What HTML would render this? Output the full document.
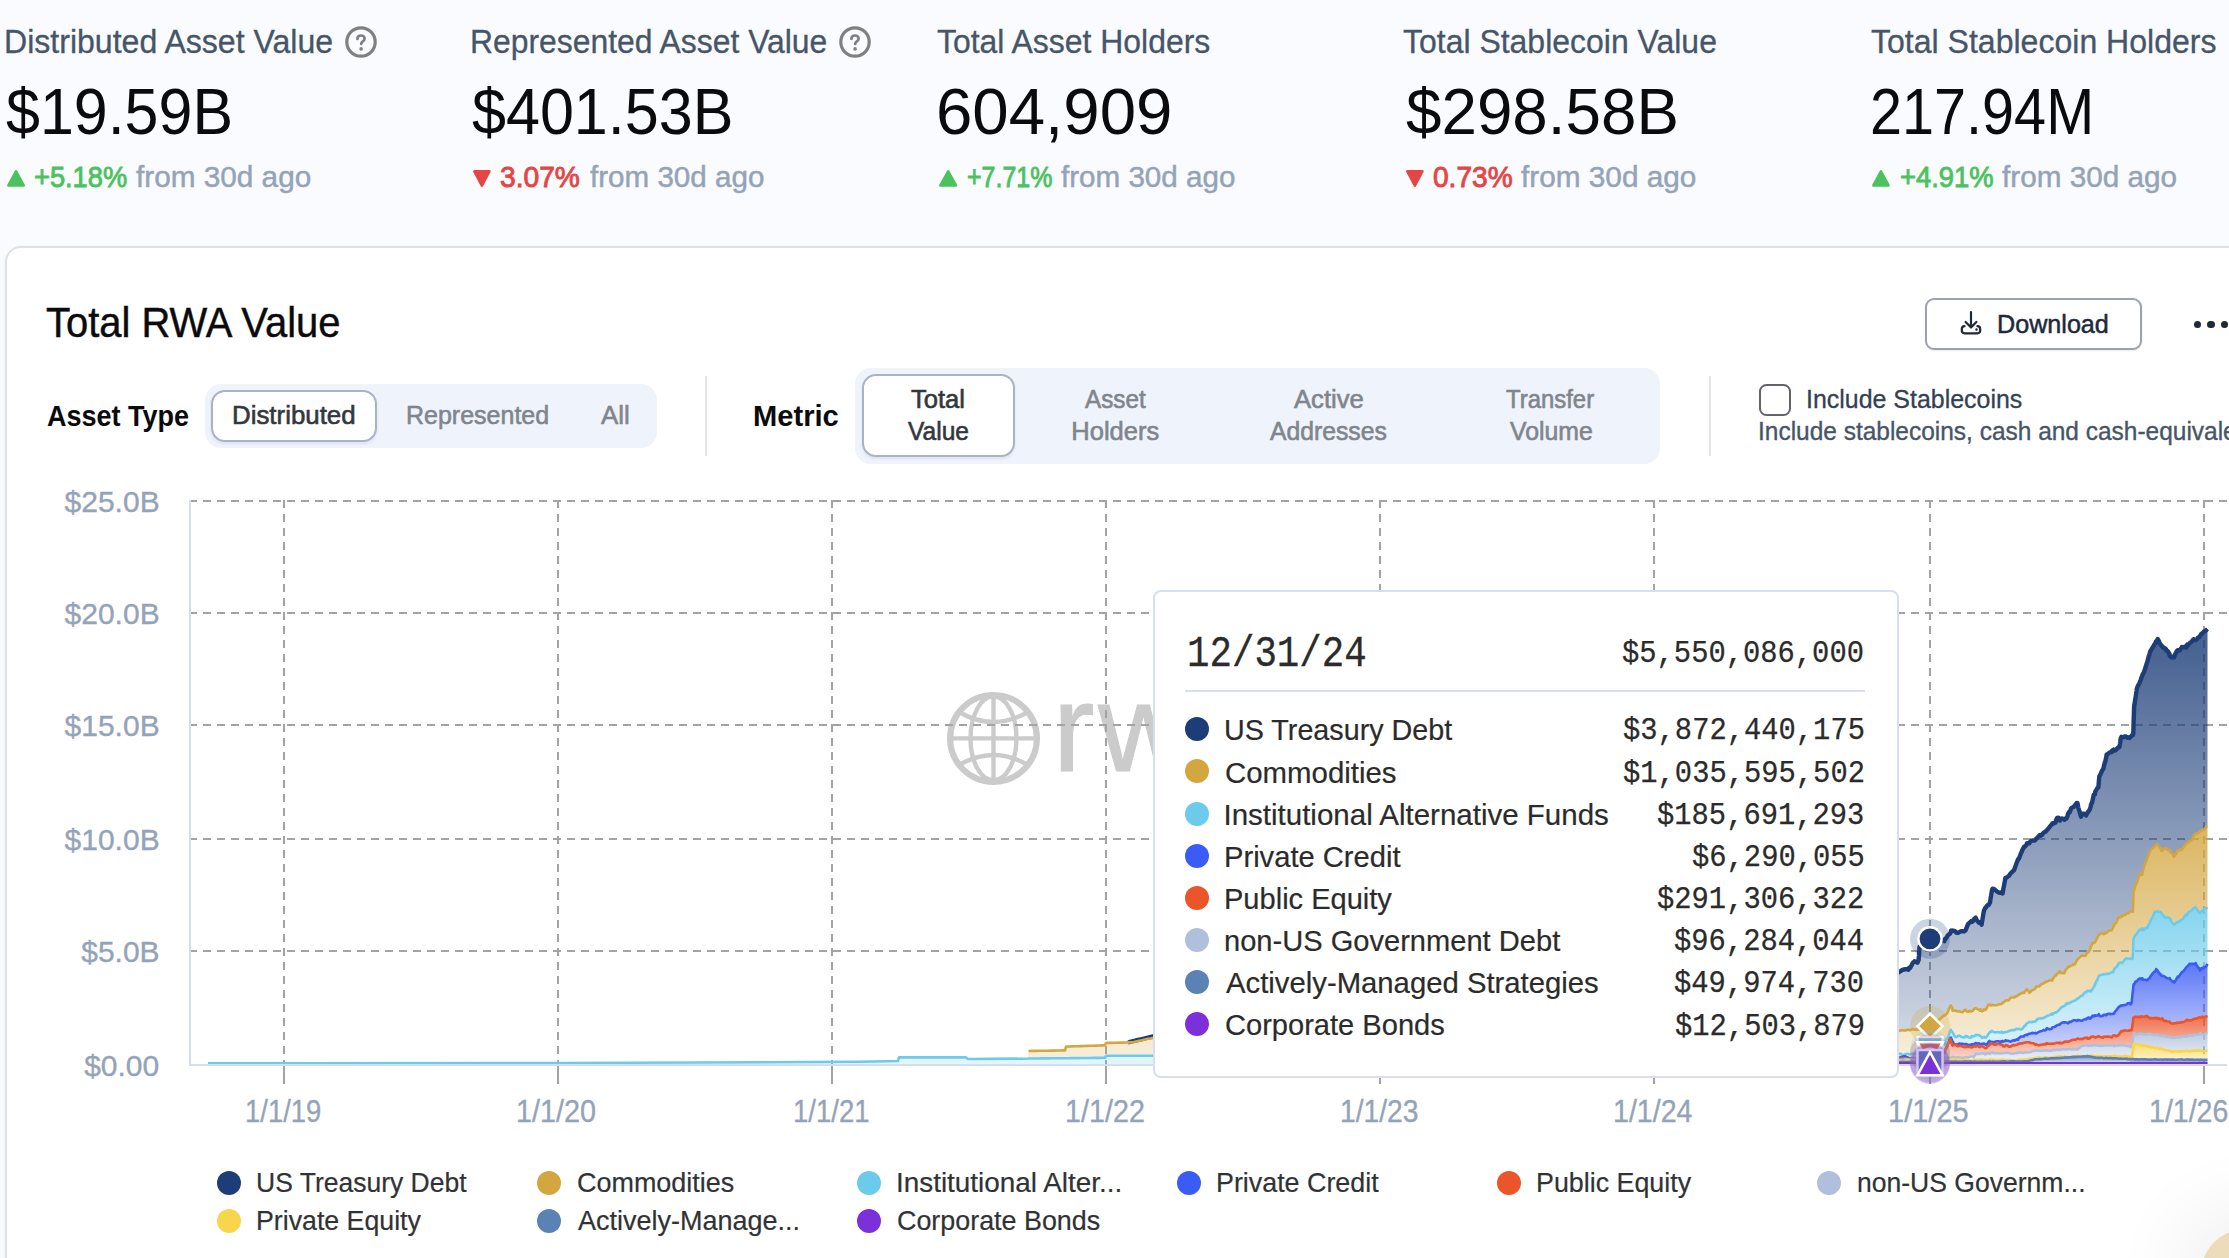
<!DOCTYPE html>
<html><head><meta charset="utf-8"><title>RWA</title><style>
html,body{margin:0;padding:0;width:2229px;height:1258px;overflow:hidden;background:#f9fbfe;}
.a{position:absolute;display:block;}
.t{position:absolute;white-space:nowrap;transform-origin:0 50%;display:block;}
.card{left:5px;top:246px;width:2400px;height:1200px;box-sizing:border-box;border:2px solid #e1e1e4;border-radius:16px;background:#fff;box-shadow:0 1px 4px rgba(0,0,0,0.05);}
.dl{left:1925px;top:298px;width:217px;height:51.5px;box-sizing:border-box;border:2px solid #9ca2ad;border-radius:9px;background:#fff;box-shadow:0 1px 2px rgba(0,0,0,0.08);}
.seg{background:#eef3fc;border-radius:16px;}
.pill{box-sizing:border-box;background:#fff;border:2px solid #a9b3c7;border-radius:14px;box-shadow:0 2px 3px rgba(30,40,80,0.08);}
.tip{left:1153px;top:590px;width:746px;height:488px;box-sizing:border-box;border:2px solid #d7deec;border-radius:8px;background:#fff;}
</style></head><body>
<span class="t" style="left:4.25px;top:23.27px;font-family:'Liberation Sans', sans-serif;font-weight:400;font-size:32.4px;line-height:39px;color:#475569;transform:scaleX(0.9898);-webkit-text-stroke:0.3px #475569;">Distributed Asset Value</span>
<svg class="a" style="left:344px;top:25px" width="34" height="34" viewBox="0 0 34 34"><circle cx="17" cy="17" r="14.2" fill="none" stroke="#808080" stroke-width="3.2"/><path d="M13.4 14 C13.4 11.8 15 10.5 17 10.5 C19 10.5 20.6 11.8 20.6 13.7 C20.6 15.4 19.3 16.1 18.3 16.8 C17.5 17.4 17.2 17.9 17.2 18.9" fill="none" stroke="#808080" stroke-width="2.7" stroke-linecap="round"/><circle cx="17.1" cy="23.9" r="1.8" fill="#808080"/></svg>
<span class="t" style="left:6.29px;top:72.56px;font-family:'Liberation Sans', sans-serif;font-weight:400;font-size:65px;line-height:78px;color:#0b0b0d;transform:scaleX(0.9376);">$19.59B</span>
<svg class="a" style="left:6.9px;top:168.5px" width="18.1" height="18" viewBox="0 0 18 18" preserveAspectRatio="none"><path d="M9 2.3 L16.6 16.4 L1.4 16.4 Z" fill="#4cc25f" stroke="#4cc25f" stroke-width="2.6" stroke-linejoin="round"/></svg>
<span class="t" style="left:34.21px;top:160.25px;font-family:'Liberation Sans', sans-serif;font-weight:400;font-size:29px;line-height:35px;color:#4cc25f;transform:scaleX(0.9392);-webkit-text-stroke:0.9px #4cc25f;">+5.18%</span>
<span class="t" style="left:136.05px;top:160.25px;font-family:'Liberation Sans', sans-serif;font-weight:400;font-size:29px;line-height:35px;color:#94a3b8;transform:scaleX(1.0255);-webkit-text-stroke:0.45px #94a3b8;">from 30d ago</span>
<span class="t" style="left:470.17px;top:23.27px;font-family:'Liberation Sans', sans-serif;font-weight:400;font-size:32.4px;line-height:39px;color:#475569;transform:scaleX(0.9840);-webkit-text-stroke:0.3px #475569;">Represented Asset Value</span>
<svg class="a" style="left:838px;top:25px" width="34" height="34" viewBox="0 0 34 34"><circle cx="17" cy="17" r="14.2" fill="none" stroke="#808080" stroke-width="3.2"/><path d="M13.4 14 C13.4 11.8 15 10.5 17 10.5 C19 10.5 20.6 11.8 20.6 13.7 C20.6 15.4 19.3 16.1 18.3 16.8 C17.5 17.4 17.2 17.9 17.2 18.9" fill="none" stroke="#808080" stroke-width="2.7" stroke-linecap="round"/><circle cx="17.1" cy="23.9" r="1.8" fill="#808080"/></svg>
<span class="t" style="left:472.19px;top:72.56px;font-family:'Liberation Sans', sans-serif;font-weight:400;font-size:65px;line-height:78px;color:#0b0b0d;transform:scaleX(0.9391);">$401.53B</span>
<svg class="a" style="left:472.8px;top:169.5px" width="17.8" height="18" viewBox="0 0 18 18" preserveAspectRatio="none"><path d="M1.4 1.4 L16.6 1.4 L9 15.6 Z" fill="#e54545" stroke="#e54545" stroke-width="2.6" stroke-linejoin="round"/></svg>
<span class="t" style="left:500.44px;top:160.25px;font-family:'Liberation Sans', sans-serif;font-weight:400;font-size:29px;line-height:35px;color:#e54545;transform:scaleX(0.9715);-webkit-text-stroke:0.9px #e54545;">3.07%</span>
<span class="t" style="left:589.86px;top:160.25px;font-family:'Liberation Sans', sans-serif;font-weight:400;font-size:29px;line-height:35px;color:#94a3b8;transform:scaleX(1.0202);-webkit-text-stroke:0.45px #94a3b8;">from 30d ago</span>
<span class="t" style="left:937.08px;top:23.27px;font-family:'Liberation Sans', sans-serif;font-weight:400;font-size:32.4px;line-height:39px;color:#475569;transform:scaleX(0.9855);-webkit-text-stroke:0.3px #475569;">Total Asset Holders</span>
<span class="t" style="left:935.53px;top:72.56px;font-family:'Liberation Sans', sans-serif;font-weight:400;font-size:65px;line-height:78px;color:#0b0b0d;transform:scaleX(1.0060);">604,909</span>
<svg class="a" style="left:939.2px;top:168.5px" width="18.4" height="18" viewBox="0 0 18 18" preserveAspectRatio="none"><path d="M9 2.3 L16.6 16.4 L1.4 16.4 Z" fill="#4cc25f" stroke="#4cc25f" stroke-width="2.6" stroke-linejoin="round"/></svg>
<span class="t" style="left:966.81px;top:160.25px;font-family:'Liberation Sans', sans-serif;font-weight:400;font-size:29px;line-height:35px;color:#4cc25f;transform:scaleX(0.8606);-webkit-text-stroke:0.9px #4cc25f;">+7.71%</span>
<span class="t" style="left:1060.76px;top:160.25px;font-family:'Liberation Sans', sans-serif;font-weight:400;font-size:29px;line-height:35px;color:#94a3b8;transform:scaleX(1.0202);-webkit-text-stroke:0.45px #94a3b8;">from 30d ago</span>
<span class="t" style="left:1403.48px;top:23.27px;font-family:'Liberation Sans', sans-serif;font-weight:400;font-size:32.4px;line-height:39px;color:#475569;transform:scaleX(0.9868);-webkit-text-stroke:0.3px #475569;">Total Stablecoin Value</span>
<span class="t" style="left:1405.56px;top:72.56px;font-family:'Liberation Sans', sans-serif;font-weight:400;font-size:65px;line-height:78px;color:#0b0b0d;transform:scaleX(0.9807);">$298.58B</span>
<svg class="a" style="left:1406.2px;top:169.5px" width="17.8" height="18" viewBox="0 0 18 18" preserveAspectRatio="none"><path d="M1.4 1.4 L16.6 1.4 L9 15.6 Z" fill="#e54545" stroke="#e54545" stroke-width="2.6" stroke-linejoin="round"/></svg>
<span class="t" style="left:1433.28px;top:160.25px;font-family:'Liberation Sans', sans-serif;font-weight:400;font-size:29px;line-height:35px;color:#e54545;transform:scaleX(0.9686);-webkit-text-stroke:0.9px #e54545;">0.73%</span>
<span class="t" style="left:1521.45px;top:160.25px;font-family:'Liberation Sans', sans-serif;font-weight:400;font-size:29px;line-height:35px;color:#94a3b8;transform:scaleX(1.0261);-webkit-text-stroke:0.45px #94a3b8;">from 30d ago</span>
<span class="t" style="left:1870.58px;top:23.27px;font-family:'Liberation Sans', sans-serif;font-weight:400;font-size:32.4px;line-height:39px;color:#475569;transform:scaleX(0.9892);-webkit-text-stroke:0.3px #475569;">Total Stablecoin Holders</span>
<span class="t" style="left:1870.02px;top:72.56px;font-family:'Liberation Sans', sans-serif;font-weight:400;font-size:65px;line-height:78px;color:#0b0b0d;transform:scaleX(0.8860);">217.94M</span>
<svg class="a" style="left:1872.4px;top:168.5px" width="17.9" height="18" viewBox="0 0 18 18" preserveAspectRatio="none"><path d="M9 2.3 L16.6 16.4 L1.4 16.4 Z" fill="#4cc25f" stroke="#4cc25f" stroke-width="2.6" stroke-linejoin="round"/></svg>
<span class="t" style="left:1899.70px;top:160.25px;font-family:'Liberation Sans', sans-serif;font-weight:400;font-size:29px;line-height:35px;color:#4cc25f;transform:scaleX(0.9443);-webkit-text-stroke:0.9px #4cc25f;">+4.91%</span>
<span class="t" style="left:2002.25px;top:160.25px;font-family:'Liberation Sans', sans-serif;font-weight:400;font-size:29px;line-height:35px;color:#94a3b8;transform:scaleX(1.0249);-webkit-text-stroke:0.45px #94a3b8;">from 30d ago</span>
<div class="a card"></div>
<span class="t" style="left:46.30px;top:298.34px;font-family:'Liberation Sans', sans-serif;font-weight:400;font-size:42px;line-height:50px;color:#0b0b0d;transform:scaleX(0.9508);-webkit-text-stroke:0.45px #0b0b0d;">Total RWA Value</span>
<div class="a dl"></div>
<svg class="a" style="left:1955px;top:305px" width="32" height="34" viewBox="1955 305 32 34"><path d="M1971 312.2 V327 M1965.6 322 L1971 327.4 L1976.4 322" fill="none" stroke="#1e293b" stroke-width="2.2" stroke-linecap="round" stroke-linejoin="round"/><path d="M1964.6 326.2 Q1961.8 326.2 1961.8 329.2 V330.6 Q1961.8 333.3 1964.6 333.3 H1977.4 Q1980.2 333.3 1980.2 330.6 V329.2 Q1980.2 326.2 1977.4 326.2" fill="none" stroke="#1e293b" stroke-width="2.2" stroke-linecap="round" stroke-linejoin="round"/><circle cx="1976.5" cy="329.5" r="1.2" fill="#1e293b"/></svg>
<span class="t" style="left:1997.43px;top:308.53px;font-family:'Liberation Sans', sans-serif;font-weight:400;font-size:25px;line-height:30px;color:#1e293b;transform:scaleX(1.0059);-webkit-text-stroke:0.5px #1e293b;">Download</span>
<div class="a" style="left:2193.6px;top:320.5px;width:7.4px;height:7.4px;border-radius:50%;background:#1e293b"></div>
<div class="a" style="left:2207.2px;top:320.5px;width:7.4px;height:7.4px;border-radius:50%;background:#1e293b"></div>
<div class="a" style="left:2220.9px;top:320.5px;width:7.4px;height:7.4px;border-radius:50%;background:#1e293b"></div>
<span class="t" style="left:46.93px;top:398.37px;font-family:'Liberation Sans', sans-serif;font-weight:700;font-size:29.5px;line-height:35px;color:#0b0b0d;transform:scaleX(0.9148);">Asset Type</span>
<div class="a seg" style="left:205px;top:384px;width:451.7px;height:63.8px"></div>
<div class="a pill" style="left:211px;top:390px;width:165.5px;height:51.5px"></div>
<span class="t" style="left:231.87px;top:399.76px;font-family:'Liberation Sans', sans-serif;font-weight:400;font-size:25.5px;line-height:31px;color:#33373d;transform:scaleX(1.0144);-webkit-text-stroke:0.6px #33373d;">Distributed</span>
<span class="t" style="left:405.64px;top:399.96px;font-family:'Liberation Sans', sans-serif;font-weight:400;font-size:25.5px;line-height:31px;color:#80858c;transform:scaleX(0.9804);-webkit-text-stroke:0.55px #80858c;">Represented</span>
<span class="t" style="left:600.94px;top:399.96px;font-family:'Liberation Sans', sans-serif;font-weight:400;font-size:25.5px;line-height:31px;color:#80858c;transform:scaleX(1.0157);-webkit-text-stroke:0.55px #80858c;">All</span>
<div class="a" style="left:705px;top:376px;width:2px;height:79.5px;background:#e3e3e7"></div>
<span class="t" style="left:753.43px;top:398.37px;font-family:'Liberation Sans', sans-serif;font-weight:700;font-size:29.5px;line-height:35px;color:#0b0b0d;transform:scaleX(0.9872);">Metric</span>
<div class="a seg" style="left:855.3px;top:368px;width:805.1px;height:95.7px"></div>
<div class="a pill" style="left:861.5px;top:374.2px;width:153px;height:82.8px"></div>
<span class="t" style="left:911.32px;top:383.86px;font-family:'Liberation Sans', sans-serif;font-weight:400;font-size:25.5px;line-height:31px;color:#33373d;transform:scaleX(1.0024);-webkit-text-stroke:0.6px #33373d;">Total</span>
<span class="t" style="left:907.68px;top:415.76px;font-family:'Liberation Sans', sans-serif;font-weight:400;font-size:25.5px;line-height:31px;color:#33373d;transform:scaleX(0.9631);-webkit-text-stroke:0.6px #33373d;">Value</span>
<span class="t" style="left:1085.44px;top:383.86px;font-family:'Liberation Sans', sans-serif;font-weight:400;font-size:25.5px;line-height:31px;color:#80858c;transform:scaleX(0.9528);-webkit-text-stroke:0.6px #80858c;">Asset</span>
<span class="t" style="left:1071.30px;top:415.76px;font-family:'Liberation Sans', sans-serif;font-weight:400;font-size:25.5px;line-height:31px;color:#80858c;-webkit-text-stroke:0.6px #80858c;">Holders</span>
<span class="t" style="left:1294.14px;top:383.86px;font-family:'Liberation Sans', sans-serif;font-weight:400;font-size:25.5px;line-height:31px;color:#80858c;transform:scaleX(1.0062);-webkit-text-stroke:0.6px #80858c;">Active</span>
<span class="t" style="left:1269.94px;top:415.76px;font-family:'Liberation Sans', sans-serif;font-weight:400;font-size:25.5px;line-height:31px;color:#80858c;transform:scaleX(0.9696);-webkit-text-stroke:0.6px #80858c;">Addresses</span>
<span class="t" style="left:1506.46px;top:383.86px;font-family:'Liberation Sans', sans-serif;font-weight:400;font-size:25.5px;line-height:31px;color:#80858c;transform:scaleX(0.9375);-webkit-text-stroke:0.6px #80858c;">Transfer</span>
<span class="t" style="left:1510.18px;top:415.76px;font-family:'Liberation Sans', sans-serif;font-weight:400;font-size:25.5px;line-height:31px;color:#80858c;transform:scaleX(0.9722);-webkit-text-stroke:0.6px #80858c;">Volume</span>
<div class="a" style="left:1709px;top:376px;width:2px;height:79.5px;background:#e3e3e7"></div>
<div class="a" style="left:1759px;top:384.3px;width:31.8px;height:31.5px;box-sizing:border-box;border:2.4px solid #64626b;border-radius:7.5px;background:#fff"></div>
<span class="t" style="left:1805.69px;top:383.83px;font-family:'Liberation Sans', sans-serif;font-weight:400;font-size:25px;line-height:30px;color:#334155;transform:scaleX(0.9975);-webkit-text-stroke:0.3px #334155;">Include Stablecoins</span>
<span class="t" style="left:1757.84px;top:415.93px;font-family:'Liberation Sans', sans-serif;font-weight:400;font-size:25px;line-height:30px;color:#475569;transform:scaleX(0.9786);-webkit-text-stroke:0.35px #475569;">Include stablecoins, cash and cash-equivalents</span>
<svg class="a" style="left:0;top:0" width="2229" height="1258" viewBox="0 0 2229 1258">
<defs>
<linearGradient id="g0" x1="0" y1="0" x2="0" y2="1"><stop offset="5%" stop-color="#7b30d9" stop-opacity="0.8"/><stop offset="95%" stop-color="#7b30d9" stop-opacity="0.2"/></linearGradient>
<linearGradient id="g1" x1="0" y1="0" x2="0" y2="1"><stop offset="5%" stop-color="#5a82b4" stop-opacity="0.8"/><stop offset="95%" stop-color="#5a82b4" stop-opacity="0.2"/></linearGradient>
<linearGradient id="g2" x1="0" y1="0" x2="0" y2="1"><stop offset="5%" stop-color="#f8d54a" stop-opacity="0.8"/><stop offset="95%" stop-color="#f8d54a" stop-opacity="0.2"/></linearGradient>
<linearGradient id="g3" x1="0" y1="0" x2="0" y2="1"><stop offset="5%" stop-color="#b0c0dc" stop-opacity="0.8"/><stop offset="95%" stop-color="#b0c0dc" stop-opacity="0.2"/></linearGradient>
<linearGradient id="g4" x1="0" y1="0" x2="0" y2="1"><stop offset="5%" stop-color="#ec5429" stop-opacity="0.8"/><stop offset="95%" stop-color="#ec5429" stop-opacity="0.2"/></linearGradient>
<linearGradient id="g5" x1="0" y1="0" x2="0" y2="1"><stop offset="5%" stop-color="#3b5cf4" stop-opacity="0.8"/><stop offset="95%" stop-color="#3b5cf4" stop-opacity="0.2"/></linearGradient>
<linearGradient id="g6" x1="0" y1="0" x2="0" y2="1"><stop offset="5%" stop-color="#6ccbeb" stop-opacity="0.8"/><stop offset="95%" stop-color="#6ccbeb" stop-opacity="0.2"/></linearGradient>
<linearGradient id="g7" x1="0" y1="0" x2="0" y2="1"><stop offset="5%" stop-color="#d4a640" stop-opacity="0.8"/><stop offset="95%" stop-color="#d4a640" stop-opacity="0.2"/></linearGradient>
<linearGradient id="g8" x1="0" y1="0" x2="0" y2="1"><stop offset="5%" stop-color="#1c3d78" stop-opacity="0.8"/><stop offset="95%" stop-color="#1c3d78" stop-opacity="0.2"/></linearGradient>
</defs>
<g fill="none" stroke="#cbcbcb" stroke-width="4.4"><circle cx="993.5" cy="738.4" r="43.4" stroke-width="6.2"/><line x1="993.5" y1="695" x2="993.5" y2="782"/><line x1="950" y1="738.4" x2="1037" y2="738.4"/><ellipse cx="993.5" cy="738.4" rx="23" ry="42"/><path d="M959 712 Q993.5 732 1028 712"/><path d="M959 765 Q993.5 745 1028 765"/></g>
<text y="771.2" font-family="Liberation Sans" font-size="125" fill="#cbcbcb" stroke="#cbcbcb" stroke-width="1.2"><tspan x="1052.7">r</tspan><tspan x="1098.3">wa</tspan></text>
<g stroke="#a3a3a3" stroke-width="2" stroke-dasharray="8 6" fill="none">
<line x1="189" y1="501" x2="2229" y2="501"/>
<line x1="189" y1="613" x2="2229" y2="613"/>
<line x1="189" y1="725" x2="2229" y2="725"/>
<line x1="189" y1="839" x2="2229" y2="839"/>
<line x1="189" y1="951" x2="2229" y2="951"/>
<line x1="284" y1="500" x2="284" y2="1064"/>
<line x1="558" y1="500" x2="558" y2="1064"/>
<line x1="832" y1="500" x2="832" y2="1064"/>
<line x1="1106" y1="500" x2="1106" y2="1064"/>
<line x1="1380" y1="500" x2="1380" y2="1064"/>
<line x1="1654" y1="500" x2="1654" y2="1064"/>
<line x1="1930" y1="500" x2="1930" y2="1064"/>
<line x1="2204" y1="500" x2="2204" y2="1064"/>
</g>
<path d="M208 1063.4 L560 1063 L860 1061.8 L898 1061 L899 1057.4 L966 1057.4 L968 1059 L1028 1058.6 L1028.5 1051 L1030 1051 L1033 1050.9 L1035 1050.9 L1036 1050.9 L1039 1050.8 L1042 1050.8 L1045 1050.7 L1048 1050.7 L1051 1050.6 L1054 1050.6 L1057 1050.5 L1060 1050.5 L1063 1050.4 L1065 1050.4 L1066 1046.6 L1069 1046.5 L1072 1046.4 L1075 1046.3 L1078 1046.2 L1081 1046.1 L1084 1046 L1087 1045.9 L1090 1045.8 L1093 1045.7 L1096 1045.6 L1099 1045.5 L1102 1045.4 L1105 1045.3 L1106 1043 L1108 1042.9 L1111 1042.9 L1114 1042.8 L1117 1042.7 L1120 1042.6 L1123 1042.6 L1126 1042.5 L1128 1042.3 L1129 1042.1 L1132 1041.4 L1133 1041.1 L1135 1040.7 L1138 1040 L1141 1039.3 L1144 1038.6 L1147 1037.9 L1150 1037.2 L1153 1036.5 L1155 1036 L1300 1023.7 L1500 1006.7 L1600 998.2 L1897 973 L1898 972.8 L1899.1 971.6 L1899.5 971.7 L1901 970.9 L1902.5 969.9 L1904 969.5 L1905.5 969.2 L1907 969.2 L1908.5 969.8 L1909.1 967.8 L1910 968.1 L1911.5 965.5 L1913 962.4 L1913.9 962 L1914.5 961.2 L1916 961.8 L1917 962.6 L1917.5 962.7 L1918.6 960.1 L1919 955.5 L1919.5 946.8 L1920 947.3 L1920.5 946.9 L1922 946.1 L1923.5 944.8 L1925 942 L1926.5 940 L1928 940.4 L1929.5 939.6 L1930 940.5 L1931 940 L1932.5 939.9 L1934 940.1 L1935.5 940.3 L1937 939.8 L1938.5 940 L1940 940.6 L1941.5 939.9 L1943 939.9 L1944.4 941.1 L1944.5 940.6 L1945 939.2 L1946 938.3 L1947.3 936.1 L1947.5 935.6 L1949 934.4 L1950 933.7 L1950.5 932.6 L1950.8 931.7 L1951.1 930.6 L1952 930.8 L1952.6 930.4 L1953.5 930.8 L1954.3 931 L1955 931.2 L1956.5 932.7 L1956.8 932.5 L1958 932.9 L1958.5 932.4 L1959.5 932 L1961 931.3 L1962.5 931.3 L1964 931.4 L1965.4 930.6 L1965.5 930.3 L1967 926.7 L1968.2 923.9 L1968.5 923.7 L1970 922.4 L1971.3 921.1 L1971.5 921.9 L1973 921.2 L1973.9 919.7 L1974.5 918.6 L1975.6 917.7 L1975.9 918.2 L1976 918.8 L1977.5 921.1 L1979 922.8 L1979.8 922.5 L1980.5 922 L1981.6 924.8 L1982 922 L1983.5 913.2 L1984 910.5 L1985 908.4 L1985.8 907.6 L1986.5 906.3 L1988 904.8 L1988.4 905.2 L1989.5 903.5 L1990 902.7 L1990.2 901 L1990.9 896.6 L1991 896.2 L1992.1 889.5 L1992.5 888.8 L1994 888.9 L1995.5 890.1 L1997 891.5 L1998.5 892.5 L2000 892.8 L2001.2 892.4 L2001.5 892.2 L2002.6 893.4 L2003 890.7 L2004.5 882.9 L2005.4 878 L2006 878.2 L2007.5 876.9 L2009 875.7 L2009.7 874.6 L2010.5 873.5 L2012 872.1 L2013.5 870.7 L2014 870.1 L2014.6 868.6 L2015 867.6 L2016.5 863.1 L2017.6 860.5 L2018 859.2 L2018.2 859.6 L2019.5 857.3 L2021 853.3 L2022.5 849.7 L2024 846.9 L2024.2 847.3 L2024.7 846.3 L2025.5 846 L2026.7 844.3 L2027 843.3 L2028.5 843.1 L2029.3 843.3 L2030 842 L2031.5 840.7 L2033 840.5 L2034.5 840.5 L2035.3 840.2 L2036 839 L2036.9 838.2 L2037.5 837.5 L2039 835.9 L2040 835 L2040.5 835.8 L2042 834.9 L2043.5 832.8 L2043.8 832.5 L2045 832 L2046.4 830.8 L2046.5 830.3 L2047 830.1 L2048 829 L2049.5 827.1 L2051 825.2 L2051.9 824.3 L2052.3 823.5 L2052.4 824.2 L2052.5 823.2 L2054 823.2 L2055.5 822.5 L2055.9 820.7 L2057 818 L2058.5 817.7 L2059.4 819 L2059.9 820.6 L2060 820.2 L2060.8 819 L2061.5 818.4 L2063 818.9 L2064.5 819.7 L2064.6 819 L2066 818.3 L2066.4 818.5 L2067.5 816.3 L2067.8 814.2 L2069 812.1 L2069.4 812.7 L2070.5 810.1 L2071 808.5 L2072 807.5 L2073.5 807 L2075 805.2 L2076.5 803.2 L2076.6 803.5 L2077.4 803 L2077.9 805.1 L2078 805.6 L2078.2 807.3 L2079.5 811.4 L2081 816.7 L2082.1 814.5 L2082.5 813.8 L2084 813.7 L2085.5 814.6 L2086.1 815.4 L2086.4 814.6 L2087 813.8 L2087.4 813 L2087.7 812.6 L2088.1 811.6 L2088.5 811.5 L2089.3 810.2 L2090 808.9 L2090.7 806.7 L2090.9 805 L2091.5 803.4 L2092 803 L2092.4 801 L2092.5 800.8 L2093 798.2 L2093.8 794.7 L2094.5 794.8 L2094.9 794.4 L2095 793 L2095.6 791 L2096 790.3 L2097.5 787.9 L2098.4 787.4 L2098.8 781.8 L2099 780.1 L2099.3 776.5 L2100.5 774.2 L2102 770.8 L2103 769.1 L2103.5 768.6 L2103.6 767.4 L2105 761.7 L2105.2 762 L2106.5 755.8 L2106.6 754.5 L2108 753.9 L2109.5 752.6 L2111 751.9 L2111.5 752.1 L2112 750.9 L2112.5 750.2 L2113 750.8 L2113.1 751.1 L2113.9 749.6 L2114 750 L2114.7 750.6 L2115.5 750.2 L2116.2 749.6 L2117 748.6 L2118.5 747.2 L2119.4 747.2 L2120 743.8 L2120.3 741.7 L2120.5 739.2 L2121.3 737.1 L2121.5 736.8 L2122.2 737.5 L2123 737.2 L2124.3 737 L2124.5 736.4 L2126 736.5 L2127.4 737.5 L2127.5 737.7 L2129 737.3 L2129.5 738 L2129.8 737.4 L2130.5 737 L2131.6 735.8 L2132 735.4 L2132.6 735 L2132.9 735.1 L2133.2 734.4 L2133.4 730.1 L2133.5 726.8 L2133.6 722.3 L2134.1 706.9 L2135 700.7 L2135.7 696.5 L2136.5 691.1 L2136.8 688.7 L2138 685.6 L2139.5 683.1 L2139.6 682.8 L2140 681.8 L2141 679.2 L2141.4 677.7 L2142.4 675.2 L2142.5 674.4 L2142.6 674.7 L2144 672 L2145.5 667.5 L2146.9 663 L2147 662.6 L2147.2 662.3 L2148.5 657.3 L2149.6 653.9 L2150 652.3 L2150.2 651.6 L2151.5 649.2 L2153 646.9 L2154.5 644.5 L2154.7 644 L2155.1 643.8 L2156 641.4 L2156.2 641.6 L2157.5 639.6 L2157.7 639 L2157.9 639.3 L2159 641.3 L2159.3 642.4 L2160.5 644.4 L2160.8 644.9 L2161.5 645.8 L2162 646.3 L2162.4 646.6 L2163.5 647.8 L2163.8 647.5 L2165 648.3 L2166.1 649.3 L2166.3 650.5 L2166.5 650.3 L2168 651.5 L2169.5 654 L2169.7 655.7 L2169.8 655.4 L2170.1 656.2 L2171 657 L2172.5 657.4 L2172.8 656.7 L2173.9 656.5 L2174 657.4 L2174.3 656.6 L2175.5 653.5 L2177 650.9 L2177.7 650.1 L2178 650.2 L2178.5 650.6 L2180 650.2 L2180.4 649.2 L2181.5 647.7 L2181.9 647 L2183 647.1 L2184.5 647 L2186 646.1 L2186.2 647.5 L2187.2 644.6 L2187.5 645.4 L2187.9 645.5 L2189 644 L2189.4 643.5 L2190.5 642.4 L2191 642.3 L2192 641.4 L2192.6 640.2 L2193.5 639.3 L2193.9 639.2 L2195 639.7 L2195.5 640.1 L2196.5 639.4 L2197.7 638.3 L2198 637.4 L2199 637.4 L2199.5 637 L2200 636.2 L2201 634.1 L2201.5 634.1 L2201.8 633.8 L2202.5 633 L2204 631.6 L2205.5 630.7 L2206.3 630.1 L2207.5 629 L2207.5 826.2 L2206.3 826.5 L2205.5 828.1 L2204 829.6 L2202.5 829.9 L2201.8 830.4 L2201.5 831 L2201 831.1 L2200 831.2 L2199.5 831.8 L2199 832.3 L2198 833.2 L2197.7 833.4 L2196.5 833.5 L2195.5 833.8 L2195 834.8 L2193.9 834.8 L2193.5 836.6 L2192.6 838.6 L2192 839.5 L2191 840.5 L2190.5 840.9 L2189.4 841.5 L2189 841.8 L2187.9 842.8 L2187.5 842.9 L2187.2 842.4 L2186.2 843.2 L2186 844.1 L2184.5 846.3 L2183 848 L2181.9 849.5 L2181.5 850 L2180.4 849.2 L2180 850.3 L2178.5 850.5 L2178 850.3 L2177.7 850 L2177 852.6 L2175.5 854.5 L2174.3 856.3 L2174 856.1 L2173.9 856.7 L2172.8 854 L2172.5 854 L2171 852.6 L2170.1 852 L2169.8 850.9 L2169.7 849.8 L2169.5 849.9 L2168 850.1 L2166.5 849 L2166.3 848.1 L2166.1 848.2 L2165 848.4 L2163.8 849 L2163.5 849.6 L2162.4 850.5 L2162 851 L2161.5 851 L2160.8 848.8 L2160.5 848.7 L2159.3 847.1 L2159 846.8 L2157.9 845.1 L2157.7 844.3 L2157.5 844.6 L2156.2 845 L2156 844.9 L2155.1 845.6 L2154.7 846.4 L2154.5 847 L2153 848 L2151.5 849 L2150.2 850.6 L2150 851 L2149.6 852.1 L2148.5 855.1 L2147.2 858.6 L2147 859.5 L2146.9 859.5 L2145.5 862.9 L2144 866.8 L2142.6 872.5 L2142.5 874.6 L2142.4 873.9 L2141.4 874.8 L2141 873.5 L2140 874 L2139.6 874.8 L2139.5 875.2 L2138 879.3 L2136.8 882.8 L2136.5 883.2 L2135.7 884.4 L2135 887.2 L2134.1 890.3 L2133.6 892.1 L2133.5 893.2 L2133.4 893 L2133.2 901.3 L2132.9 911.6 L2132.6 911 L2132 911.1 L2131.6 911.1 L2130.5 911.6 L2129.8 911.9 L2129.5 912.6 L2129 913 L2127.5 913.2 L2127.4 913.1 L2126 914.1 L2124.5 915.2 L2124.3 914.7 L2123 915.3 L2122.2 915.8 L2121.5 916.9 L2121.3 916.9 L2120.5 916.8 L2120.3 917.5 L2120 917.5 L2119.4 917.3 L2118.5 917.8 L2117 920.6 L2116.2 922.6 L2115.5 923 L2114.7 924 L2114 925.8 L2113.9 924.6 L2113.1 927.5 L2113 927.5 L2112.5 928.9 L2112 929.5 L2111.5 930.2 L2111 930 L2109.5 930.4 L2108 931.5 L2106.6 932.8 L2106.5 933 L2105.2 932.6 L2105 933.7 L2103.6 934 L2103.5 934.2 L2103 933.8 L2102 933 L2100.5 933.6 L2099.3 934.8 L2099 934.9 L2098.8 935 L2098.4 935.4 L2097.5 937.3 L2096 940.1 L2095.6 941.3 L2095 942.4 L2094.9 942.2 L2094.5 942.4 L2093.8 942.9 L2093 943.1 L2092.5 943.7 L2092.4 942.9 L2092 944.3 L2091.5 945.7 L2090.9 946.6 L2090.7 947.3 L2090 949.5 L2089.3 950.9 L2088.5 952.2 L2088.1 952.1 L2087.7 952.4 L2087.4 952.3 L2087 952.4 L2086.4 953.7 L2086.1 954.8 L2085.5 955.6 L2084 955.9 L2082.5 955.8 L2082.1 955.5 L2081 956.2 L2079.5 957.7 L2078.2 958.8 L2078 959.3 L2077.9 959.3 L2077.4 959.7 L2076.6 961.1 L2076.5 960.5 L2075 964.4 L2073.5 964.3 L2072 965.5 L2071 965.6 L2070.5 965.9 L2069.4 966.6 L2069 966.4 L2067.8 966.8 L2067.5 968 L2066.4 969.3 L2066 969.3 L2064.6 972.3 L2064.5 973.2 L2063 973.2 L2061.5 972.6 L2060.8 973 L2060 973 L2059.9 971.5 L2059.4 972 L2058.5 972.5 L2057 974 L2055.9 975.5 L2055.5 975 L2054 977.1 L2052.5 979.5 L2052.4 980.2 L2052.3 980.7 L2051.9 980.3 L2051 980.1 L2049.5 980.6 L2048 981.1 L2047 981.2 L2046.5 981.3 L2046.4 981.9 L2045 982.2 L2043.8 983.1 L2043.5 983.4 L2042 984 L2040.5 984.7 L2040 985.9 L2039 986.5 L2037.5 986.4 L2036.9 986.4 L2036 987.1 L2035.3 988.5 L2034.5 989.1 L2033 989.9 L2031.5 990.7 L2030 992.3 L2029.3 992.8 L2028.5 991 L2027 989.3 L2026.7 989.4 L2025.5 991 L2024.7 991.8 L2024.2 992.8 L2024 992.7 L2022.5 992.9 L2021 993.5 L2019.5 994.3 L2018.2 995 L2018 995.4 L2017.6 995.8 L2016.5 996.2 L2015 997.1 L2014.6 996.7 L2014 997 L2013.5 997.4 L2012 997.5 L2010.5 997.7 L2009.7 998.9 L2009 1000.2 L2007.5 1000.4 L2006 1000.4 L2005.4 1000.5 L2004.5 1001.7 L2003 1002.8 L2002.6 1002.5 L2001.5 1003.8 L2001.2 1003.9 L2000 1004.2 L1998.5 1004.4 L1997 1005 L1995.5 1005.2 L1994 1005.1 L1992.5 1004.9 L1992.1 1005.2 L1991 1005.4 L1990.9 1005.1 L1990.2 1005.2 L1990 1004.8 L1989.5 1004.4 L1988.4 1004.7 L1988 1005.3 L1986.5 1008.4 L1985.8 1009.8 L1985 1009.2 L1984 1009.3 L1983.5 1010.5 L1982 1011.2 L1981.6 1010.2 L1980.5 1009.4 L1979.8 1010.7 L1979 1009.8 L1977.5 1009.1 L1976 1008.5 L1975.9 1008.5 L1975.6 1008.1 L1974.5 1008.5 L1973.9 1009.3 L1973 1010.6 L1971.5 1011.3 L1971.3 1011.5 L1970 1010.8 L1968.5 1011.5 L1968.2 1011.7 L1967 1011.4 L1965.5 1010.3 L1965.4 1009.6 L1964 1010.7 L1962.5 1012.2 L1961 1012 L1959.5 1011.1 L1958.5 1011.5 L1958 1011.2 L1956.8 1011.1 L1956.5 1010.7 L1955 1010.4 L1954.3 1010.7 L1953.5 1010.2 L1952.6 1010.7 L1952 1007.3 L1951.1 1006.1 L1950.8 1005.4 L1950.5 1005.8 L1950 1006.9 L1949 1008.8 L1947.5 1012.5 L1947.3 1013.2 L1946 1014.3 L1945 1015.3 L1944.5 1015.5 L1944.4 1015.1 L1943 1016.2 L1941.5 1017.6 L1940 1019.1 L1938.5 1019.9 L1937 1020.7 L1935.5 1021.9 L1934 1023.2 L1932.5 1024.3 L1931 1025.3 L1930 1025.5 L1929.5 1026.5 L1928 1026.5 L1926.5 1026.6 L1925 1027.3 L1923.5 1027.9 L1922 1028.3 L1920.5 1028.5 L1920 1028.8 L1919.5 1029.3 L1919 1029.1 L1918.6 1029.3 L1917.5 1029.9 L1917 1029.8 L1916 1029.4 L1914.5 1029.8 L1913.9 1029.5 L1913 1029 L1911.5 1029.5 L1910 1030.3 L1909.1 1030.1 L1908.5 1029.7 L1907 1030 L1905.5 1030.4 L1904 1030.5 L1902.5 1030.3 L1901 1030.3 L1899.5 1030.9 L1899.1 1030.9 L1898 1031 L1897 1031 L1600 1033.6 L1500 1034.5 L1300 1036.3 L1155 1037.6 L1153 1037.9 L1150 1038.5 L1147 1039 L1144 1039.7 L1141 1040.4 L1138 1041.1 L1135 1041.8 L1133 1042.3 L1132 1042.3 L1129 1042.4 L1128 1042.4 L1126 1042.5 L1123 1042.6 L1120 1042.6 L1117 1042.7 L1114 1042.8 L1111 1042.9 L1108 1042.9 L1106 1043 L1105 1045.3 L1102 1045.4 L1099 1045.5 L1096 1045.6 L1093 1045.7 L1090 1045.8 L1087 1045.9 L1084 1046 L1081 1046.1 L1078 1046.2 L1075 1046.3 L1072 1046.4 L1069 1046.5 L1066 1046.6 L1065 1050.4 L1063 1050.4 L1060 1050.5 L1057 1050.5 L1054 1050.6 L1051 1050.6 L1048 1050.7 L1045 1050.7 L1042 1050.8 L1039 1050.8 L1036 1050.9 L1035 1050.9 L1033 1050.9 L1030 1051 L1028.5 1051 L1028 1058.6 L968 1059 L966 1057.4 L899 1057.4 L898 1061 L860 1061.8 L560 1063 L208 1063.4 Z" fill="url(#g8)"/>
<path d="M1128 1042.3 L1129 1042.1 L1132 1041.4 L1133 1041.1 L1135 1040.7 L1138 1040 L1141 1039.3 L1144 1038.6 L1147 1037.9 L1150 1037.2 L1153 1036.5 L1155 1036 L1300 1023.7 L1500 1006.7 L1600 998.2 L1897 973 L1898 972.8 L1899.1 971.6 L1899.5 971.7 L1901 970.9 L1902.5 969.9 L1904 969.5 L1905.5 969.2 L1907 969.2 L1908.5 969.8 L1909.1 967.8 L1910 968.1 L1911.5 965.5 L1913 962.4 L1913.9 962 L1914.5 961.2 L1916 961.8 L1917 962.6 L1917.5 962.7 L1918.6 960.1 L1919 955.5 L1919.5 946.8 L1920 947.3 L1920.5 946.9 L1922 946.1 L1923.5 944.8 L1925 942 L1926.5 940 L1928 940.4 L1929.5 939.6 L1930 940.5 L1931 940 L1932.5 939.9 L1934 940.1 L1935.5 940.3 L1937 939.8 L1938.5 940 L1940 940.6 L1941.5 939.9 L1943 939.9 L1944.4 941.1 L1944.5 940.6 L1945 939.2 L1946 938.3 L1947.3 936.1 L1947.5 935.6 L1949 934.4 L1950 933.7 L1950.5 932.6 L1950.8 931.7 L1951.1 930.6 L1952 930.8 L1952.6 930.4 L1953.5 930.8 L1954.3 931 L1955 931.2 L1956.5 932.7 L1956.8 932.5 L1958 932.9 L1958.5 932.4 L1959.5 932 L1961 931.3 L1962.5 931.3 L1964 931.4 L1965.4 930.6 L1965.5 930.3 L1967 926.7 L1968.2 923.9 L1968.5 923.7 L1970 922.4 L1971.3 921.1 L1971.5 921.9 L1973 921.2 L1973.9 919.7 L1974.5 918.6 L1975.6 917.7 L1975.9 918.2 L1976 918.8 L1977.5 921.1 L1979 922.8 L1979.8 922.5 L1980.5 922 L1981.6 924.8 L1982 922 L1983.5 913.2 L1984 910.5 L1985 908.4 L1985.8 907.6 L1986.5 906.3 L1988 904.8 L1988.4 905.2 L1989.5 903.5 L1990 902.7 L1990.2 901 L1990.9 896.6 L1991 896.2 L1992.1 889.5 L1992.5 888.8 L1994 888.9 L1995.5 890.1 L1997 891.5 L1998.5 892.5 L2000 892.8 L2001.2 892.4 L2001.5 892.2 L2002.6 893.4 L2003 890.7 L2004.5 882.9 L2005.4 878 L2006 878.2 L2007.5 876.9 L2009 875.7 L2009.7 874.6 L2010.5 873.5 L2012 872.1 L2013.5 870.7 L2014 870.1 L2014.6 868.6 L2015 867.6 L2016.5 863.1 L2017.6 860.5 L2018 859.2 L2018.2 859.6 L2019.5 857.3 L2021 853.3 L2022.5 849.7 L2024 846.9 L2024.2 847.3 L2024.7 846.3 L2025.5 846 L2026.7 844.3 L2027 843.3 L2028.5 843.1 L2029.3 843.3 L2030 842 L2031.5 840.7 L2033 840.5 L2034.5 840.5 L2035.3 840.2 L2036 839 L2036.9 838.2 L2037.5 837.5 L2039 835.9 L2040 835 L2040.5 835.8 L2042 834.9 L2043.5 832.8 L2043.8 832.5 L2045 832 L2046.4 830.8 L2046.5 830.3 L2047 830.1 L2048 829 L2049.5 827.1 L2051 825.2 L2051.9 824.3 L2052.3 823.5 L2052.4 824.2 L2052.5 823.2 L2054 823.2 L2055.5 822.5 L2055.9 820.7 L2057 818 L2058.5 817.7 L2059.4 819 L2059.9 820.6 L2060 820.2 L2060.8 819 L2061.5 818.4 L2063 818.9 L2064.5 819.7 L2064.6 819 L2066 818.3 L2066.4 818.5 L2067.5 816.3 L2067.8 814.2 L2069 812.1 L2069.4 812.7 L2070.5 810.1 L2071 808.5 L2072 807.5 L2073.5 807 L2075 805.2 L2076.5 803.2 L2076.6 803.5 L2077.4 803 L2077.9 805.1 L2078 805.6 L2078.2 807.3 L2079.5 811.4 L2081 816.7 L2082.1 814.5 L2082.5 813.8 L2084 813.7 L2085.5 814.6 L2086.1 815.4 L2086.4 814.6 L2087 813.8 L2087.4 813 L2087.7 812.6 L2088.1 811.6 L2088.5 811.5 L2089.3 810.2 L2090 808.9 L2090.7 806.7 L2090.9 805 L2091.5 803.4 L2092 803 L2092.4 801 L2092.5 800.8 L2093 798.2 L2093.8 794.7 L2094.5 794.8 L2094.9 794.4 L2095 793 L2095.6 791 L2096 790.3 L2097.5 787.9 L2098.4 787.4 L2098.8 781.8 L2099 780.1 L2099.3 776.5 L2100.5 774.2 L2102 770.8 L2103 769.1 L2103.5 768.6 L2103.6 767.4 L2105 761.7 L2105.2 762 L2106.5 755.8 L2106.6 754.5 L2108 753.9 L2109.5 752.6 L2111 751.9 L2111.5 752.1 L2112 750.9 L2112.5 750.2 L2113 750.8 L2113.1 751.1 L2113.9 749.6 L2114 750 L2114.7 750.6 L2115.5 750.2 L2116.2 749.6 L2117 748.6 L2118.5 747.2 L2119.4 747.2 L2120 743.8 L2120.3 741.7 L2120.5 739.2 L2121.3 737.1 L2121.5 736.8 L2122.2 737.5 L2123 737.2 L2124.3 737 L2124.5 736.4 L2126 736.5 L2127.4 737.5 L2127.5 737.7 L2129 737.3 L2129.5 738 L2129.8 737.4 L2130.5 737 L2131.6 735.8 L2132 735.4 L2132.6 735 L2132.9 735.1 L2133.2 734.4 L2133.4 730.1 L2133.5 726.8 L2133.6 722.3 L2134.1 706.9 L2135 700.7 L2135.7 696.5 L2136.5 691.1 L2136.8 688.7 L2138 685.6 L2139.5 683.1 L2139.6 682.8 L2140 681.8 L2141 679.2 L2141.4 677.7 L2142.4 675.2 L2142.5 674.4 L2142.6 674.7 L2144 672 L2145.5 667.5 L2146.9 663 L2147 662.6 L2147.2 662.3 L2148.5 657.3 L2149.6 653.9 L2150 652.3 L2150.2 651.6 L2151.5 649.2 L2153 646.9 L2154.5 644.5 L2154.7 644 L2155.1 643.8 L2156 641.4 L2156.2 641.6 L2157.5 639.6 L2157.7 639 L2157.9 639.3 L2159 641.3 L2159.3 642.4 L2160.5 644.4 L2160.8 644.9 L2161.5 645.8 L2162 646.3 L2162.4 646.6 L2163.5 647.8 L2163.8 647.5 L2165 648.3 L2166.1 649.3 L2166.3 650.5 L2166.5 650.3 L2168 651.5 L2169.5 654 L2169.7 655.7 L2169.8 655.4 L2170.1 656.2 L2171 657 L2172.5 657.4 L2172.8 656.7 L2173.9 656.5 L2174 657.4 L2174.3 656.6 L2175.5 653.5 L2177 650.9 L2177.7 650.1 L2178 650.2 L2178.5 650.6 L2180 650.2 L2180.4 649.2 L2181.5 647.7 L2181.9 647 L2183 647.1 L2184.5 647 L2186 646.1 L2186.2 647.5 L2187.2 644.6 L2187.5 645.4 L2187.9 645.5 L2189 644 L2189.4 643.5 L2190.5 642.4 L2191 642.3 L2192 641.4 L2192.6 640.2 L2193.5 639.3 L2193.9 639.2 L2195 639.7 L2195.5 640.1 L2196.5 639.4 L2197.7 638.3 L2198 637.4 L2199 637.4 L2199.5 637 L2200 636.2 L2201 634.1 L2201.5 634.1 L2201.8 633.8 L2202.5 633 L2204 631.6 L2205.5 630.7 L2206.3 630.1 L2207.5 629" fill="none" stroke="#1c3d78" stroke-width="4.4" stroke-linejoin="round"/>
<path d="M208 1063.4 L560 1063 L860 1061.8 L898 1061 L899 1057.4 L966 1057.4 L968 1059 L1028 1058.6 L1028.5 1051 L1030 1051 L1033 1050.9 L1035 1050.9 L1036 1050.9 L1039 1050.8 L1042 1050.8 L1045 1050.7 L1048 1050.7 L1051 1050.6 L1054 1050.6 L1057 1050.5 L1060 1050.5 L1063 1050.4 L1065 1050.4 L1066 1046.6 L1069 1046.5 L1072 1046.4 L1075 1046.3 L1078 1046.2 L1081 1046.1 L1084 1046 L1087 1045.9 L1090 1045.8 L1093 1045.7 L1096 1045.6 L1099 1045.5 L1102 1045.4 L1105 1045.3 L1106 1043 L1108 1042.9 L1111 1042.9 L1114 1042.8 L1117 1042.7 L1120 1042.6 L1123 1042.6 L1126 1042.5 L1128 1042.4 L1129 1042.4 L1132 1042.3 L1133 1042.3 L1135 1041.8 L1138 1041.1 L1141 1040.4 L1144 1039.7 L1147 1039 L1150 1038.5 L1153 1037.9 L1155 1037.6 L1300 1036.3 L1500 1034.5 L1600 1033.6 L1897 1031 L1898 1031 L1899.1 1030.9 L1899.5 1030.9 L1901 1030.3 L1902.5 1030.3 L1904 1030.5 L1905.5 1030.4 L1907 1030 L1908.5 1029.7 L1909.1 1030.1 L1910 1030.3 L1911.5 1029.5 L1913 1029 L1913.9 1029.5 L1914.5 1029.8 L1916 1029.4 L1917 1029.8 L1917.5 1029.9 L1918.6 1029.3 L1919 1029.1 L1919.5 1029.3 L1920 1028.8 L1920.5 1028.5 L1922 1028.3 L1923.5 1027.9 L1925 1027.3 L1926.5 1026.6 L1928 1026.5 L1929.5 1026.5 L1930 1025.5 L1931 1025.3 L1932.5 1024.3 L1934 1023.2 L1935.5 1021.9 L1937 1020.7 L1938.5 1019.9 L1940 1019.1 L1941.5 1017.6 L1943 1016.2 L1944.4 1015.1 L1944.5 1015.5 L1945 1015.3 L1946 1014.3 L1947.3 1013.2 L1947.5 1012.5 L1949 1008.8 L1950 1006.9 L1950.5 1005.8 L1950.8 1005.4 L1951.1 1006.1 L1952 1007.3 L1952.6 1010.7 L1953.5 1010.2 L1954.3 1010.7 L1955 1010.4 L1956.5 1010.7 L1956.8 1011.1 L1958 1011.2 L1958.5 1011.5 L1959.5 1011.1 L1961 1012 L1962.5 1012.2 L1964 1010.7 L1965.4 1009.6 L1965.5 1010.3 L1967 1011.4 L1968.2 1011.7 L1968.5 1011.5 L1970 1010.8 L1971.3 1011.5 L1971.5 1011.3 L1973 1010.6 L1973.9 1009.3 L1974.5 1008.5 L1975.6 1008.1 L1975.9 1008.5 L1976 1008.5 L1977.5 1009.1 L1979 1009.8 L1979.8 1010.7 L1980.5 1009.4 L1981.6 1010.2 L1982 1011.2 L1983.5 1010.5 L1984 1009.3 L1985 1009.2 L1985.8 1009.8 L1986.5 1008.4 L1988 1005.3 L1988.4 1004.7 L1989.5 1004.4 L1990 1004.8 L1990.2 1005.2 L1990.9 1005.1 L1991 1005.4 L1992.1 1005.2 L1992.5 1004.9 L1994 1005.1 L1995.5 1005.2 L1997 1005 L1998.5 1004.4 L2000 1004.2 L2001.2 1003.9 L2001.5 1003.8 L2002.6 1002.5 L2003 1002.8 L2004.5 1001.7 L2005.4 1000.5 L2006 1000.4 L2007.5 1000.4 L2009 1000.2 L2009.7 998.9 L2010.5 997.7 L2012 997.5 L2013.5 997.4 L2014 997 L2014.6 996.7 L2015 997.1 L2016.5 996.2 L2017.6 995.8 L2018 995.4 L2018.2 995 L2019.5 994.3 L2021 993.5 L2022.5 992.9 L2024 992.7 L2024.2 992.8 L2024.7 991.8 L2025.5 991 L2026.7 989.4 L2027 989.3 L2028.5 991 L2029.3 992.8 L2030 992.3 L2031.5 990.7 L2033 989.9 L2034.5 989.1 L2035.3 988.5 L2036 987.1 L2036.9 986.4 L2037.5 986.4 L2039 986.5 L2040 985.9 L2040.5 984.7 L2042 984 L2043.5 983.4 L2043.8 983.1 L2045 982.2 L2046.4 981.9 L2046.5 981.3 L2047 981.2 L2048 981.1 L2049.5 980.6 L2051 980.1 L2051.9 980.3 L2052.3 980.7 L2052.4 980.2 L2052.5 979.5 L2054 977.1 L2055.5 975 L2055.9 975.5 L2057 974 L2058.5 972.5 L2059.4 972 L2059.9 971.5 L2060 973 L2060.8 973 L2061.5 972.6 L2063 973.2 L2064.5 973.2 L2064.6 972.3 L2066 969.3 L2066.4 969.3 L2067.5 968 L2067.8 966.8 L2069 966.4 L2069.4 966.6 L2070.5 965.9 L2071 965.6 L2072 965.5 L2073.5 964.3 L2075 964.4 L2076.5 960.5 L2076.6 961.1 L2077.4 959.7 L2077.9 959.3 L2078 959.3 L2078.2 958.8 L2079.5 957.7 L2081 956.2 L2082.1 955.5 L2082.5 955.8 L2084 955.9 L2085.5 955.6 L2086.1 954.8 L2086.4 953.7 L2087 952.4 L2087.4 952.3 L2087.7 952.4 L2088.1 952.1 L2088.5 952.2 L2089.3 950.9 L2090 949.5 L2090.7 947.3 L2090.9 946.6 L2091.5 945.7 L2092 944.3 L2092.4 942.9 L2092.5 943.7 L2093 943.1 L2093.8 942.9 L2094.5 942.4 L2094.9 942.2 L2095 942.4 L2095.6 941.3 L2096 940.1 L2097.5 937.3 L2098.4 935.4 L2098.8 935 L2099 934.9 L2099.3 934.8 L2100.5 933.6 L2102 933 L2103 933.8 L2103.5 934.2 L2103.6 934 L2105 933.7 L2105.2 932.6 L2106.5 933 L2106.6 932.8 L2108 931.5 L2109.5 930.4 L2111 930 L2111.5 930.2 L2112 929.5 L2112.5 928.9 L2113 927.5 L2113.1 927.5 L2113.9 924.6 L2114 925.8 L2114.7 924 L2115.5 923 L2116.2 922.6 L2117 920.6 L2118.5 917.8 L2119.4 917.3 L2120 917.5 L2120.3 917.5 L2120.5 916.8 L2121.3 916.9 L2121.5 916.9 L2122.2 915.8 L2123 915.3 L2124.3 914.7 L2124.5 915.2 L2126 914.1 L2127.4 913.1 L2127.5 913.2 L2129 913 L2129.5 912.6 L2129.8 911.9 L2130.5 911.6 L2131.6 911.1 L2132 911.1 L2132.6 911 L2132.9 911.6 L2133.2 901.3 L2133.4 893 L2133.5 893.2 L2133.6 892.1 L2134.1 890.3 L2135 887.2 L2135.7 884.4 L2136.5 883.2 L2136.8 882.8 L2138 879.3 L2139.5 875.2 L2139.6 874.8 L2140 874 L2141 873.5 L2141.4 874.8 L2142.4 873.9 L2142.5 874.6 L2142.6 872.5 L2144 866.8 L2145.5 862.9 L2146.9 859.5 L2147 859.5 L2147.2 858.6 L2148.5 855.1 L2149.6 852.1 L2150 851 L2150.2 850.6 L2151.5 849 L2153 848 L2154.5 847 L2154.7 846.4 L2155.1 845.6 L2156 844.9 L2156.2 845 L2157.5 844.6 L2157.7 844.3 L2157.9 845.1 L2159 846.8 L2159.3 847.1 L2160.5 848.7 L2160.8 848.8 L2161.5 851 L2162 851 L2162.4 850.5 L2163.5 849.6 L2163.8 849 L2165 848.4 L2166.1 848.2 L2166.3 848.1 L2166.5 849 L2168 850.1 L2169.5 849.9 L2169.7 849.8 L2169.8 850.9 L2170.1 852 L2171 852.6 L2172.5 854 L2172.8 854 L2173.9 856.7 L2174 856.1 L2174.3 856.3 L2175.5 854.5 L2177 852.6 L2177.7 850 L2178 850.3 L2178.5 850.5 L2180 850.3 L2180.4 849.2 L2181.5 850 L2181.9 849.5 L2183 848 L2184.5 846.3 L2186 844.1 L2186.2 843.2 L2187.2 842.4 L2187.5 842.9 L2187.9 842.8 L2189 841.8 L2189.4 841.5 L2190.5 840.9 L2191 840.5 L2192 839.5 L2192.6 838.6 L2193.5 836.6 L2193.9 834.8 L2195 834.8 L2195.5 833.8 L2196.5 833.5 L2197.7 833.4 L2198 833.2 L2199 832.3 L2199.5 831.8 L2200 831.2 L2201 831.1 L2201.5 831 L2201.8 830.4 L2202.5 829.9 L2204 829.6 L2205.5 828.1 L2206.3 826.5 L2207.5 826.2 L2207.5 907.2 L2206.3 908.2 L2205.5 908.2 L2204 909.5 L2202.5 910.5 L2201.8 910.9 L2201.5 911.5 L2201 912.3 L2200 913.2 L2199.5 913 L2199 912.4 L2198 911 L2197.7 910.3 L2196.5 909.1 L2195.5 907.2 L2195 908.1 L2193.9 908 L2193.5 908 L2192.6 909.1 L2192 910.1 L2191 910.8 L2190.5 911.1 L2189.4 911.7 L2189 911.6 L2187.9 913.2 L2187.5 913.6 L2187.2 915.1 L2186.2 915.8 L2186 914.7 L2184.5 916.4 L2183 918.8 L2181.9 919.8 L2181.5 919.8 L2180.4 920.8 L2180 920.8 L2178.5 922.1 L2178 922.5 L2177.7 922 L2177 922.4 L2175.5 923.5 L2174.3 924.5 L2174 924 L2173.9 924.6 L2172.8 923.5 L2172.5 923.2 L2171 920.6 L2170.1 918.5 L2169.8 919.3 L2169.7 918.6 L2169.5 918.1 L2168 917.5 L2166.5 917.3 L2166.3 917.7 L2166.1 917.9 L2165 917.6 L2163.8 916.2 L2163.5 915.9 L2162.4 914.5 L2162 913.6 L2161.5 913.3 L2160.8 912.6 L2160.5 912 L2159.3 911.7 L2159 911.6 L2157.9 911.4 L2157.7 911.2 L2157.5 911.4 L2156.2 911.5 L2156 911.9 L2155.1 912.1 L2154.7 911.7 L2154.5 912.5 L2153 916.3 L2151.5 918.9 L2150.2 921.5 L2150 922.4 L2149.6 923 L2148.5 925.1 L2147.2 928.3 L2147 927.8 L2146.9 927.4 L2145.5 928.1 L2144 929.8 L2142.6 930.2 L2142.5 929 L2142.4 928.4 L2141.4 928.9 L2141 929.4 L2140 929.7 L2139.6 929.8 L2139.5 929.9 L2138 931.9 L2136.8 933.7 L2136.5 934.2 L2135.7 935.1 L2135 935.7 L2134.1 937.3 L2133.6 938.9 L2133.5 940.7 L2133.4 942.3 L2133.2 947.2 L2132.9 953.9 L2132.6 958.8 L2132 959 L2131.6 959 L2130.5 958.9 L2129.8 958.5 L2129.5 958.5 L2129 958.8 L2127.5 959.1 L2127.4 958.8 L2126 958.3 L2124.5 959.8 L2124.3 960.5 L2123 962 L2122.2 962.9 L2121.5 962.7 L2121.3 962.5 L2120.5 963 L2120.3 963 L2120 962.6 L2119.4 962.7 L2118.5 964 L2117 966.2 L2116.2 967.4 L2115.5 967.7 L2114.7 968.4 L2114 969.6 L2113.9 969.5 L2113.1 972.3 L2113 972.3 L2112.5 972 L2112 972.3 L2111.5 972.5 L2111 972.6 L2109.5 973.4 L2108 974 L2106.6 973.8 L2106.5 973.7 L2105.2 974.2 L2105 974.2 L2103.6 974.3 L2103.5 974.5 L2103 974.5 L2102 974.8 L2100.5 975.1 L2099.3 975.7 L2099 975.7 L2098.8 976.3 L2098.4 976.9 L2097.5 979.4 L2096 982 L2095.6 983.5 L2095 984 L2094.9 984.7 L2094.5 985.8 L2093.8 986.9 L2093 988.2 L2092.5 989.3 L2092.4 989.5 L2092 989.8 L2091.5 990.3 L2090.9 991.4 L2090.7 990.7 L2090 991 L2089.3 991.1 L2088.5 990.8 L2088.1 990.9 L2087.7 990.6 L2087.4 990.8 L2087 991.1 L2086.4 992.1 L2086.1 992.3 L2085.5 992.1 L2084 993.4 L2082.5 995.5 L2082.1 995.8 L2081 996.1 L2079.5 997.3 L2078.2 998.5 L2078 998.4 L2077.9 998.4 L2077.4 998.7 L2076.6 999.4 L2076.5 999.2 L2075 1000.6 L2073.5 1000.9 L2072 1001.6 L2071 1002.3 L2070.5 1002.4 L2069.4 1003 L2069 1003.5 L2067.8 1003.7 L2067.5 1003.1 L2066.4 1003.5 L2066 1004.4 L2064.6 1005.9 L2064.5 1005.9 L2063 1006.5 L2061.5 1007.3 L2060.8 1008.1 L2060 1008.8 L2059.9 1008.9 L2059.4 1009.7 L2058.5 1010.5 L2057 1011.8 L2055.9 1012.6 L2055.5 1012.3 L2054 1013.1 L2052.5 1014.2 L2052.4 1014.6 L2052.3 1014.1 L2051.9 1013.5 L2051 1014.4 L2049.5 1015.2 L2048 1015.5 L2047 1015.9 L2046.5 1016.3 L2046.4 1016.4 L2045 1017.3 L2043.8 1017.5 L2043.5 1018.3 L2042 1018.4 L2040.5 1018.4 L2040 1018.4 L2039 1018.6 L2037.5 1018.9 L2036.9 1019.6 L2036 1020.9 L2035.3 1021.4 L2034.5 1021.4 L2033 1021.9 L2031.5 1022.1 L2030 1022 L2029.3 1021.8 L2028.5 1022.4 L2027 1023.6 L2026.7 1023.5 L2025.5 1025.3 L2024.7 1025.8 L2024.2 1026.1 L2024 1026.7 L2022.5 1028.6 L2021 1029.6 L2019.5 1029.1 L2018.2 1028.7 L2018 1029 L2017.6 1029 L2016.5 1028.9 L2015 1029.8 L2014.6 1030.3 L2014 1030.3 L2013.5 1029.8 L2012 1030.2 L2010.5 1030.4 L2009.7 1030.5 L2009 1031 L2007.5 1031.7 L2006 1032.1 L2005.4 1032 L2004.5 1032.2 L2003 1032.9 L2002.6 1032.3 L2001.5 1031.7 L2001.2 1032.5 L2000 1032.6 L1998.5 1032.1 L1997 1032.3 L1995.5 1032.4 L1994 1032.2 L1992.5 1031.3 L1992.1 1030.9 L1991 1031.4 L1990.9 1032 L1990.2 1032.3 L1990 1032 L1989.5 1032.6 L1988.4 1034 L1988 1034.6 L1986.5 1037 L1985.8 1037.5 L1985 1037.6 L1984 1036.9 L1983.5 1037.1 L1982 1038 L1981.6 1037.4 L1980.5 1036 L1979.8 1035.6 L1979 1035.3 L1977.5 1035 L1976 1034.9 L1975.9 1035.3 L1975.6 1035.4 L1974.5 1036.2 L1973.9 1036.3 L1973 1036 L1971.5 1036.2 L1971.3 1037.5 L1970 1037.6 L1968.5 1037.5 L1968.2 1037.1 L1967 1036.2 L1965.5 1036.1 L1965.4 1037 L1964 1037.4 L1962.5 1037.3 L1961 1036.6 L1959.5 1035.7 L1958.5 1035.5 L1958 1036.1 L1956.8 1036.9 L1956.5 1037.2 L1955 1036.3 L1954.3 1036 L1953.5 1033.9 L1952.6 1032.3 L1952 1031.6 L1951.1 1030.7 L1950.8 1029.8 L1950.5 1030.7 L1950 1031.5 L1949 1034.6 L1947.5 1038.9 L1947.3 1037.9 L1946 1039.9 L1945 1044 L1944.5 1044.4 L1944.4 1044.3 L1943 1044.6 L1941.5 1045.3 L1940 1046.1 L1938.5 1047 L1937 1047.7 L1935.5 1048 L1934 1048.2 L1932.5 1048.5 L1931 1048.7 L1930 1048.5 L1929.5 1048.7 L1928 1049.9 L1926.5 1051.1 L1925 1052.3 L1923.5 1052.7 L1922 1052.7 L1920.5 1052.7 L1920 1053.4 L1919.5 1053.2 L1919 1053.5 L1918.6 1053.1 L1917.5 1053.3 L1917 1053.7 L1916 1053.6 L1914.5 1053.7 L1913.9 1053.7 L1913 1053.6 L1911.5 1053.8 L1910 1054.3 L1909.1 1054.4 L1908.5 1054.1 L1907 1053.7 L1905.5 1054.2 L1904 1055.1 L1902.5 1054.9 L1901 1053.7 L1899.5 1053.8 L1899.1 1053.9 L1898 1054.1 L1897 1054 L1600 1054.7 L1500 1055 L1300 1055.4 L1155 1055.8 L1153 1055.8 L1150 1055.8 L1147 1055.8 L1144 1055.8 L1141 1055.8 L1138 1055.8 L1135 1055.8 L1133 1055.8 L1132 1055.8 L1129 1055.8 L1128 1055.8 L1126 1055.8 L1123 1055.8 L1120 1055.8 L1117 1055.8 L1114 1055.8 L1111 1055.8 L1108 1055.8 L1106 1055.8 L1105 1057.8 L1102 1057.8 L1099 1057.9 L1096 1057.9 L1093 1057.9 L1090 1058 L1087 1058 L1084 1058 L1081 1058 L1078 1058.1 L1075 1058.1 L1072 1058.1 L1069 1058.2 L1066 1058.2 L1065 1058.2 L1063 1058.2 L1060 1058.2 L1057 1058.3 L1054 1058.3 L1051 1058.3 L1048 1058.4 L1045 1058.4 L1042 1058.4 L1039 1058.5 L1036 1058.5 L1035 1058.5 L1033 1058.5 L1030 1058.5 L1028.5 1058.5 L1028 1058.6 L968 1059 L966 1057.4 L899 1057.4 L898 1061 L860 1061.8 L560 1063 L208 1063.4 Z" fill="url(#g7)"/>
<path d="M1028.5 1051 L1030 1051 L1033 1050.9 L1035 1050.9 L1036 1050.9 L1039 1050.8 L1042 1050.8 L1045 1050.7 L1048 1050.7 L1051 1050.6 L1054 1050.6 L1057 1050.5 L1060 1050.5 L1063 1050.4 L1065 1050.4 L1066 1046.6 L1069 1046.5 L1072 1046.4 L1075 1046.3 L1078 1046.2 L1081 1046.1 L1084 1046 L1087 1045.9 L1090 1045.8 L1093 1045.7 L1096 1045.6 L1099 1045.5 L1102 1045.4 L1105 1045.3 L1106 1043 L1108 1042.9 L1111 1042.9 L1114 1042.8 L1117 1042.7 L1120 1042.6 L1123 1042.6 L1126 1042.5 L1128 1042.4 L1129 1042.4 L1132 1042.3 L1133 1042.3 L1135 1041.8 L1138 1041.1 L1141 1040.4 L1144 1039.7 L1147 1039 L1150 1038.5 L1153 1037.9 L1155 1037.6 L1300 1036.3 L1500 1034.5 L1600 1033.6 L1897 1031 L1898 1031 L1899.1 1030.9 L1899.5 1030.9 L1901 1030.3 L1902.5 1030.3 L1904 1030.5 L1905.5 1030.4 L1907 1030 L1908.5 1029.7 L1909.1 1030.1 L1910 1030.3 L1911.5 1029.5 L1913 1029 L1913.9 1029.5 L1914.5 1029.8 L1916 1029.4 L1917 1029.8 L1917.5 1029.9 L1918.6 1029.3 L1919 1029.1 L1919.5 1029.3 L1920 1028.8 L1920.5 1028.5 L1922 1028.3 L1923.5 1027.9 L1925 1027.3 L1926.5 1026.6 L1928 1026.5 L1929.5 1026.5 L1930 1025.5 L1931 1025.3 L1932.5 1024.3 L1934 1023.2 L1935.5 1021.9 L1937 1020.7 L1938.5 1019.9 L1940 1019.1 L1941.5 1017.6 L1943 1016.2 L1944.4 1015.1 L1944.5 1015.5 L1945 1015.3 L1946 1014.3 L1947.3 1013.2 L1947.5 1012.5 L1949 1008.8 L1950 1006.9 L1950.5 1005.8 L1950.8 1005.4 L1951.1 1006.1 L1952 1007.3 L1952.6 1010.7 L1953.5 1010.2 L1954.3 1010.7 L1955 1010.4 L1956.5 1010.7 L1956.8 1011.1 L1958 1011.2 L1958.5 1011.5 L1959.5 1011.1 L1961 1012 L1962.5 1012.2 L1964 1010.7 L1965.4 1009.6 L1965.5 1010.3 L1967 1011.4 L1968.2 1011.7 L1968.5 1011.5 L1970 1010.8 L1971.3 1011.5 L1971.5 1011.3 L1973 1010.6 L1973.9 1009.3 L1974.5 1008.5 L1975.6 1008.1 L1975.9 1008.5 L1976 1008.5 L1977.5 1009.1 L1979 1009.8 L1979.8 1010.7 L1980.5 1009.4 L1981.6 1010.2 L1982 1011.2 L1983.5 1010.5 L1984 1009.3 L1985 1009.2 L1985.8 1009.8 L1986.5 1008.4 L1988 1005.3 L1988.4 1004.7 L1989.5 1004.4 L1990 1004.8 L1990.2 1005.2 L1990.9 1005.1 L1991 1005.4 L1992.1 1005.2 L1992.5 1004.9 L1994 1005.1 L1995.5 1005.2 L1997 1005 L1998.5 1004.4 L2000 1004.2 L2001.2 1003.9 L2001.5 1003.8 L2002.6 1002.5 L2003 1002.8 L2004.5 1001.7 L2005.4 1000.5 L2006 1000.4 L2007.5 1000.4 L2009 1000.2 L2009.7 998.9 L2010.5 997.7 L2012 997.5 L2013.5 997.4 L2014 997 L2014.6 996.7 L2015 997.1 L2016.5 996.2 L2017.6 995.8 L2018 995.4 L2018.2 995 L2019.5 994.3 L2021 993.5 L2022.5 992.9 L2024 992.7 L2024.2 992.8 L2024.7 991.8 L2025.5 991 L2026.7 989.4 L2027 989.3 L2028.5 991 L2029.3 992.8 L2030 992.3 L2031.5 990.7 L2033 989.9 L2034.5 989.1 L2035.3 988.5 L2036 987.1 L2036.9 986.4 L2037.5 986.4 L2039 986.5 L2040 985.9 L2040.5 984.7 L2042 984 L2043.5 983.4 L2043.8 983.1 L2045 982.2 L2046.4 981.9 L2046.5 981.3 L2047 981.2 L2048 981.1 L2049.5 980.6 L2051 980.1 L2051.9 980.3 L2052.3 980.7 L2052.4 980.2 L2052.5 979.5 L2054 977.1 L2055.5 975 L2055.9 975.5 L2057 974 L2058.5 972.5 L2059.4 972 L2059.9 971.5 L2060 973 L2060.8 973 L2061.5 972.6 L2063 973.2 L2064.5 973.2 L2064.6 972.3 L2066 969.3 L2066.4 969.3 L2067.5 968 L2067.8 966.8 L2069 966.4 L2069.4 966.6 L2070.5 965.9 L2071 965.6 L2072 965.5 L2073.5 964.3 L2075 964.4 L2076.5 960.5 L2076.6 961.1 L2077.4 959.7 L2077.9 959.3 L2078 959.3 L2078.2 958.8 L2079.5 957.7 L2081 956.2 L2082.1 955.5 L2082.5 955.8 L2084 955.9 L2085.5 955.6 L2086.1 954.8 L2086.4 953.7 L2087 952.4 L2087.4 952.3 L2087.7 952.4 L2088.1 952.1 L2088.5 952.2 L2089.3 950.9 L2090 949.5 L2090.7 947.3 L2090.9 946.6 L2091.5 945.7 L2092 944.3 L2092.4 942.9 L2092.5 943.7 L2093 943.1 L2093.8 942.9 L2094.5 942.4 L2094.9 942.2 L2095 942.4 L2095.6 941.3 L2096 940.1 L2097.5 937.3 L2098.4 935.4 L2098.8 935 L2099 934.9 L2099.3 934.8 L2100.5 933.6 L2102 933 L2103 933.8 L2103.5 934.2 L2103.6 934 L2105 933.7 L2105.2 932.6 L2106.5 933 L2106.6 932.8 L2108 931.5 L2109.5 930.4 L2111 930 L2111.5 930.2 L2112 929.5 L2112.5 928.9 L2113 927.5 L2113.1 927.5 L2113.9 924.6 L2114 925.8 L2114.7 924 L2115.5 923 L2116.2 922.6 L2117 920.6 L2118.5 917.8 L2119.4 917.3 L2120 917.5 L2120.3 917.5 L2120.5 916.8 L2121.3 916.9 L2121.5 916.9 L2122.2 915.8 L2123 915.3 L2124.3 914.7 L2124.5 915.2 L2126 914.1 L2127.4 913.1 L2127.5 913.2 L2129 913 L2129.5 912.6 L2129.8 911.9 L2130.5 911.6 L2131.6 911.1 L2132 911.1 L2132.6 911 L2132.9 911.6 L2133.2 901.3 L2133.4 893 L2133.5 893.2 L2133.6 892.1 L2134.1 890.3 L2135 887.2 L2135.7 884.4 L2136.5 883.2 L2136.8 882.8 L2138 879.3 L2139.5 875.2 L2139.6 874.8 L2140 874 L2141 873.5 L2141.4 874.8 L2142.4 873.9 L2142.5 874.6 L2142.6 872.5 L2144 866.8 L2145.5 862.9 L2146.9 859.5 L2147 859.5 L2147.2 858.6 L2148.5 855.1 L2149.6 852.1 L2150 851 L2150.2 850.6 L2151.5 849 L2153 848 L2154.5 847 L2154.7 846.4 L2155.1 845.6 L2156 844.9 L2156.2 845 L2157.5 844.6 L2157.7 844.3 L2157.9 845.1 L2159 846.8 L2159.3 847.1 L2160.5 848.7 L2160.8 848.8 L2161.5 851 L2162 851 L2162.4 850.5 L2163.5 849.6 L2163.8 849 L2165 848.4 L2166.1 848.2 L2166.3 848.1 L2166.5 849 L2168 850.1 L2169.5 849.9 L2169.7 849.8 L2169.8 850.9 L2170.1 852 L2171 852.6 L2172.5 854 L2172.8 854 L2173.9 856.7 L2174 856.1 L2174.3 856.3 L2175.5 854.5 L2177 852.6 L2177.7 850 L2178 850.3 L2178.5 850.5 L2180 850.3 L2180.4 849.2 L2181.5 850 L2181.9 849.5 L2183 848 L2184.5 846.3 L2186 844.1 L2186.2 843.2 L2187.2 842.4 L2187.5 842.9 L2187.9 842.8 L2189 841.8 L2189.4 841.5 L2190.5 840.9 L2191 840.5 L2192 839.5 L2192.6 838.6 L2193.5 836.6 L2193.9 834.8 L2195 834.8 L2195.5 833.8 L2196.5 833.5 L2197.7 833.4 L2198 833.2 L2199 832.3 L2199.5 831.8 L2200 831.2 L2201 831.1 L2201.5 831 L2201.8 830.4 L2202.5 829.9 L2204 829.6 L2205.5 828.1 L2206.3 826.5 L2207.5 826.2" fill="none" stroke="#d4a640" stroke-width="2.6" stroke-linejoin="round"/>
<path d="M208 1063.4 L560 1063 L860 1061.8 L898 1061 L899 1057.4 L966 1057.4 L968 1059 L1028 1058.6 L1028.5 1058.5 L1030 1058.5 L1033 1058.5 L1035 1058.5 L1036 1058.5 L1039 1058.5 L1042 1058.4 L1045 1058.4 L1048 1058.4 L1051 1058.3 L1054 1058.3 L1057 1058.3 L1060 1058.2 L1063 1058.2 L1065 1058.2 L1066 1058.2 L1069 1058.2 L1072 1058.1 L1075 1058.1 L1078 1058.1 L1081 1058 L1084 1058 L1087 1058 L1090 1058 L1093 1057.9 L1096 1057.9 L1099 1057.9 L1102 1057.8 L1105 1057.8 L1106 1055.8 L1108 1055.8 L1111 1055.8 L1114 1055.8 L1117 1055.8 L1120 1055.8 L1123 1055.8 L1126 1055.8 L1128 1055.8 L1129 1055.8 L1132 1055.8 L1133 1055.8 L1135 1055.8 L1138 1055.8 L1141 1055.8 L1144 1055.8 L1147 1055.8 L1150 1055.8 L1153 1055.8 L1155 1055.8 L1300 1055.4 L1500 1055 L1600 1054.7 L1897 1054 L1898 1054.1 L1899.1 1053.9 L1899.5 1053.8 L1901 1053.7 L1902.5 1054.9 L1904 1055.1 L1905.5 1054.2 L1907 1053.7 L1908.5 1054.1 L1909.1 1054.4 L1910 1054.3 L1911.5 1053.8 L1913 1053.6 L1913.9 1053.7 L1914.5 1053.7 L1916 1053.6 L1917 1053.7 L1917.5 1053.3 L1918.6 1053.1 L1919 1053.5 L1919.5 1053.2 L1920 1053.4 L1920.5 1052.7 L1922 1052.7 L1923.5 1052.7 L1925 1052.3 L1926.5 1051.1 L1928 1049.9 L1929.5 1048.7 L1930 1048.5 L1931 1048.7 L1932.5 1048.5 L1934 1048.2 L1935.5 1048 L1937 1047.7 L1938.5 1047 L1940 1046.1 L1941.5 1045.3 L1943 1044.6 L1944.4 1044.3 L1944.5 1044.4 L1945 1044 L1946 1039.9 L1947.3 1037.9 L1947.5 1038.9 L1949 1034.6 L1950 1031.5 L1950.5 1030.7 L1950.8 1029.8 L1951.1 1030.7 L1952 1031.6 L1952.6 1032.3 L1953.5 1033.9 L1954.3 1036 L1955 1036.3 L1956.5 1037.2 L1956.8 1036.9 L1958 1036.1 L1958.5 1035.5 L1959.5 1035.7 L1961 1036.6 L1962.5 1037.3 L1964 1037.4 L1965.4 1037 L1965.5 1036.1 L1967 1036.2 L1968.2 1037.1 L1968.5 1037.5 L1970 1037.6 L1971.3 1037.5 L1971.5 1036.2 L1973 1036 L1973.9 1036.3 L1974.5 1036.2 L1975.6 1035.4 L1975.9 1035.3 L1976 1034.9 L1977.5 1035 L1979 1035.3 L1979.8 1035.6 L1980.5 1036 L1981.6 1037.4 L1982 1038 L1983.5 1037.1 L1984 1036.9 L1985 1037.6 L1985.8 1037.5 L1986.5 1037 L1988 1034.6 L1988.4 1034 L1989.5 1032.6 L1990 1032 L1990.2 1032.3 L1990.9 1032 L1991 1031.4 L1992.1 1030.9 L1992.5 1031.3 L1994 1032.2 L1995.5 1032.4 L1997 1032.3 L1998.5 1032.1 L2000 1032.6 L2001.2 1032.5 L2001.5 1031.7 L2002.6 1032.3 L2003 1032.9 L2004.5 1032.2 L2005.4 1032 L2006 1032.1 L2007.5 1031.7 L2009 1031 L2009.7 1030.5 L2010.5 1030.4 L2012 1030.2 L2013.5 1029.8 L2014 1030.3 L2014.6 1030.3 L2015 1029.8 L2016.5 1028.9 L2017.6 1029 L2018 1029 L2018.2 1028.7 L2019.5 1029.1 L2021 1029.6 L2022.5 1028.6 L2024 1026.7 L2024.2 1026.1 L2024.7 1025.8 L2025.5 1025.3 L2026.7 1023.5 L2027 1023.6 L2028.5 1022.4 L2029.3 1021.8 L2030 1022 L2031.5 1022.1 L2033 1021.9 L2034.5 1021.4 L2035.3 1021.4 L2036 1020.9 L2036.9 1019.6 L2037.5 1018.9 L2039 1018.6 L2040 1018.4 L2040.5 1018.4 L2042 1018.4 L2043.5 1018.3 L2043.8 1017.5 L2045 1017.3 L2046.4 1016.4 L2046.5 1016.3 L2047 1015.9 L2048 1015.5 L2049.5 1015.2 L2051 1014.4 L2051.9 1013.5 L2052.3 1014.1 L2052.4 1014.6 L2052.5 1014.2 L2054 1013.1 L2055.5 1012.3 L2055.9 1012.6 L2057 1011.8 L2058.5 1010.5 L2059.4 1009.7 L2059.9 1008.9 L2060 1008.8 L2060.8 1008.1 L2061.5 1007.3 L2063 1006.5 L2064.5 1005.9 L2064.6 1005.9 L2066 1004.4 L2066.4 1003.5 L2067.5 1003.1 L2067.8 1003.7 L2069 1003.5 L2069.4 1003 L2070.5 1002.4 L2071 1002.3 L2072 1001.6 L2073.5 1000.9 L2075 1000.6 L2076.5 999.2 L2076.6 999.4 L2077.4 998.7 L2077.9 998.4 L2078 998.4 L2078.2 998.5 L2079.5 997.3 L2081 996.1 L2082.1 995.8 L2082.5 995.5 L2084 993.4 L2085.5 992.1 L2086.1 992.3 L2086.4 992.1 L2087 991.1 L2087.4 990.8 L2087.7 990.6 L2088.1 990.9 L2088.5 990.8 L2089.3 991.1 L2090 991 L2090.7 990.7 L2090.9 991.4 L2091.5 990.3 L2092 989.8 L2092.4 989.5 L2092.5 989.3 L2093 988.2 L2093.8 986.9 L2094.5 985.8 L2094.9 984.7 L2095 984 L2095.6 983.5 L2096 982 L2097.5 979.4 L2098.4 976.9 L2098.8 976.3 L2099 975.7 L2099.3 975.7 L2100.5 975.1 L2102 974.8 L2103 974.5 L2103.5 974.5 L2103.6 974.3 L2105 974.2 L2105.2 974.2 L2106.5 973.7 L2106.6 973.8 L2108 974 L2109.5 973.4 L2111 972.6 L2111.5 972.5 L2112 972.3 L2112.5 972 L2113 972.3 L2113.1 972.3 L2113.9 969.5 L2114 969.6 L2114.7 968.4 L2115.5 967.7 L2116.2 967.4 L2117 966.2 L2118.5 964 L2119.4 962.7 L2120 962.6 L2120.3 963 L2120.5 963 L2121.3 962.5 L2121.5 962.7 L2122.2 962.9 L2123 962 L2124.3 960.5 L2124.5 959.8 L2126 958.3 L2127.4 958.8 L2127.5 959.1 L2129 958.8 L2129.5 958.5 L2129.8 958.5 L2130.5 958.9 L2131.6 959 L2132 959 L2132.6 958.8 L2132.9 953.9 L2133.2 947.2 L2133.4 942.3 L2133.5 940.7 L2133.6 938.9 L2134.1 937.3 L2135 935.7 L2135.7 935.1 L2136.5 934.2 L2136.8 933.7 L2138 931.9 L2139.5 929.9 L2139.6 929.8 L2140 929.7 L2141 929.4 L2141.4 928.9 L2142.4 928.4 L2142.5 929 L2142.6 930.2 L2144 929.8 L2145.5 928.1 L2146.9 927.4 L2147 927.8 L2147.2 928.3 L2148.5 925.1 L2149.6 923 L2150 922.4 L2150.2 921.5 L2151.5 918.9 L2153 916.3 L2154.5 912.5 L2154.7 911.7 L2155.1 912.1 L2156 911.9 L2156.2 911.5 L2157.5 911.4 L2157.7 911.2 L2157.9 911.4 L2159 911.6 L2159.3 911.7 L2160.5 912 L2160.8 912.6 L2161.5 913.3 L2162 913.6 L2162.4 914.5 L2163.5 915.9 L2163.8 916.2 L2165 917.6 L2166.1 917.9 L2166.3 917.7 L2166.5 917.3 L2168 917.5 L2169.5 918.1 L2169.7 918.6 L2169.8 919.3 L2170.1 918.5 L2171 920.6 L2172.5 923.2 L2172.8 923.5 L2173.9 924.6 L2174 924 L2174.3 924.5 L2175.5 923.5 L2177 922.4 L2177.7 922 L2178 922.5 L2178.5 922.1 L2180 920.8 L2180.4 920.8 L2181.5 919.8 L2181.9 919.8 L2183 918.8 L2184.5 916.4 L2186 914.7 L2186.2 915.8 L2187.2 915.1 L2187.5 913.6 L2187.9 913.2 L2189 911.6 L2189.4 911.7 L2190.5 911.1 L2191 910.8 L2192 910.1 L2192.6 909.1 L2193.5 908 L2193.9 908 L2195 908.1 L2195.5 907.2 L2196.5 909.1 L2197.7 910.3 L2198 911 L2199 912.4 L2199.5 913 L2200 913.2 L2201 912.3 L2201.5 911.5 L2201.8 910.9 L2202.5 910.5 L2204 909.5 L2205.5 908.2 L2206.3 908.2 L2207.5 907.2 L2207.5 963.8 L2206.3 966.2 L2205.5 966.8 L2204 967.1 L2202.5 968.3 L2201.8 968.5 L2201.5 968.1 L2201 969.5 L2200 970.6 L2199.5 969.3 L2199 968.1 L2198 967.1 L2197.7 966.9 L2196.5 964.9 L2195.5 963 L2195 964.1 L2193.9 964.3 L2193.5 964 L2192.6 963.7 L2192 963.7 L2191 964.1 L2190.5 964.2 L2189.4 963.8 L2189 964.6 L2187.9 965.8 L2187.5 966.3 L2187.2 966.5 L2186.2 967.4 L2186 967.6 L2184.5 969.9 L2183 971.8 L2181.9 972.1 L2181.5 973 L2180.4 974.2 L2180 975 L2178.5 976.9 L2178 976.7 L2177.7 976.5 L2177 978 L2175.5 980.7 L2174.3 982.7 L2174 981.4 L2173.9 982 L2172.8 981.7 L2172.5 981.6 L2171 980.1 L2170.1 979.3 L2169.8 978.1 L2169.7 978.3 L2169.5 978.5 L2168 978.5 L2166.5 977.9 L2166.3 977.8 L2166.1 977.6 L2165 976.8 L2163.8 976.2 L2163.5 976 L2162.4 975.8 L2162 975.9 L2161.5 975.6 L2160.8 975.1 L2160.5 974.3 L2159.3 973.2 L2159 972.7 L2157.9 971.2 L2157.7 971 L2157.5 970.5 L2156.2 969.1 L2156 969.8 L2155.1 971.4 L2154.7 971.9 L2154.5 971.5 L2153 973.2 L2151.5 974.9 L2150.2 976.9 L2150 978 L2149.6 978.2 L2148.5 978.7 L2147.2 980.4 L2147 980.2 L2146.9 980.4 L2145.5 979.8 L2144 979.7 L2142.6 979.7 L2142.5 979.1 L2142.4 978.3 L2141.4 978.3 L2141 979 L2140 978.8 L2139.6 978.9 L2139.5 978.7 L2138 979.7 L2136.8 981.2 L2136.5 981.4 L2135.7 981.6 L2135 982.6 L2134.1 984.5 L2133.6 984.2 L2133.5 985 L2133.4 985.9 L2133.2 988 L2132.9 990.7 L2132.6 993.1 L2132 999.3 L2131.6 1003 L2130.5 1004.4 L2129.8 1003.4 L2129.5 1003 L2129 1003.2 L2127.5 1003.4 L2127.4 1003.7 L2126 1004.7 L2124.5 1005.2 L2124.3 1005 L2123 1005.2 L2122.2 1005.4 L2121.5 1005.5 L2121.3 1006 L2120.5 1005.6 L2120.3 1006 L2120 1006.2 L2119.4 1006.5 L2118.5 1007.4 L2117 1009.4 L2116.2 1010.4 L2115.5 1011.1 L2114.7 1012.2 L2114 1013.6 L2113.9 1013.5 L2113.1 1013.7 L2113 1013.9 L2112.5 1013.9 L2112 1014.1 L2111.5 1014 L2111 1014.1 L2109.5 1013.9 L2108 1013.9 L2106.6 1014.3 L2106.5 1015.1 L2105.2 1015.1 L2105 1014.9 L2103.6 1014.8 L2103.5 1015 L2103 1015.7 L2102 1016.1 L2100.5 1016.3 L2099.3 1015.7 L2099 1014.4 L2098.8 1014.2 L2098.4 1014.8 L2097.5 1015.4 L2096 1015.7 L2095.6 1015.5 L2095 1015.4 L2094.9 1015.7 L2094.5 1016.3 L2093.8 1016 L2093 1015.6 L2092.5 1016.2 L2092.4 1015.8 L2092 1017.1 L2091.5 1016.9 L2090.9 1017.8 L2090.7 1018.4 L2090 1018.7 L2089.3 1017.8 L2088.5 1017.5 L2088.1 1018.3 L2087.7 1018.4 L2087.4 1018.1 L2087 1018.7 L2086.4 1019.1 L2086.1 1018.9 L2085.5 1019 L2084 1019.6 L2082.5 1020.3 L2082.1 1020.8 L2081 1020.7 L2079.5 1020.3 L2078.2 1020.1 L2078 1020.3 L2077.9 1020.1 L2077.4 1020.7 L2076.6 1021 L2076.5 1020.5 L2075 1020.2 L2073.5 1020.3 L2072 1021.2 L2071 1021.9 L2070.5 1021.9 L2069.4 1021.9 L2069 1022.6 L2067.8 1023.3 L2067.5 1022.9 L2066.4 1022.6 L2066 1022.4 L2064.6 1022.5 L2064.5 1022.3 L2063 1022.4 L2061.5 1023 L2060.8 1023.5 L2060 1024.1 L2059.9 1024.5 L2059.4 1024.7 L2058.5 1024.8 L2057 1025.3 L2055.9 1025.9 L2055.5 1026.5 L2054 1026.9 L2052.5 1027.2 L2052.4 1027.6 L2052.3 1027.7 L2051.9 1028.5 L2051 1029 L2049.5 1029.2 L2048 1028.7 L2047 1028.1 L2046.5 1028.6 L2046.4 1029.7 L2045 1030.4 L2043.8 1030 L2043.5 1030.1 L2042 1031 L2040.5 1031.3 L2040 1031.5 L2039 1031.9 L2037.5 1032.6 L2036.9 1033.2 L2036 1033.5 L2035.3 1032.9 L2034.5 1033.3 L2033 1032.9 L2031.5 1033.1 L2030 1033.7 L2029.3 1033.7 L2028.5 1034 L2027 1035.1 L2026.7 1034.6 L2025.5 1035.1 L2024.7 1035.3 L2024.2 1035.9 L2024 1036.4 L2022.5 1036.5 L2021 1036.5 L2019.5 1037.7 L2018.2 1038.8 L2018 1039.9 L2017.6 1039.1 L2016.5 1039.4 L2015 1040.6 L2014.6 1040.6 L2014 1040.1 L2013.5 1040.2 L2012 1040.9 L2010.5 1041.7 L2009.7 1041.4 L2009 1041.1 L2007.5 1040.7 L2006 1040.4 L2005.4 1040.4 L2004.5 1041.3 L2003 1041.6 L2002.6 1040.9 L2001.5 1041.2 L2001.2 1042.1 L2000 1041.9 L1998.5 1041.3 L1997 1041.3 L1995.5 1041.5 L1994 1042.2 L1992.5 1042.2 L1992.1 1041.9 L1991 1042.4 L1990.9 1042.6 L1990.2 1041.6 L1990 1041.4 L1989.5 1040.9 L1988.4 1042.1 L1988 1042.7 L1986.5 1044.7 L1985.8 1044.6 L1985 1044.3 L1984 1043.5 L1983.5 1043.7 L1982 1043.8 L1981.6 1044.1 L1980.5 1044.6 L1979.8 1043.9 L1979 1043.2 L1977.5 1043.6 L1976 1043.8 L1975.9 1043.1 L1975.6 1043 L1974.5 1043.8 L1973.9 1044.7 L1973 1044.4 L1971.5 1044.4 L1971.3 1045.3 L1970 1044.9 L1968.5 1045.1 L1968.2 1045.1 L1967 1044.3 L1965.5 1044 L1965.4 1044.5 L1964 1044.2 L1962.5 1043.7 L1961 1043.7 L1959.5 1043.6 L1958.5 1043.9 L1958 1044.5 L1956.8 1044.6 L1956.5 1044.6 L1955 1044.2 L1954.3 1044 L1953.5 1043.2 L1952.6 1041.7 L1952 1040.3 L1951.1 1038.1 L1950.8 1037.5 L1950.5 1038.2 L1950 1038.8 L1949 1041.3 L1947.5 1044.9 L1947.3 1045.7 L1946 1048.2 L1945 1050 L1944.5 1050.4 L1944.4 1051 L1943 1051.1 L1941.5 1051.7 L1940 1052.3 L1938.5 1052.2 L1937 1052 L1935.5 1053 L1934 1054.2 L1932.5 1054.4 L1931 1054.3 L1930 1054.4 L1929.5 1054.4 L1928 1054.8 L1926.5 1055.6 L1925 1056.4 L1923.5 1056.7 L1922 1056.9 L1920.5 1056.4 L1920 1057 L1919.5 1055.9 L1919 1056.2 L1918.6 1056.6 L1917.5 1057.1 L1917 1057.8 L1916 1058.5 L1914.5 1058.3 L1913.9 1057.9 L1913 1058 L1911.5 1058.5 L1910 1058.3 L1909.1 1058 L1908.5 1057.8 L1907 1057.3 L1905.5 1056.4 L1904 1056.3 L1902.5 1057 L1901 1056.9 L1899.5 1057.6 L1899.1 1057.8 L1898 1057.8 L1897 1058 L1600 1060.6 L1500 1061.5 L1300 1064 L1155 1064 L1153 1064 L1150 1064 L1147 1064 L1144 1064 L1141 1064 L1138 1064 L1135 1064 L1133 1064 L1132 1064 L1129 1064 L1128 1064 L1126 1064 L1123 1064 L1120 1064 L1117 1064 L1114 1064 L1111 1064 L1108 1064 L1106 1064 L1105 1064 L1102 1064 L1099 1064 L1096 1064 L1093 1064 L1090 1064 L1087 1064 L1084 1064 L1081 1064 L1078 1064 L1075 1064 L1072 1064 L1069 1064 L1066 1064 L1065 1064 L1063 1064 L1060 1064 L1057 1064 L1054 1064 L1051 1064 L1048 1064 L1045 1064 L1042 1064 L1039 1064 L1036 1064 L1035 1064 L1033 1064 L1030 1064 L1028.5 1064 L1028 1064 L968 1064 L966 1064 L899 1064 L898 1064 L860 1064 L560 1064 L208 1064 Z" fill="url(#g6)"/>
<path d="M208 1063.4 L560 1063 L860 1061.8 L898 1061 L899 1057.4 L966 1057.4 L968 1059 L1028 1058.6 L1028.5 1058.5 L1030 1058.5 L1033 1058.5 L1035 1058.5 L1036 1058.5 L1039 1058.5 L1042 1058.4 L1045 1058.4 L1048 1058.4 L1051 1058.3 L1054 1058.3 L1057 1058.3 L1060 1058.2 L1063 1058.2 L1065 1058.2 L1066 1058.2 L1069 1058.2 L1072 1058.1 L1075 1058.1 L1078 1058.1 L1081 1058 L1084 1058 L1087 1058 L1090 1058 L1093 1057.9 L1096 1057.9 L1099 1057.9 L1102 1057.8 L1105 1057.8 L1106 1055.8 L1108 1055.8 L1111 1055.8 L1114 1055.8 L1117 1055.8 L1120 1055.8 L1123 1055.8 L1126 1055.8 L1128 1055.8 L1129 1055.8 L1132 1055.8 L1133 1055.8 L1135 1055.8 L1138 1055.8 L1141 1055.8 L1144 1055.8 L1147 1055.8 L1150 1055.8 L1153 1055.8 L1155 1055.8 L1300 1055.4 L1500 1055 L1600 1054.7 L1897 1054 L1898 1054.1 L1899.1 1053.9 L1899.5 1053.8 L1901 1053.7 L1902.5 1054.9 L1904 1055.1 L1905.5 1054.2 L1907 1053.7 L1908.5 1054.1 L1909.1 1054.4 L1910 1054.3 L1911.5 1053.8 L1913 1053.6 L1913.9 1053.7 L1914.5 1053.7 L1916 1053.6 L1917 1053.7 L1917.5 1053.3 L1918.6 1053.1 L1919 1053.5 L1919.5 1053.2 L1920 1053.4 L1920.5 1052.7 L1922 1052.7 L1923.5 1052.7 L1925 1052.3 L1926.5 1051.1 L1928 1049.9 L1929.5 1048.7 L1930 1048.5 L1931 1048.7 L1932.5 1048.5 L1934 1048.2 L1935.5 1048 L1937 1047.7 L1938.5 1047 L1940 1046.1 L1941.5 1045.3 L1943 1044.6 L1944.4 1044.3 L1944.5 1044.4 L1945 1044 L1946 1039.9 L1947.3 1037.9 L1947.5 1038.9 L1949 1034.6 L1950 1031.5 L1950.5 1030.7 L1950.8 1029.8 L1951.1 1030.7 L1952 1031.6 L1952.6 1032.3 L1953.5 1033.9 L1954.3 1036 L1955 1036.3 L1956.5 1037.2 L1956.8 1036.9 L1958 1036.1 L1958.5 1035.5 L1959.5 1035.7 L1961 1036.6 L1962.5 1037.3 L1964 1037.4 L1965.4 1037 L1965.5 1036.1 L1967 1036.2 L1968.2 1037.1 L1968.5 1037.5 L1970 1037.6 L1971.3 1037.5 L1971.5 1036.2 L1973 1036 L1973.9 1036.3 L1974.5 1036.2 L1975.6 1035.4 L1975.9 1035.3 L1976 1034.9 L1977.5 1035 L1979 1035.3 L1979.8 1035.6 L1980.5 1036 L1981.6 1037.4 L1982 1038 L1983.5 1037.1 L1984 1036.9 L1985 1037.6 L1985.8 1037.5 L1986.5 1037 L1988 1034.6 L1988.4 1034 L1989.5 1032.6 L1990 1032 L1990.2 1032.3 L1990.9 1032 L1991 1031.4 L1992.1 1030.9 L1992.5 1031.3 L1994 1032.2 L1995.5 1032.4 L1997 1032.3 L1998.5 1032.1 L2000 1032.6 L2001.2 1032.5 L2001.5 1031.7 L2002.6 1032.3 L2003 1032.9 L2004.5 1032.2 L2005.4 1032 L2006 1032.1 L2007.5 1031.7 L2009 1031 L2009.7 1030.5 L2010.5 1030.4 L2012 1030.2 L2013.5 1029.8 L2014 1030.3 L2014.6 1030.3 L2015 1029.8 L2016.5 1028.9 L2017.6 1029 L2018 1029 L2018.2 1028.7 L2019.5 1029.1 L2021 1029.6 L2022.5 1028.6 L2024 1026.7 L2024.2 1026.1 L2024.7 1025.8 L2025.5 1025.3 L2026.7 1023.5 L2027 1023.6 L2028.5 1022.4 L2029.3 1021.8 L2030 1022 L2031.5 1022.1 L2033 1021.9 L2034.5 1021.4 L2035.3 1021.4 L2036 1020.9 L2036.9 1019.6 L2037.5 1018.9 L2039 1018.6 L2040 1018.4 L2040.5 1018.4 L2042 1018.4 L2043.5 1018.3 L2043.8 1017.5 L2045 1017.3 L2046.4 1016.4 L2046.5 1016.3 L2047 1015.9 L2048 1015.5 L2049.5 1015.2 L2051 1014.4 L2051.9 1013.5 L2052.3 1014.1 L2052.4 1014.6 L2052.5 1014.2 L2054 1013.1 L2055.5 1012.3 L2055.9 1012.6 L2057 1011.8 L2058.5 1010.5 L2059.4 1009.7 L2059.9 1008.9 L2060 1008.8 L2060.8 1008.1 L2061.5 1007.3 L2063 1006.5 L2064.5 1005.9 L2064.6 1005.9 L2066 1004.4 L2066.4 1003.5 L2067.5 1003.1 L2067.8 1003.7 L2069 1003.5 L2069.4 1003 L2070.5 1002.4 L2071 1002.3 L2072 1001.6 L2073.5 1000.9 L2075 1000.6 L2076.5 999.2 L2076.6 999.4 L2077.4 998.7 L2077.9 998.4 L2078 998.4 L2078.2 998.5 L2079.5 997.3 L2081 996.1 L2082.1 995.8 L2082.5 995.5 L2084 993.4 L2085.5 992.1 L2086.1 992.3 L2086.4 992.1 L2087 991.1 L2087.4 990.8 L2087.7 990.6 L2088.1 990.9 L2088.5 990.8 L2089.3 991.1 L2090 991 L2090.7 990.7 L2090.9 991.4 L2091.5 990.3 L2092 989.8 L2092.4 989.5 L2092.5 989.3 L2093 988.2 L2093.8 986.9 L2094.5 985.8 L2094.9 984.7 L2095 984 L2095.6 983.5 L2096 982 L2097.5 979.4 L2098.4 976.9 L2098.8 976.3 L2099 975.7 L2099.3 975.7 L2100.5 975.1 L2102 974.8 L2103 974.5 L2103.5 974.5 L2103.6 974.3 L2105 974.2 L2105.2 974.2 L2106.5 973.7 L2106.6 973.8 L2108 974 L2109.5 973.4 L2111 972.6 L2111.5 972.5 L2112 972.3 L2112.5 972 L2113 972.3 L2113.1 972.3 L2113.9 969.5 L2114 969.6 L2114.7 968.4 L2115.5 967.7 L2116.2 967.4 L2117 966.2 L2118.5 964 L2119.4 962.7 L2120 962.6 L2120.3 963 L2120.5 963 L2121.3 962.5 L2121.5 962.7 L2122.2 962.9 L2123 962 L2124.3 960.5 L2124.5 959.8 L2126 958.3 L2127.4 958.8 L2127.5 959.1 L2129 958.8 L2129.5 958.5 L2129.8 958.5 L2130.5 958.9 L2131.6 959 L2132 959 L2132.6 958.8 L2132.9 953.9 L2133.2 947.2 L2133.4 942.3 L2133.5 940.7 L2133.6 938.9 L2134.1 937.3 L2135 935.7 L2135.7 935.1 L2136.5 934.2 L2136.8 933.7 L2138 931.9 L2139.5 929.9 L2139.6 929.8 L2140 929.7 L2141 929.4 L2141.4 928.9 L2142.4 928.4 L2142.5 929 L2142.6 930.2 L2144 929.8 L2145.5 928.1 L2146.9 927.4 L2147 927.8 L2147.2 928.3 L2148.5 925.1 L2149.6 923 L2150 922.4 L2150.2 921.5 L2151.5 918.9 L2153 916.3 L2154.5 912.5 L2154.7 911.7 L2155.1 912.1 L2156 911.9 L2156.2 911.5 L2157.5 911.4 L2157.7 911.2 L2157.9 911.4 L2159 911.6 L2159.3 911.7 L2160.5 912 L2160.8 912.6 L2161.5 913.3 L2162 913.6 L2162.4 914.5 L2163.5 915.9 L2163.8 916.2 L2165 917.6 L2166.1 917.9 L2166.3 917.7 L2166.5 917.3 L2168 917.5 L2169.5 918.1 L2169.7 918.6 L2169.8 919.3 L2170.1 918.5 L2171 920.6 L2172.5 923.2 L2172.8 923.5 L2173.9 924.6 L2174 924 L2174.3 924.5 L2175.5 923.5 L2177 922.4 L2177.7 922 L2178 922.5 L2178.5 922.1 L2180 920.8 L2180.4 920.8 L2181.5 919.8 L2181.9 919.8 L2183 918.8 L2184.5 916.4 L2186 914.7 L2186.2 915.8 L2187.2 915.1 L2187.5 913.6 L2187.9 913.2 L2189 911.6 L2189.4 911.7 L2190.5 911.1 L2191 910.8 L2192 910.1 L2192.6 909.1 L2193.5 908 L2193.9 908 L2195 908.1 L2195.5 907.2 L2196.5 909.1 L2197.7 910.3 L2198 911 L2199 912.4 L2199.5 913 L2200 913.2 L2201 912.3 L2201.5 911.5 L2201.8 910.9 L2202.5 910.5 L2204 909.5 L2205.5 908.2 L2206.3 908.2 L2207.5 907.2" fill="none" stroke="#6ccbeb" stroke-width="2.6" stroke-linejoin="round"/>
<path d="M208 1064 L560 1064 L860 1064 L898 1064 L899 1064 L966 1064 L968 1064 L1028 1064 L1028.5 1064 L1030 1064 L1033 1064 L1035 1064 L1036 1064 L1039 1064 L1042 1064 L1045 1064 L1048 1064 L1051 1064 L1054 1064 L1057 1064 L1060 1064 L1063 1064 L1065 1064 L1066 1064 L1069 1064 L1072 1064 L1075 1064 L1078 1064 L1081 1064 L1084 1064 L1087 1064 L1090 1064 L1093 1064 L1096 1064 L1099 1064 L1102 1064 L1105 1064 L1106 1064 L1108 1064 L1111 1064 L1114 1064 L1117 1064 L1120 1064 L1123 1064 L1126 1064 L1128 1064 L1129 1064 L1132 1064 L1133 1064 L1135 1064 L1138 1064 L1141 1064 L1144 1064 L1147 1064 L1150 1064 L1153 1064 L1155 1064 L1300 1064 L1500 1061.5 L1600 1060.6 L1897 1058 L1898 1057.8 L1899.1 1057.8 L1899.5 1057.6 L1901 1056.9 L1902.5 1057 L1904 1056.3 L1905.5 1056.4 L1907 1057.3 L1908.5 1057.8 L1909.1 1058 L1910 1058.3 L1911.5 1058.5 L1913 1058 L1913.9 1057.9 L1914.5 1058.3 L1916 1058.5 L1917 1057.8 L1917.5 1057.1 L1918.6 1056.6 L1919 1056.2 L1919.5 1055.9 L1920 1057 L1920.5 1056.4 L1922 1056.9 L1923.5 1056.7 L1925 1056.4 L1926.5 1055.6 L1928 1054.8 L1929.5 1054.4 L1930 1054.4 L1931 1054.3 L1932.5 1054.4 L1934 1054.2 L1935.5 1053 L1937 1052 L1938.5 1052.2 L1940 1052.3 L1941.5 1051.7 L1943 1051.1 L1944.4 1051 L1944.5 1050.4 L1945 1050 L1946 1048.2 L1947.3 1045.7 L1947.5 1044.9 L1949 1041.3 L1950 1038.8 L1950.5 1038.2 L1950.8 1037.5 L1951.1 1038.1 L1952 1040.3 L1952.6 1041.7 L1953.5 1043.2 L1954.3 1044 L1955 1044.2 L1956.5 1044.6 L1956.8 1044.6 L1958 1044.5 L1958.5 1043.9 L1959.5 1043.6 L1961 1043.7 L1962.5 1043.7 L1964 1044.2 L1965.4 1044.5 L1965.5 1044 L1967 1044.3 L1968.2 1045.1 L1968.5 1045.1 L1970 1044.9 L1971.3 1045.3 L1971.5 1044.4 L1973 1044.4 L1973.9 1044.7 L1974.5 1043.8 L1975.6 1043 L1975.9 1043.1 L1976 1043.8 L1977.5 1043.6 L1979 1043.2 L1979.8 1043.9 L1980.5 1044.6 L1981.6 1044.1 L1982 1043.8 L1983.5 1043.7 L1984 1043.5 L1985 1044.3 L1985.8 1044.6 L1986.5 1044.7 L1988 1042.7 L1988.4 1042.1 L1989.5 1040.9 L1990 1041.4 L1990.2 1041.6 L1990.9 1042.6 L1991 1042.4 L1992.1 1041.9 L1992.5 1042.2 L1994 1042.2 L1995.5 1041.5 L1997 1041.3 L1998.5 1041.3 L2000 1041.9 L2001.2 1042.1 L2001.5 1041.2 L2002.6 1040.9 L2003 1041.6 L2004.5 1041.3 L2005.4 1040.4 L2006 1040.4 L2007.5 1040.7 L2009 1041.1 L2009.7 1041.4 L2010.5 1041.7 L2012 1040.9 L2013.5 1040.2 L2014 1040.1 L2014.6 1040.6 L2015 1040.6 L2016.5 1039.4 L2017.6 1039.1 L2018 1039.9 L2018.2 1038.8 L2019.5 1037.7 L2021 1036.5 L2022.5 1036.5 L2024 1036.4 L2024.2 1035.9 L2024.7 1035.3 L2025.5 1035.1 L2026.7 1034.6 L2027 1035.1 L2028.5 1034 L2029.3 1033.7 L2030 1033.7 L2031.5 1033.1 L2033 1032.9 L2034.5 1033.3 L2035.3 1032.9 L2036 1033.5 L2036.9 1033.2 L2037.5 1032.6 L2039 1031.9 L2040 1031.5 L2040.5 1031.3 L2042 1031 L2043.5 1030.1 L2043.8 1030 L2045 1030.4 L2046.4 1029.7 L2046.5 1028.6 L2047 1028.1 L2048 1028.7 L2049.5 1029.2 L2051 1029 L2051.9 1028.5 L2052.3 1027.7 L2052.4 1027.6 L2052.5 1027.2 L2054 1026.9 L2055.5 1026.5 L2055.9 1025.9 L2057 1025.3 L2058.5 1024.8 L2059.4 1024.7 L2059.9 1024.5 L2060 1024.1 L2060.8 1023.5 L2061.5 1023 L2063 1022.4 L2064.5 1022.3 L2064.6 1022.5 L2066 1022.4 L2066.4 1022.6 L2067.5 1022.9 L2067.8 1023.3 L2069 1022.6 L2069.4 1021.9 L2070.5 1021.9 L2071 1021.9 L2072 1021.2 L2073.5 1020.3 L2075 1020.2 L2076.5 1020.5 L2076.6 1021 L2077.4 1020.7 L2077.9 1020.1 L2078 1020.3 L2078.2 1020.1 L2079.5 1020.3 L2081 1020.7 L2082.1 1020.8 L2082.5 1020.3 L2084 1019.6 L2085.5 1019 L2086.1 1018.9 L2086.4 1019.1 L2087 1018.7 L2087.4 1018.1 L2087.7 1018.4 L2088.1 1018.3 L2088.5 1017.5 L2089.3 1017.8 L2090 1018.7 L2090.7 1018.4 L2090.9 1017.8 L2091.5 1016.9 L2092 1017.1 L2092.4 1015.8 L2092.5 1016.2 L2093 1015.6 L2093.8 1016 L2094.5 1016.3 L2094.9 1015.7 L2095 1015.4 L2095.6 1015.5 L2096 1015.7 L2097.5 1015.4 L2098.4 1014.8 L2098.8 1014.2 L2099 1014.4 L2099.3 1015.7 L2100.5 1016.3 L2102 1016.1 L2103 1015.7 L2103.5 1015 L2103.6 1014.8 L2105 1014.9 L2105.2 1015.1 L2106.5 1015.1 L2106.6 1014.3 L2108 1013.9 L2109.5 1013.9 L2111 1014.1 L2111.5 1014 L2112 1014.1 L2112.5 1013.9 L2113 1013.9 L2113.1 1013.7 L2113.9 1013.5 L2114 1013.6 L2114.7 1012.2 L2115.5 1011.1 L2116.2 1010.4 L2117 1009.4 L2118.5 1007.4 L2119.4 1006.5 L2120 1006.2 L2120.3 1006 L2120.5 1005.6 L2121.3 1006 L2121.5 1005.5 L2122.2 1005.4 L2123 1005.2 L2124.3 1005 L2124.5 1005.2 L2126 1004.7 L2127.4 1003.7 L2127.5 1003.4 L2129 1003.2 L2129.5 1003 L2129.8 1003.4 L2130.5 1004.4 L2131.6 1003 L2132 999.3 L2132.6 993.1 L2132.9 990.7 L2133.2 988 L2133.4 985.9 L2133.5 985 L2133.6 984.2 L2134.1 984.5 L2135 982.6 L2135.7 981.6 L2136.5 981.4 L2136.8 981.2 L2138 979.7 L2139.5 978.7 L2139.6 978.9 L2140 978.8 L2141 979 L2141.4 978.3 L2142.4 978.3 L2142.5 979.1 L2142.6 979.7 L2144 979.7 L2145.5 979.8 L2146.9 980.4 L2147 980.2 L2147.2 980.4 L2148.5 978.7 L2149.6 978.2 L2150 978 L2150.2 976.9 L2151.5 974.9 L2153 973.2 L2154.5 971.5 L2154.7 971.9 L2155.1 971.4 L2156 969.8 L2156.2 969.1 L2157.5 970.5 L2157.7 971 L2157.9 971.2 L2159 972.7 L2159.3 973.2 L2160.5 974.3 L2160.8 975.1 L2161.5 975.6 L2162 975.9 L2162.4 975.8 L2163.5 976 L2163.8 976.2 L2165 976.8 L2166.1 977.6 L2166.3 977.8 L2166.5 977.9 L2168 978.5 L2169.5 978.5 L2169.7 978.3 L2169.8 978.1 L2170.1 979.3 L2171 980.1 L2172.5 981.6 L2172.8 981.7 L2173.9 982 L2174 981.4 L2174.3 982.7 L2175.5 980.7 L2177 978 L2177.7 976.5 L2178 976.7 L2178.5 976.9 L2180 975 L2180.4 974.2 L2181.5 973 L2181.9 972.1 L2183 971.8 L2184.5 969.9 L2186 967.6 L2186.2 967.4 L2187.2 966.5 L2187.5 966.3 L2187.9 965.8 L2189 964.6 L2189.4 963.8 L2190.5 964.2 L2191 964.1 L2192 963.7 L2192.6 963.7 L2193.5 964 L2193.9 964.3 L2195 964.1 L2195.5 963 L2196.5 964.9 L2197.7 966.9 L2198 967.1 L2199 968.1 L2199.5 969.3 L2200 970.6 L2201 969.5 L2201.5 968.1 L2201.8 968.5 L2202.5 968.3 L2204 967.1 L2205.5 966.8 L2206.3 966.2 L2207.5 963.8 L2207.5 1015.9 L2206.3 1016.3 L2205.5 1016.8 L2204 1017 L2202.5 1016.9 L2201.8 1016.7 L2201.5 1017 L2201 1017.4 L2200 1017.7 L2199.5 1017.6 L2199 1017.3 L2198 1017.8 L2197.7 1018 L2196.5 1018.3 L2195.5 1018.8 L2195 1018.7 L2193.9 1018.8 L2193.5 1019.1 L2192.6 1019.5 L2192 1020 L2191 1020.4 L2190.5 1020.3 L2189.4 1020.3 L2189 1020.4 L2187.9 1020.4 L2187.5 1019.9 L2187.2 1019.5 L2186.2 1020.2 L2186 1020.8 L2184.5 1021.6 L2183 1022.2 L2181.9 1022 L2181.5 1022 L2180.4 1022.6 L2180 1022.6 L2178.5 1022.8 L2178 1022.8 L2177.7 1022.6 L2177 1022.8 L2175.5 1023.3 L2174.3 1023.4 L2174 1023.4 L2173.9 1023.4 L2172.8 1023.4 L2172.5 1023.6 L2171 1023.2 L2170.1 1022.7 L2169.8 1022.1 L2169.7 1021.7 L2169.5 1021.9 L2168 1021.6 L2166.5 1021.2 L2166.3 1021 L2166.1 1020.7 L2165 1020.9 L2163.8 1021 L2163.5 1020 L2162.4 1018.6 L2162 1018.3 L2161.5 1018.7 L2160.8 1019.2 L2160.5 1019.3 L2159.3 1018.6 L2159 1018.4 L2157.9 1018.6 L2157.7 1018.1 L2157.5 1018.9 L2156.2 1018.3 L2156 1017.8 L2155.1 1017.8 L2154.7 1018.1 L2154.5 1018.3 L2153 1018.2 L2151.5 1018.1 L2150.2 1018.2 L2150 1018.5 L2149.6 1018.1 L2148.5 1017.2 L2147.2 1016.7 L2147 1016.3 L2146.9 1015.9 L2145.5 1016.2 L2144 1016.7 L2142.6 1016.8 L2142.5 1016.8 L2142.4 1016.5 L2141.4 1016.4 L2141 1016.8 L2140 1017.2 L2139.6 1016.6 L2139.5 1016.8 L2138 1016.9 L2136.8 1017 L2136.5 1016.8 L2135.7 1016.7 L2135 1016.8 L2134.1 1017.3 L2133.6 1017.4 L2133.5 1017.5 L2133.4 1017.9 L2133.2 1019.4 L2132.9 1021.9 L2132.6 1024.1 L2132 1027.9 L2131.6 1030.3 L2130.5 1030.3 L2129.8 1030.6 L2129.5 1030.3 L2129 1030.4 L2127.5 1030.8 L2127.4 1030.8 L2126 1030.6 L2124.5 1030.2 L2124.3 1030.5 L2123 1031 L2122.2 1031.2 L2121.5 1030.9 L2121.3 1031.5 L2120.5 1032.3 L2120.3 1032.3 L2120 1032.8 L2119.4 1033.9 L2118.5 1035.1 L2117 1036 L2116.2 1036.3 L2115.5 1035.7 L2114.7 1035.4 L2114 1035.5 L2113.9 1035.7 L2113.1 1035.5 L2113 1035.6 L2112.5 1036.4 L2112 1037.2 L2111.5 1037.4 L2111 1037 L2109.5 1036.7 L2108 1036.6 L2106.6 1036.6 L2106.5 1036.7 L2105.2 1036.7 L2105 1036.6 L2103.6 1036.7 L2103.5 1037.2 L2103 1037.8 L2102 1037.6 L2100.5 1037.1 L2099.3 1036.8 L2099 1036.4 L2098.8 1036.2 L2098.4 1036.3 L2097.5 1036.6 L2096 1037.3 L2095.6 1037.6 L2095 1037.3 L2094.9 1037.1 L2094.5 1037.3 L2093.8 1036.9 L2093 1036.5 L2092.5 1036.5 L2092.4 1036.6 L2092 1036.6 L2091.5 1036.7 L2090.9 1036.8 L2090.7 1037.2 L2090 1038 L2089.3 1038.7 L2088.5 1038.6 L2088.1 1038 L2087.7 1037.7 L2087.4 1038.3 L2087 1038.5 L2086.4 1038 L2086.1 1037.6 L2085.5 1037.6 L2084 1038.3 L2082.5 1039 L2082.1 1039.1 L2081 1038.9 L2079.5 1039 L2078.2 1038.7 L2078 1038.4 L2077.9 1038.8 L2077.4 1038.7 L2076.6 1038.9 L2076.5 1039.2 L2075 1039.7 L2073.5 1039.8 L2072 1040.1 L2071 1040.4 L2070.5 1040.7 L2069.4 1041.3 L2069 1041.3 L2067.8 1041.8 L2067.5 1041.8 L2066.4 1041.5 L2066 1041.5 L2064.6 1042 L2064.5 1041.8 L2063 1042.6 L2061.5 1043.4 L2060.8 1043.1 L2060 1042.6 L2059.9 1043.2 L2059.4 1043.3 L2058.5 1042.8 L2057 1042.7 L2055.9 1043 L2055.5 1043.2 L2054 1043.6 L2052.5 1043.5 L2052.4 1043.5 L2052.3 1043.7 L2051.9 1043.8 L2051 1043.9 L2049.5 1043.8 L2048 1043.7 L2047 1043.3 L2046.5 1043.1 L2046.4 1044 L2045 1044.5 L2043.8 1044.1 L2043.5 1044.2 L2042 1044.6 L2040.5 1044.7 L2040 1045 L2039 1045.4 L2037.5 1045 L2036.9 1044.5 L2036 1044.4 L2035.3 1044.8 L2034.5 1043.7 L2033 1043.3 L2031.5 1043.2 L2030 1042.7 L2029.3 1042.2 L2028.5 1042.2 L2027 1042.3 L2026.7 1042.2 L2025.5 1042.4 L2024.7 1042.6 L2024.2 1042.7 L2024 1042.8 L2022.5 1043.3 L2021 1043.4 L2019.5 1043.6 L2018.2 1043.9 L2018 1044.1 L2017.6 1044.5 L2016.5 1044.8 L2015 1045.2 L2014.6 1045.5 L2014 1045.3 L2013.5 1044.9 L2012 1045.6 L2010.5 1046.7 L2009.7 1046.5 L2009 1046.7 L2007.5 1045.7 L2006 1045 L2005.4 1045.5 L2004.5 1046.6 L2003 1046.2 L2002.6 1045.1 L2001.5 1044.8 L2001.2 1044.8 L2000 1044.2 L1998.5 1043.7 L1997 1044.1 L1995.5 1044.8 L1994 1044.5 L1992.5 1043.8 L1992.1 1043.8 L1991 1043.5 L1990.9 1043.1 L1990.2 1043.8 L1990 1044.6 L1989.5 1045.1 L1988.4 1045.8 L1988 1046 L1986.5 1047.9 L1985.8 1048.2 L1985 1047.9 L1984 1047.2 L1983.5 1046.8 L1982 1046.2 L1981.6 1046.1 L1980.5 1046.5 L1979.8 1047.1 L1979 1046.9 L1977.5 1045.9 L1976 1046 L1975.9 1046.6 L1975.6 1045.6 L1974.5 1046.1 L1973.9 1046.5 L1973 1046.9 L1971.5 1047.5 L1971.3 1047.3 L1970 1047 L1968.5 1046.9 L1968.2 1046.9 L1967 1046.8 L1965.5 1046.8 L1965.4 1047.2 L1964 1047.1 L1962.5 1046.5 L1961 1046 L1959.5 1045.8 L1958.5 1046.1 L1958 1046.2 L1956.8 1045.7 L1956.5 1045.3 L1955 1044.8 L1954.3 1044.8 L1953.5 1045.3 L1952.6 1045.6 L1952 1044.4 L1951.1 1041.9 L1950.8 1040.5 L1950.5 1039.5 L1950 1038.8 L1949 1041.3 L1947.5 1045.4 L1947.3 1045.7 L1946 1048.9 L1945 1052 L1944.5 1052 L1944.4 1052.8 L1943 1053.2 L1941.5 1053.1 L1940 1053.1 L1938.5 1053.4 L1937 1053.9 L1935.5 1054.4 L1934 1054.7 L1932.5 1055.1 L1931 1055.4 L1930 1055.7 L1929.5 1056.5 L1928 1057.1 L1926.5 1056.9 L1925 1056.7 L1923.5 1056.8 L1922 1057.5 L1920.5 1058.5 L1920 1058.5 L1919.5 1058.7 L1919 1058.4 L1918.6 1058.3 L1917.5 1058.2 L1917 1058.4 L1916 1058.5 L1914.5 1058.3 L1913.9 1058.8 L1913 1058.9 L1911.5 1059 L1910 1058.8 L1909.1 1058.6 L1908.5 1058.7 L1907 1059.1 L1905.5 1058.9 L1904 1058.3 L1902.5 1058.4 L1901 1058.4 L1899.5 1058.8 L1899.1 1058.9 L1898 1059 L1897 1059 L1600 1061.2 L1500 1062 L1300 1064 L1155 1064 L1153 1064 L1150 1064 L1147 1064 L1144 1064 L1141 1064 L1138 1064 L1135 1064 L1133 1064 L1132 1064 L1129 1064 L1128 1064 L1126 1064 L1123 1064 L1120 1064 L1117 1064 L1114 1064 L1111 1064 L1108 1064 L1106 1064 L1105 1064 L1102 1064 L1099 1064 L1096 1064 L1093 1064 L1090 1064 L1087 1064 L1084 1064 L1081 1064 L1078 1064 L1075 1064 L1072 1064 L1069 1064 L1066 1064 L1065 1064 L1063 1064 L1060 1064 L1057 1064 L1054 1064 L1051 1064 L1048 1064 L1045 1064 L1042 1064 L1039 1064 L1036 1064 L1035 1064 L1033 1064 L1030 1064 L1028.5 1064 L1028 1064 L968 1064 L966 1064 L899 1064 L898 1064 L860 1064 L560 1064 L208 1064 Z" fill="url(#g5)"/>
<path d="M1300 1064 L1500 1061.5 L1600 1060.6 L1897 1058 L1898 1057.8 L1899.1 1057.8 L1899.5 1057.6 L1901 1056.9 L1902.5 1057 L1904 1056.3 L1905.5 1056.4 L1907 1057.3 L1908.5 1057.8 L1909.1 1058 L1910 1058.3 L1911.5 1058.5 L1913 1058 L1913.9 1057.9 L1914.5 1058.3 L1916 1058.5 L1917 1057.8 L1917.5 1057.1 L1918.6 1056.6 L1919 1056.2 L1919.5 1055.9 L1920 1057 L1920.5 1056.4 L1922 1056.9 L1923.5 1056.7 L1925 1056.4 L1926.5 1055.6 L1928 1054.8 L1929.5 1054.4 L1930 1054.4 L1931 1054.3 L1932.5 1054.4 L1934 1054.2 L1935.5 1053 L1937 1052 L1938.5 1052.2 L1940 1052.3 L1941.5 1051.7 L1943 1051.1 L1944.4 1051 L1944.5 1050.4 L1945 1050 L1946 1048.2 L1947.3 1045.7 L1947.5 1044.9 L1949 1041.3 L1950 1038.8 L1950.5 1038.2 L1950.8 1037.5 L1951.1 1038.1 L1952 1040.3 L1952.6 1041.7 L1953.5 1043.2 L1954.3 1044 L1955 1044.2 L1956.5 1044.6 L1956.8 1044.6 L1958 1044.5 L1958.5 1043.9 L1959.5 1043.6 L1961 1043.7 L1962.5 1043.7 L1964 1044.2 L1965.4 1044.5 L1965.5 1044 L1967 1044.3 L1968.2 1045.1 L1968.5 1045.1 L1970 1044.9 L1971.3 1045.3 L1971.5 1044.4 L1973 1044.4 L1973.9 1044.7 L1974.5 1043.8 L1975.6 1043 L1975.9 1043.1 L1976 1043.8 L1977.5 1043.6 L1979 1043.2 L1979.8 1043.9 L1980.5 1044.6 L1981.6 1044.1 L1982 1043.8 L1983.5 1043.7 L1984 1043.5 L1985 1044.3 L1985.8 1044.6 L1986.5 1044.7 L1988 1042.7 L1988.4 1042.1 L1989.5 1040.9 L1990 1041.4 L1990.2 1041.6 L1990.9 1042.6 L1991 1042.4 L1992.1 1041.9 L1992.5 1042.2 L1994 1042.2 L1995.5 1041.5 L1997 1041.3 L1998.5 1041.3 L2000 1041.9 L2001.2 1042.1 L2001.5 1041.2 L2002.6 1040.9 L2003 1041.6 L2004.5 1041.3 L2005.4 1040.4 L2006 1040.4 L2007.5 1040.7 L2009 1041.1 L2009.7 1041.4 L2010.5 1041.7 L2012 1040.9 L2013.5 1040.2 L2014 1040.1 L2014.6 1040.6 L2015 1040.6 L2016.5 1039.4 L2017.6 1039.1 L2018 1039.9 L2018.2 1038.8 L2019.5 1037.7 L2021 1036.5 L2022.5 1036.5 L2024 1036.4 L2024.2 1035.9 L2024.7 1035.3 L2025.5 1035.1 L2026.7 1034.6 L2027 1035.1 L2028.5 1034 L2029.3 1033.7 L2030 1033.7 L2031.5 1033.1 L2033 1032.9 L2034.5 1033.3 L2035.3 1032.9 L2036 1033.5 L2036.9 1033.2 L2037.5 1032.6 L2039 1031.9 L2040 1031.5 L2040.5 1031.3 L2042 1031 L2043.5 1030.1 L2043.8 1030 L2045 1030.4 L2046.4 1029.7 L2046.5 1028.6 L2047 1028.1 L2048 1028.7 L2049.5 1029.2 L2051 1029 L2051.9 1028.5 L2052.3 1027.7 L2052.4 1027.6 L2052.5 1027.2 L2054 1026.9 L2055.5 1026.5 L2055.9 1025.9 L2057 1025.3 L2058.5 1024.8 L2059.4 1024.7 L2059.9 1024.5 L2060 1024.1 L2060.8 1023.5 L2061.5 1023 L2063 1022.4 L2064.5 1022.3 L2064.6 1022.5 L2066 1022.4 L2066.4 1022.6 L2067.5 1022.9 L2067.8 1023.3 L2069 1022.6 L2069.4 1021.9 L2070.5 1021.9 L2071 1021.9 L2072 1021.2 L2073.5 1020.3 L2075 1020.2 L2076.5 1020.5 L2076.6 1021 L2077.4 1020.7 L2077.9 1020.1 L2078 1020.3 L2078.2 1020.1 L2079.5 1020.3 L2081 1020.7 L2082.1 1020.8 L2082.5 1020.3 L2084 1019.6 L2085.5 1019 L2086.1 1018.9 L2086.4 1019.1 L2087 1018.7 L2087.4 1018.1 L2087.7 1018.4 L2088.1 1018.3 L2088.5 1017.5 L2089.3 1017.8 L2090 1018.7 L2090.7 1018.4 L2090.9 1017.8 L2091.5 1016.9 L2092 1017.1 L2092.4 1015.8 L2092.5 1016.2 L2093 1015.6 L2093.8 1016 L2094.5 1016.3 L2094.9 1015.7 L2095 1015.4 L2095.6 1015.5 L2096 1015.7 L2097.5 1015.4 L2098.4 1014.8 L2098.8 1014.2 L2099 1014.4 L2099.3 1015.7 L2100.5 1016.3 L2102 1016.1 L2103 1015.7 L2103.5 1015 L2103.6 1014.8 L2105 1014.9 L2105.2 1015.1 L2106.5 1015.1 L2106.6 1014.3 L2108 1013.9 L2109.5 1013.9 L2111 1014.1 L2111.5 1014 L2112 1014.1 L2112.5 1013.9 L2113 1013.9 L2113.1 1013.7 L2113.9 1013.5 L2114 1013.6 L2114.7 1012.2 L2115.5 1011.1 L2116.2 1010.4 L2117 1009.4 L2118.5 1007.4 L2119.4 1006.5 L2120 1006.2 L2120.3 1006 L2120.5 1005.6 L2121.3 1006 L2121.5 1005.5 L2122.2 1005.4 L2123 1005.2 L2124.3 1005 L2124.5 1005.2 L2126 1004.7 L2127.4 1003.7 L2127.5 1003.4 L2129 1003.2 L2129.5 1003 L2129.8 1003.4 L2130.5 1004.4 L2131.6 1003 L2132 999.3 L2132.6 993.1 L2132.9 990.7 L2133.2 988 L2133.4 985.9 L2133.5 985 L2133.6 984.2 L2134.1 984.5 L2135 982.6 L2135.7 981.6 L2136.5 981.4 L2136.8 981.2 L2138 979.7 L2139.5 978.7 L2139.6 978.9 L2140 978.8 L2141 979 L2141.4 978.3 L2142.4 978.3 L2142.5 979.1 L2142.6 979.7 L2144 979.7 L2145.5 979.8 L2146.9 980.4 L2147 980.2 L2147.2 980.4 L2148.5 978.7 L2149.6 978.2 L2150 978 L2150.2 976.9 L2151.5 974.9 L2153 973.2 L2154.5 971.5 L2154.7 971.9 L2155.1 971.4 L2156 969.8 L2156.2 969.1 L2157.5 970.5 L2157.7 971 L2157.9 971.2 L2159 972.7 L2159.3 973.2 L2160.5 974.3 L2160.8 975.1 L2161.5 975.6 L2162 975.9 L2162.4 975.8 L2163.5 976 L2163.8 976.2 L2165 976.8 L2166.1 977.6 L2166.3 977.8 L2166.5 977.9 L2168 978.5 L2169.5 978.5 L2169.7 978.3 L2169.8 978.1 L2170.1 979.3 L2171 980.1 L2172.5 981.6 L2172.8 981.7 L2173.9 982 L2174 981.4 L2174.3 982.7 L2175.5 980.7 L2177 978 L2177.7 976.5 L2178 976.7 L2178.5 976.9 L2180 975 L2180.4 974.2 L2181.5 973 L2181.9 972.1 L2183 971.8 L2184.5 969.9 L2186 967.6 L2186.2 967.4 L2187.2 966.5 L2187.5 966.3 L2187.9 965.8 L2189 964.6 L2189.4 963.8 L2190.5 964.2 L2191 964.1 L2192 963.7 L2192.6 963.7 L2193.5 964 L2193.9 964.3 L2195 964.1 L2195.5 963 L2196.5 964.9 L2197.7 966.9 L2198 967.1 L2199 968.1 L2199.5 969.3 L2200 970.6 L2201 969.5 L2201.5 968.1 L2201.8 968.5 L2202.5 968.3 L2204 967.1 L2205.5 966.8 L2206.3 966.2 L2207.5 963.8" fill="none" stroke="#3b5cf4" stroke-width="2.6" stroke-linejoin="round"/>
<path d="M208 1064 L560 1064 L860 1064 L898 1064 L899 1064 L966 1064 L968 1064 L1028 1064 L1028.5 1064 L1030 1064 L1033 1064 L1035 1064 L1036 1064 L1039 1064 L1042 1064 L1045 1064 L1048 1064 L1051 1064 L1054 1064 L1057 1064 L1060 1064 L1063 1064 L1065 1064 L1066 1064 L1069 1064 L1072 1064 L1075 1064 L1078 1064 L1081 1064 L1084 1064 L1087 1064 L1090 1064 L1093 1064 L1096 1064 L1099 1064 L1102 1064 L1105 1064 L1106 1064 L1108 1064 L1111 1064 L1114 1064 L1117 1064 L1120 1064 L1123 1064 L1126 1064 L1128 1064 L1129 1064 L1132 1064 L1133 1064 L1135 1064 L1138 1064 L1141 1064 L1144 1064 L1147 1064 L1150 1064 L1153 1064 L1155 1064 L1300 1064 L1500 1062 L1600 1061.2 L1897 1059 L1898 1059 L1899.1 1058.9 L1899.5 1058.8 L1901 1058.4 L1902.5 1058.4 L1904 1058.3 L1905.5 1058.9 L1907 1059.1 L1908.5 1058.7 L1909.1 1058.6 L1910 1058.8 L1911.5 1059 L1913 1058.9 L1913.9 1058.8 L1914.5 1058.3 L1916 1058.5 L1917 1058.4 L1917.5 1058.2 L1918.6 1058.3 L1919 1058.4 L1919.5 1058.7 L1920 1058.5 L1920.5 1058.5 L1922 1057.5 L1923.5 1056.8 L1925 1056.7 L1926.5 1056.9 L1928 1057.1 L1929.5 1056.5 L1930 1055.7 L1931 1055.4 L1932.5 1055.1 L1934 1054.7 L1935.5 1054.4 L1937 1053.9 L1938.5 1053.4 L1940 1053.1 L1941.5 1053.1 L1943 1053.2 L1944.4 1052.8 L1944.5 1052 L1945 1052 L1946 1048.9 L1947.3 1045.7 L1947.5 1045.4 L1949 1041.3 L1950 1038.8 L1950.5 1039.5 L1950.8 1040.5 L1951.1 1041.9 L1952 1044.4 L1952.6 1045.6 L1953.5 1045.3 L1954.3 1044.8 L1955 1044.8 L1956.5 1045.3 L1956.8 1045.7 L1958 1046.2 L1958.5 1046.1 L1959.5 1045.8 L1961 1046 L1962.5 1046.5 L1964 1047.1 L1965.4 1047.2 L1965.5 1046.8 L1967 1046.8 L1968.2 1046.9 L1968.5 1046.9 L1970 1047 L1971.3 1047.3 L1971.5 1047.5 L1973 1046.9 L1973.9 1046.5 L1974.5 1046.1 L1975.6 1045.6 L1975.9 1046.6 L1976 1046 L1977.5 1045.9 L1979 1046.9 L1979.8 1047.1 L1980.5 1046.5 L1981.6 1046.1 L1982 1046.2 L1983.5 1046.8 L1984 1047.2 L1985 1047.9 L1985.8 1048.2 L1986.5 1047.9 L1988 1046 L1988.4 1045.8 L1989.5 1045.1 L1990 1044.6 L1990.2 1043.8 L1990.9 1043.1 L1991 1043.5 L1992.1 1043.8 L1992.5 1043.8 L1994 1044.5 L1995.5 1044.8 L1997 1044.1 L1998.5 1043.7 L2000 1044.2 L2001.2 1044.8 L2001.5 1044.8 L2002.6 1045.1 L2003 1046.2 L2004.5 1046.6 L2005.4 1045.5 L2006 1045 L2007.5 1045.7 L2009 1046.7 L2009.7 1046.5 L2010.5 1046.7 L2012 1045.6 L2013.5 1044.9 L2014 1045.3 L2014.6 1045.5 L2015 1045.2 L2016.5 1044.8 L2017.6 1044.5 L2018 1044.1 L2018.2 1043.9 L2019.5 1043.6 L2021 1043.4 L2022.5 1043.3 L2024 1042.8 L2024.2 1042.7 L2024.7 1042.6 L2025.5 1042.4 L2026.7 1042.2 L2027 1042.3 L2028.5 1042.2 L2029.3 1042.2 L2030 1042.7 L2031.5 1043.2 L2033 1043.3 L2034.5 1043.7 L2035.3 1044.8 L2036 1044.4 L2036.9 1044.5 L2037.5 1045 L2039 1045.4 L2040 1045 L2040.5 1044.7 L2042 1044.6 L2043.5 1044.2 L2043.8 1044.1 L2045 1044.5 L2046.4 1044 L2046.5 1043.1 L2047 1043.3 L2048 1043.7 L2049.5 1043.8 L2051 1043.9 L2051.9 1043.8 L2052.3 1043.7 L2052.4 1043.5 L2052.5 1043.5 L2054 1043.6 L2055.5 1043.2 L2055.9 1043 L2057 1042.7 L2058.5 1042.8 L2059.4 1043.3 L2059.9 1043.2 L2060 1042.6 L2060.8 1043.1 L2061.5 1043.4 L2063 1042.6 L2064.5 1041.8 L2064.6 1042 L2066 1041.5 L2066.4 1041.5 L2067.5 1041.8 L2067.8 1041.8 L2069 1041.3 L2069.4 1041.3 L2070.5 1040.7 L2071 1040.4 L2072 1040.1 L2073.5 1039.8 L2075 1039.7 L2076.5 1039.2 L2076.6 1038.9 L2077.4 1038.7 L2077.9 1038.8 L2078 1038.4 L2078.2 1038.7 L2079.5 1039 L2081 1038.9 L2082.1 1039.1 L2082.5 1039 L2084 1038.3 L2085.5 1037.6 L2086.1 1037.6 L2086.4 1038 L2087 1038.5 L2087.4 1038.3 L2087.7 1037.7 L2088.1 1038 L2088.5 1038.6 L2089.3 1038.7 L2090 1038 L2090.7 1037.2 L2090.9 1036.8 L2091.5 1036.7 L2092 1036.6 L2092.4 1036.6 L2092.5 1036.5 L2093 1036.5 L2093.8 1036.9 L2094.5 1037.3 L2094.9 1037.1 L2095 1037.3 L2095.6 1037.6 L2096 1037.3 L2097.5 1036.6 L2098.4 1036.3 L2098.8 1036.2 L2099 1036.4 L2099.3 1036.8 L2100.5 1037.1 L2102 1037.6 L2103 1037.8 L2103.5 1037.2 L2103.6 1036.7 L2105 1036.6 L2105.2 1036.7 L2106.5 1036.7 L2106.6 1036.6 L2108 1036.6 L2109.5 1036.7 L2111 1037 L2111.5 1037.4 L2112 1037.2 L2112.5 1036.4 L2113 1035.6 L2113.1 1035.5 L2113.9 1035.7 L2114 1035.5 L2114.7 1035.4 L2115.5 1035.7 L2116.2 1036.3 L2117 1036 L2118.5 1035.1 L2119.4 1033.9 L2120 1032.8 L2120.3 1032.3 L2120.5 1032.3 L2121.3 1031.5 L2121.5 1030.9 L2122.2 1031.2 L2123 1031 L2124.3 1030.5 L2124.5 1030.2 L2126 1030.6 L2127.4 1030.8 L2127.5 1030.8 L2129 1030.4 L2129.5 1030.3 L2129.8 1030.6 L2130.5 1030.3 L2131.6 1030.3 L2132 1027.9 L2132.6 1024.1 L2132.9 1021.9 L2133.2 1019.4 L2133.4 1017.9 L2133.5 1017.5 L2133.6 1017.4 L2134.1 1017.3 L2135 1016.8 L2135.7 1016.7 L2136.5 1016.8 L2136.8 1017 L2138 1016.9 L2139.5 1016.8 L2139.6 1016.6 L2140 1017.2 L2141 1016.8 L2141.4 1016.4 L2142.4 1016.5 L2142.5 1016.8 L2142.6 1016.8 L2144 1016.7 L2145.5 1016.2 L2146.9 1015.9 L2147 1016.3 L2147.2 1016.7 L2148.5 1017.2 L2149.6 1018.1 L2150 1018.5 L2150.2 1018.2 L2151.5 1018.1 L2153 1018.2 L2154.5 1018.3 L2154.7 1018.1 L2155.1 1017.8 L2156 1017.8 L2156.2 1018.3 L2157.5 1018.9 L2157.7 1018.1 L2157.9 1018.6 L2159 1018.4 L2159.3 1018.6 L2160.5 1019.3 L2160.8 1019.2 L2161.5 1018.7 L2162 1018.3 L2162.4 1018.6 L2163.5 1020 L2163.8 1021 L2165 1020.9 L2166.1 1020.7 L2166.3 1021 L2166.5 1021.2 L2168 1021.6 L2169.5 1021.9 L2169.7 1021.7 L2169.8 1022.1 L2170.1 1022.7 L2171 1023.2 L2172.5 1023.6 L2172.8 1023.4 L2173.9 1023.4 L2174 1023.4 L2174.3 1023.4 L2175.5 1023.3 L2177 1022.8 L2177.7 1022.6 L2178 1022.8 L2178.5 1022.8 L2180 1022.6 L2180.4 1022.6 L2181.5 1022 L2181.9 1022 L2183 1022.2 L2184.5 1021.6 L2186 1020.8 L2186.2 1020.2 L2187.2 1019.5 L2187.5 1019.9 L2187.9 1020.4 L2189 1020.4 L2189.4 1020.3 L2190.5 1020.3 L2191 1020.4 L2192 1020 L2192.6 1019.5 L2193.5 1019.1 L2193.9 1018.8 L2195 1018.7 L2195.5 1018.8 L2196.5 1018.3 L2197.7 1018 L2198 1017.8 L2199 1017.3 L2199.5 1017.6 L2200 1017.7 L2201 1017.4 L2201.5 1017 L2201.8 1016.7 L2202.5 1016.9 L2204 1017 L2205.5 1016.8 L2206.3 1016.3 L2207.5 1015.9 L2207.5 1033.2 L2206.3 1033.2 L2205.5 1033.2 L2204 1033.7 L2202.5 1034.1 L2201.8 1034.1 L2201.5 1033.8 L2201 1033.3 L2200 1033.3 L2199.5 1034.1 L2199 1034.4 L2198 1034.5 L2197.7 1034.7 L2196.5 1034.8 L2195.5 1034.8 L2195 1034.8 L2193.9 1035.3 L2193.5 1035.4 L2192.6 1035.3 L2192 1035.4 L2191 1035.5 L2190.5 1035.6 L2189.4 1035.6 L2189 1035.4 L2187.9 1035.7 L2187.5 1036.2 L2187.2 1036.5 L2186.2 1036.6 L2186 1036.3 L2184.5 1036.2 L2183 1036.4 L2181.9 1036.6 L2181.5 1036.7 L2180.4 1036.9 L2180 1037.3 L2178.5 1037.6 L2178 1037.2 L2177.7 1036.8 L2177 1037 L2175.5 1037.5 L2174.3 1037.7 L2174 1037.8 L2173.9 1037.8 L2172.8 1037.8 L2172.5 1037.8 L2171 1037.5 L2170.1 1037 L2169.8 1036.7 L2169.7 1036.7 L2169.5 1036.9 L2168 1037 L2166.5 1036.9 L2166.3 1036.8 L2166.1 1036.3 L2165 1035.6 L2163.8 1035.5 L2163.5 1035.9 L2162.4 1035.8 L2162 1035.7 L2161.5 1036.1 L2160.8 1036.1 L2160.5 1035.8 L2159.3 1035.5 L2159 1035.3 L2157.9 1034.8 L2157.7 1034.7 L2157.5 1035 L2156.2 1035 L2156 1034.8 L2155.1 1034.9 L2154.7 1034.9 L2154.5 1034.9 L2153 1034.8 L2151.5 1034.4 L2150.2 1034 L2150 1033.8 L2149.6 1033.9 L2148.5 1033.8 L2147.2 1034 L2147 1034 L2146.9 1034.2 L2145.5 1034.6 L2144 1034.3 L2142.6 1034 L2142.5 1034.1 L2142.4 1033.9 L2141.4 1033.5 L2141 1033.5 L2140 1033.7 L2139.6 1033.7 L2139.5 1033.7 L2138 1033.9 L2136.8 1034.4 L2136.5 1034.8 L2135.7 1034.4 L2135 1033.7 L2134.1 1033.2 L2133.6 1034 L2133.5 1034.9 L2133.4 1035.6 L2133.2 1037 L2132.9 1039.3 L2132.6 1041.8 L2132 1046.3 L2131.6 1047 L2130.5 1047 L2129.8 1046.4 L2129.5 1046 L2129 1046.1 L2127.5 1046 L2127.4 1046 L2126 1045.8 L2124.5 1045.7 L2124.3 1045.5 L2123 1045.1 L2122.2 1045.1 L2121.5 1044.7 L2121.3 1044.7 L2120.5 1045.2 L2120.3 1045.4 L2120 1045.3 L2119.4 1045.1 L2118.5 1045.4 L2117 1045.6 L2116.2 1045.3 L2115.5 1045.2 L2114.7 1045.8 L2114 1046.3 L2113.9 1045.7 L2113.1 1044.9 L2113 1044.6 L2112.5 1044.8 L2112 1045.2 L2111.5 1045.4 L2111 1045.5 L2109.5 1045.4 L2108 1045.3 L2106.6 1045.5 L2106.5 1045.5 L2105.2 1045.5 L2105 1045.5 L2103.6 1045.2 L2103.5 1045.5 L2103 1045.8 L2102 1045.9 L2100.5 1045.8 L2099.3 1045.5 L2099 1045.7 L2098.8 1045.8 L2098.4 1045.4 L2097.5 1045.3 L2096 1045.5 L2095.6 1045.2 L2095 1044.9 L2094.9 1045.1 L2094.5 1045.1 L2093.8 1044.9 L2093 1045.4 L2092.5 1045.6 L2092.4 1045.3 L2092 1045.3 L2091.5 1045.5 L2090.9 1045.8 L2090.7 1045.7 L2090 1045.4 L2089.3 1045.4 L2088.5 1045.7 L2088.1 1045.9 L2087.7 1045.8 L2087.4 1045.4 L2087 1045.2 L2086.4 1045.1 L2086.1 1045.1 L2085.5 1045.3 L2084 1045.6 L2082.5 1045.7 L2082.1 1045.6 L2081 1046.4 L2079.5 1047.7 L2078.2 1048.9 L2078 1048.9 L2077.9 1049.1 L2077.4 1048.9 L2076.6 1049.3 L2076.5 1049.5 L2075 1049.2 L2073.5 1049.1 L2072 1049.5 L2071 1049.3 L2070.5 1048.9 L2069.4 1049 L2069 1049.1 L2067.8 1049.2 L2067.5 1049.2 L2066.4 1049.1 L2066 1049.5 L2064.6 1049.4 L2064.5 1049 L2063 1049.3 L2061.5 1049.6 L2060.8 1049.6 L2060 1049.8 L2059.9 1049.9 L2059.4 1049.9 L2058.5 1049.7 L2057 1049.5 L2055.9 1049.7 L2055.5 1050.1 L2054 1050 L2052.5 1049.7 L2052.4 1049.8 L2052.3 1050.1 L2051.9 1050.4 L2051 1050.7 L2049.5 1050.7 L2048 1050.4 L2047 1050.2 L2046.5 1050.3 L2046.4 1050.6 L2045 1050.5 L2043.8 1050.3 L2043.5 1050.5 L2042 1050.8 L2040.5 1050.7 L2040 1050.7 L2039 1050.7 L2037.5 1050.7 L2036.9 1050.6 L2036 1050.4 L2035.3 1050.8 L2034.5 1050.6 L2033 1050.8 L2031.5 1051.5 L2030 1052.3 L2029.3 1052.3 L2028.5 1052.2 L2027 1052.6 L2026.7 1052.5 L2025.5 1052.5 L2024.7 1052.1 L2024.2 1052.4 L2024 1052.8 L2022.5 1052.9 L2021 1052.6 L2019.5 1052.4 L2018.2 1052.4 L2018 1052.7 L2017.6 1053.2 L2016.5 1053 L2015 1053 L2014.6 1053.4 L2014 1053.6 L2013.5 1053.7 L2012 1053.5 L2010.5 1053.4 L2009.7 1053.3 L2009 1053 L2007.5 1052.9 L2006 1052.8 L2005.4 1052.8 L2004.5 1053 L2003 1053.3 L2002.6 1053.2 L2001.5 1053.1 L2001.2 1053.3 L2000 1053.6 L1998.5 1053.2 L1997 1053 L1995.5 1053.3 L1994 1053.3 L1992.5 1052.6 L1992.1 1052.3 L1991 1052.6 L1990.9 1052.9 L1990.2 1053.4 L1990 1053.9 L1989.5 1053.9 L1988.4 1053.4 L1988 1052.9 L1986.5 1053.3 L1985.8 1054.3 L1985 1054.5 L1984 1053.9 L1983.5 1053.5 L1982 1053.1 L1981.6 1053.1 L1980.5 1053.6 L1979.8 1053.9 L1979 1054.1 L1977.5 1053.9 L1976 1053.8 L1975.9 1054 L1975.6 1053.7 L1974.5 1055.9 L1973.9 1056.7 L1973 1056.5 L1971.5 1056.5 L1971.3 1056.5 L1970 1056.7 L1968.5 1057.1 L1968.2 1057.4 L1967 1057.5 L1965.5 1057.1 L1965.4 1057.2 L1964 1057.6 L1962.5 1057.9 L1961 1057.7 L1959.5 1057.4 L1958.5 1057.2 L1958 1057 L1956.8 1057.3 L1956.5 1057.6 L1955 1057.6 L1954.3 1057.2 L1953.5 1056.9 L1952.6 1057 L1952 1057.4 L1951.1 1057.8 L1950.8 1057.9 L1950.5 1057.6 L1950 1057.6 L1949 1057.4 L1947.5 1057.7 L1947.3 1058 L1946 1058.1 L1945 1057.8 L1944.5 1057.4 L1944.4 1057.4 L1943 1057.7 L1941.5 1057.6 L1940 1057.5 L1938.5 1057.7 L1937 1057.9 L1935.5 1057.9 L1934 1058.1 L1932.5 1058.2 L1931 1058.3 L1930 1058.4 L1929.5 1058.4 L1928 1058.4 L1926.5 1058.5 L1925 1058.5 L1923.5 1058.7 L1922 1059.1 L1920.5 1059.1 L1920 1059 L1919.5 1059 L1919 1058.7 L1918.6 1058.5 L1917.5 1058.9 L1917 1059.2 L1916 1059 L1914.5 1058.8 L1913.9 1058.9 L1913 1058.9 L1911.5 1059.2 L1910 1059.7 L1909.1 1059.8 L1908.5 1059.6 L1907 1059.3 L1905.5 1059.1 L1904 1059.5 L1902.5 1059.8 L1901 1059.7 L1899.5 1059.8 L1899.1 1059.9 L1898 1060.1 L1897 1060 L1600 1061.9 L1500 1062.5 L1300 1064 L1155 1064 L1153 1064 L1150 1064 L1147 1064 L1144 1064 L1141 1064 L1138 1064 L1135 1064 L1133 1064 L1132 1064 L1129 1064 L1128 1064 L1126 1064 L1123 1064 L1120 1064 L1117 1064 L1114 1064 L1111 1064 L1108 1064 L1106 1064 L1105 1064 L1102 1064 L1099 1064 L1096 1064 L1093 1064 L1090 1064 L1087 1064 L1084 1064 L1081 1064 L1078 1064 L1075 1064 L1072 1064 L1069 1064 L1066 1064 L1065 1064 L1063 1064 L1060 1064 L1057 1064 L1054 1064 L1051 1064 L1048 1064 L1045 1064 L1042 1064 L1039 1064 L1036 1064 L1035 1064 L1033 1064 L1030 1064 L1028.5 1064 L1028 1064 L968 1064 L966 1064 L899 1064 L898 1064 L860 1064 L560 1064 L208 1064 Z" fill="url(#g4)"/>
<path d="M1300 1064 L1500 1062 L1600 1061.2 L1897 1059 L1898 1059 L1899.1 1058.9 L1899.5 1058.8 L1901 1058.4 L1902.5 1058.4 L1904 1058.3 L1905.5 1058.9 L1907 1059.1 L1908.5 1058.7 L1909.1 1058.6 L1910 1058.8 L1911.5 1059 L1913 1058.9 L1913.9 1058.8 L1914.5 1058.3 L1916 1058.5 L1917 1058.4 L1917.5 1058.2 L1918.6 1058.3 L1919 1058.4 L1919.5 1058.7 L1920 1058.5 L1920.5 1058.5 L1922 1057.5 L1923.5 1056.8 L1925 1056.7 L1926.5 1056.9 L1928 1057.1 L1929.5 1056.5 L1930 1055.7 L1931 1055.4 L1932.5 1055.1 L1934 1054.7 L1935.5 1054.4 L1937 1053.9 L1938.5 1053.4 L1940 1053.1 L1941.5 1053.1 L1943 1053.2 L1944.4 1052.8 L1944.5 1052 L1945 1052 L1946 1048.9 L1947.3 1045.7 L1947.5 1045.4 L1949 1041.3 L1950 1038.8 L1950.5 1039.5 L1950.8 1040.5 L1951.1 1041.9 L1952 1044.4 L1952.6 1045.6 L1953.5 1045.3 L1954.3 1044.8 L1955 1044.8 L1956.5 1045.3 L1956.8 1045.7 L1958 1046.2 L1958.5 1046.1 L1959.5 1045.8 L1961 1046 L1962.5 1046.5 L1964 1047.1 L1965.4 1047.2 L1965.5 1046.8 L1967 1046.8 L1968.2 1046.9 L1968.5 1046.9 L1970 1047 L1971.3 1047.3 L1971.5 1047.5 L1973 1046.9 L1973.9 1046.5 L1974.5 1046.1 L1975.6 1045.6 L1975.9 1046.6 L1976 1046 L1977.5 1045.9 L1979 1046.9 L1979.8 1047.1 L1980.5 1046.5 L1981.6 1046.1 L1982 1046.2 L1983.5 1046.8 L1984 1047.2 L1985 1047.9 L1985.8 1048.2 L1986.5 1047.9 L1988 1046 L1988.4 1045.8 L1989.5 1045.1 L1990 1044.6 L1990.2 1043.8 L1990.9 1043.1 L1991 1043.5 L1992.1 1043.8 L1992.5 1043.8 L1994 1044.5 L1995.5 1044.8 L1997 1044.1 L1998.5 1043.7 L2000 1044.2 L2001.2 1044.8 L2001.5 1044.8 L2002.6 1045.1 L2003 1046.2 L2004.5 1046.6 L2005.4 1045.5 L2006 1045 L2007.5 1045.7 L2009 1046.7 L2009.7 1046.5 L2010.5 1046.7 L2012 1045.6 L2013.5 1044.9 L2014 1045.3 L2014.6 1045.5 L2015 1045.2 L2016.5 1044.8 L2017.6 1044.5 L2018 1044.1 L2018.2 1043.9 L2019.5 1043.6 L2021 1043.4 L2022.5 1043.3 L2024 1042.8 L2024.2 1042.7 L2024.7 1042.6 L2025.5 1042.4 L2026.7 1042.2 L2027 1042.3 L2028.5 1042.2 L2029.3 1042.2 L2030 1042.7 L2031.5 1043.2 L2033 1043.3 L2034.5 1043.7 L2035.3 1044.8 L2036 1044.4 L2036.9 1044.5 L2037.5 1045 L2039 1045.4 L2040 1045 L2040.5 1044.7 L2042 1044.6 L2043.5 1044.2 L2043.8 1044.1 L2045 1044.5 L2046.4 1044 L2046.5 1043.1 L2047 1043.3 L2048 1043.7 L2049.5 1043.8 L2051 1043.9 L2051.9 1043.8 L2052.3 1043.7 L2052.4 1043.5 L2052.5 1043.5 L2054 1043.6 L2055.5 1043.2 L2055.9 1043 L2057 1042.7 L2058.5 1042.8 L2059.4 1043.3 L2059.9 1043.2 L2060 1042.6 L2060.8 1043.1 L2061.5 1043.4 L2063 1042.6 L2064.5 1041.8 L2064.6 1042 L2066 1041.5 L2066.4 1041.5 L2067.5 1041.8 L2067.8 1041.8 L2069 1041.3 L2069.4 1041.3 L2070.5 1040.7 L2071 1040.4 L2072 1040.1 L2073.5 1039.8 L2075 1039.7 L2076.5 1039.2 L2076.6 1038.9 L2077.4 1038.7 L2077.9 1038.8 L2078 1038.4 L2078.2 1038.7 L2079.5 1039 L2081 1038.9 L2082.1 1039.1 L2082.5 1039 L2084 1038.3 L2085.5 1037.6 L2086.1 1037.6 L2086.4 1038 L2087 1038.5 L2087.4 1038.3 L2087.7 1037.7 L2088.1 1038 L2088.5 1038.6 L2089.3 1038.7 L2090 1038 L2090.7 1037.2 L2090.9 1036.8 L2091.5 1036.7 L2092 1036.6 L2092.4 1036.6 L2092.5 1036.5 L2093 1036.5 L2093.8 1036.9 L2094.5 1037.3 L2094.9 1037.1 L2095 1037.3 L2095.6 1037.6 L2096 1037.3 L2097.5 1036.6 L2098.4 1036.3 L2098.8 1036.2 L2099 1036.4 L2099.3 1036.8 L2100.5 1037.1 L2102 1037.6 L2103 1037.8 L2103.5 1037.2 L2103.6 1036.7 L2105 1036.6 L2105.2 1036.7 L2106.5 1036.7 L2106.6 1036.6 L2108 1036.6 L2109.5 1036.7 L2111 1037 L2111.5 1037.4 L2112 1037.2 L2112.5 1036.4 L2113 1035.6 L2113.1 1035.5 L2113.9 1035.7 L2114 1035.5 L2114.7 1035.4 L2115.5 1035.7 L2116.2 1036.3 L2117 1036 L2118.5 1035.1 L2119.4 1033.9 L2120 1032.8 L2120.3 1032.3 L2120.5 1032.3 L2121.3 1031.5 L2121.5 1030.9 L2122.2 1031.2 L2123 1031 L2124.3 1030.5 L2124.5 1030.2 L2126 1030.6 L2127.4 1030.8 L2127.5 1030.8 L2129 1030.4 L2129.5 1030.3 L2129.8 1030.6 L2130.5 1030.3 L2131.6 1030.3 L2132 1027.9 L2132.6 1024.1 L2132.9 1021.9 L2133.2 1019.4 L2133.4 1017.9 L2133.5 1017.5 L2133.6 1017.4 L2134.1 1017.3 L2135 1016.8 L2135.7 1016.7 L2136.5 1016.8 L2136.8 1017 L2138 1016.9 L2139.5 1016.8 L2139.6 1016.6 L2140 1017.2 L2141 1016.8 L2141.4 1016.4 L2142.4 1016.5 L2142.5 1016.8 L2142.6 1016.8 L2144 1016.7 L2145.5 1016.2 L2146.9 1015.9 L2147 1016.3 L2147.2 1016.7 L2148.5 1017.2 L2149.6 1018.1 L2150 1018.5 L2150.2 1018.2 L2151.5 1018.1 L2153 1018.2 L2154.5 1018.3 L2154.7 1018.1 L2155.1 1017.8 L2156 1017.8 L2156.2 1018.3 L2157.5 1018.9 L2157.7 1018.1 L2157.9 1018.6 L2159 1018.4 L2159.3 1018.6 L2160.5 1019.3 L2160.8 1019.2 L2161.5 1018.7 L2162 1018.3 L2162.4 1018.6 L2163.5 1020 L2163.8 1021 L2165 1020.9 L2166.1 1020.7 L2166.3 1021 L2166.5 1021.2 L2168 1021.6 L2169.5 1021.9 L2169.7 1021.7 L2169.8 1022.1 L2170.1 1022.7 L2171 1023.2 L2172.5 1023.6 L2172.8 1023.4 L2173.9 1023.4 L2174 1023.4 L2174.3 1023.4 L2175.5 1023.3 L2177 1022.8 L2177.7 1022.6 L2178 1022.8 L2178.5 1022.8 L2180 1022.6 L2180.4 1022.6 L2181.5 1022 L2181.9 1022 L2183 1022.2 L2184.5 1021.6 L2186 1020.8 L2186.2 1020.2 L2187.2 1019.5 L2187.5 1019.9 L2187.9 1020.4 L2189 1020.4 L2189.4 1020.3 L2190.5 1020.3 L2191 1020.4 L2192 1020 L2192.6 1019.5 L2193.5 1019.1 L2193.9 1018.8 L2195 1018.7 L2195.5 1018.8 L2196.5 1018.3 L2197.7 1018 L2198 1017.8 L2199 1017.3 L2199.5 1017.6 L2200 1017.7 L2201 1017.4 L2201.5 1017 L2201.8 1016.7 L2202.5 1016.9 L2204 1017 L2205.5 1016.8 L2206.3 1016.3 L2207.5 1015.9" fill="none" stroke="#ec5429" stroke-width="2.6" stroke-linejoin="round"/>
<path d="M208 1064 L560 1064 L860 1064 L898 1064 L899 1064 L966 1064 L968 1064 L1028 1064 L1028.5 1064 L1030 1064 L1033 1064 L1035 1064 L1036 1064 L1039 1064 L1042 1064 L1045 1064 L1048 1064 L1051 1064 L1054 1064 L1057 1064 L1060 1064 L1063 1064 L1065 1064 L1066 1064 L1069 1064 L1072 1064 L1075 1064 L1078 1064 L1081 1064 L1084 1064 L1087 1064 L1090 1064 L1093 1064 L1096 1064 L1099 1064 L1102 1064 L1105 1064 L1106 1064 L1108 1064 L1111 1064 L1114 1064 L1117 1064 L1120 1064 L1123 1064 L1126 1064 L1128 1064 L1129 1064 L1132 1064 L1133 1064 L1135 1064 L1138 1064 L1141 1064 L1144 1064 L1147 1064 L1150 1064 L1153 1064 L1155 1064 L1300 1064 L1500 1062.5 L1600 1061.9 L1897 1060 L1898 1060.1 L1899.1 1059.9 L1899.5 1059.8 L1901 1059.7 L1902.5 1059.8 L1904 1059.5 L1905.5 1059.1 L1907 1059.3 L1908.5 1059.6 L1909.1 1059.8 L1910 1059.7 L1911.5 1059.2 L1913 1058.9 L1913.9 1058.9 L1914.5 1058.8 L1916 1059 L1917 1059.2 L1917.5 1058.9 L1918.6 1058.5 L1919 1058.7 L1919.5 1059 L1920 1059 L1920.5 1059.1 L1922 1059.1 L1923.5 1058.7 L1925 1058.5 L1926.5 1058.5 L1928 1058.4 L1929.5 1058.4 L1930 1058.4 L1931 1058.3 L1932.5 1058.2 L1934 1058.1 L1935.5 1057.9 L1937 1057.9 L1938.5 1057.7 L1940 1057.5 L1941.5 1057.6 L1943 1057.7 L1944.4 1057.4 L1944.5 1057.4 L1945 1057.8 L1946 1058.1 L1947.3 1058 L1947.5 1057.7 L1949 1057.4 L1950 1057.6 L1950.5 1057.6 L1950.8 1057.9 L1951.1 1057.8 L1952 1057.4 L1952.6 1057 L1953.5 1056.9 L1954.3 1057.2 L1955 1057.6 L1956.5 1057.6 L1956.8 1057.3 L1958 1057 L1958.5 1057.2 L1959.5 1057.4 L1961 1057.7 L1962.5 1057.9 L1964 1057.6 L1965.4 1057.2 L1965.5 1057.1 L1967 1057.5 L1968.2 1057.4 L1968.5 1057.1 L1970 1056.7 L1971.3 1056.5 L1971.5 1056.5 L1973 1056.5 L1973.9 1056.7 L1974.5 1055.9 L1975.6 1053.7 L1975.9 1054 L1976 1053.8 L1977.5 1053.9 L1979 1054.1 L1979.8 1053.9 L1980.5 1053.6 L1981.6 1053.1 L1982 1053.1 L1983.5 1053.5 L1984 1053.9 L1985 1054.5 L1985.8 1054.3 L1986.5 1053.3 L1988 1052.9 L1988.4 1053.4 L1989.5 1053.9 L1990 1053.9 L1990.2 1053.4 L1990.9 1052.9 L1991 1052.6 L1992.1 1052.3 L1992.5 1052.6 L1994 1053.3 L1995.5 1053.3 L1997 1053 L1998.5 1053.2 L2000 1053.6 L2001.2 1053.3 L2001.5 1053.1 L2002.6 1053.2 L2003 1053.3 L2004.5 1053 L2005.4 1052.8 L2006 1052.8 L2007.5 1052.9 L2009 1053 L2009.7 1053.3 L2010.5 1053.4 L2012 1053.5 L2013.5 1053.7 L2014 1053.6 L2014.6 1053.4 L2015 1053 L2016.5 1053 L2017.6 1053.2 L2018 1052.7 L2018.2 1052.4 L2019.5 1052.4 L2021 1052.6 L2022.5 1052.9 L2024 1052.8 L2024.2 1052.4 L2024.7 1052.1 L2025.5 1052.5 L2026.7 1052.5 L2027 1052.6 L2028.5 1052.2 L2029.3 1052.3 L2030 1052.3 L2031.5 1051.5 L2033 1050.8 L2034.5 1050.6 L2035.3 1050.8 L2036 1050.4 L2036.9 1050.6 L2037.5 1050.7 L2039 1050.7 L2040 1050.7 L2040.5 1050.7 L2042 1050.8 L2043.5 1050.5 L2043.8 1050.3 L2045 1050.5 L2046.4 1050.6 L2046.5 1050.3 L2047 1050.2 L2048 1050.4 L2049.5 1050.7 L2051 1050.7 L2051.9 1050.4 L2052.3 1050.1 L2052.4 1049.8 L2052.5 1049.7 L2054 1050 L2055.5 1050.1 L2055.9 1049.7 L2057 1049.5 L2058.5 1049.7 L2059.4 1049.9 L2059.9 1049.9 L2060 1049.8 L2060.8 1049.6 L2061.5 1049.6 L2063 1049.3 L2064.5 1049 L2064.6 1049.4 L2066 1049.5 L2066.4 1049.1 L2067.5 1049.2 L2067.8 1049.2 L2069 1049.1 L2069.4 1049 L2070.5 1048.9 L2071 1049.3 L2072 1049.5 L2073.5 1049.1 L2075 1049.2 L2076.5 1049.5 L2076.6 1049.3 L2077.4 1048.9 L2077.9 1049.1 L2078 1048.9 L2078.2 1048.9 L2079.5 1047.7 L2081 1046.4 L2082.1 1045.6 L2082.5 1045.7 L2084 1045.6 L2085.5 1045.3 L2086.1 1045.1 L2086.4 1045.1 L2087 1045.2 L2087.4 1045.4 L2087.7 1045.8 L2088.1 1045.9 L2088.5 1045.7 L2089.3 1045.4 L2090 1045.4 L2090.7 1045.7 L2090.9 1045.8 L2091.5 1045.5 L2092 1045.3 L2092.4 1045.3 L2092.5 1045.6 L2093 1045.4 L2093.8 1044.9 L2094.5 1045.1 L2094.9 1045.1 L2095 1044.9 L2095.6 1045.2 L2096 1045.5 L2097.5 1045.3 L2098.4 1045.4 L2098.8 1045.8 L2099 1045.7 L2099.3 1045.5 L2100.5 1045.8 L2102 1045.9 L2103 1045.8 L2103.5 1045.5 L2103.6 1045.2 L2105 1045.5 L2105.2 1045.5 L2106.5 1045.5 L2106.6 1045.5 L2108 1045.3 L2109.5 1045.4 L2111 1045.5 L2111.5 1045.4 L2112 1045.2 L2112.5 1044.8 L2113 1044.6 L2113.1 1044.9 L2113.9 1045.7 L2114 1046.3 L2114.7 1045.8 L2115.5 1045.2 L2116.2 1045.3 L2117 1045.6 L2118.5 1045.4 L2119.4 1045.1 L2120 1045.3 L2120.3 1045.4 L2120.5 1045.2 L2121.3 1044.7 L2121.5 1044.7 L2122.2 1045.1 L2123 1045.1 L2124.3 1045.5 L2124.5 1045.7 L2126 1045.8 L2127.4 1046 L2127.5 1046 L2129 1046.1 L2129.5 1046 L2129.8 1046.4 L2130.5 1047 L2131.6 1047 L2132 1046.3 L2132.6 1041.8 L2132.9 1039.3 L2133.2 1037 L2133.4 1035.6 L2133.5 1034.9 L2133.6 1034 L2134.1 1033.2 L2135 1033.7 L2135.7 1034.4 L2136.5 1034.8 L2136.8 1034.4 L2138 1033.9 L2139.5 1033.7 L2139.6 1033.7 L2140 1033.7 L2141 1033.5 L2141.4 1033.5 L2142.4 1033.9 L2142.5 1034.1 L2142.6 1034 L2144 1034.3 L2145.5 1034.6 L2146.9 1034.2 L2147 1034 L2147.2 1034 L2148.5 1033.8 L2149.6 1033.9 L2150 1033.8 L2150.2 1034 L2151.5 1034.4 L2153 1034.8 L2154.5 1034.9 L2154.7 1034.9 L2155.1 1034.9 L2156 1034.8 L2156.2 1035 L2157.5 1035 L2157.7 1034.7 L2157.9 1034.8 L2159 1035.3 L2159.3 1035.5 L2160.5 1035.8 L2160.8 1036.1 L2161.5 1036.1 L2162 1035.7 L2162.4 1035.8 L2163.5 1035.9 L2163.8 1035.5 L2165 1035.6 L2166.1 1036.3 L2166.3 1036.8 L2166.5 1036.9 L2168 1037 L2169.5 1036.9 L2169.7 1036.7 L2169.8 1036.7 L2170.1 1037 L2171 1037.5 L2172.5 1037.8 L2172.8 1037.8 L2173.9 1037.8 L2174 1037.8 L2174.3 1037.7 L2175.5 1037.5 L2177 1037 L2177.7 1036.8 L2178 1037.2 L2178.5 1037.6 L2180 1037.3 L2180.4 1036.9 L2181.5 1036.7 L2181.9 1036.6 L2183 1036.4 L2184.5 1036.2 L2186 1036.3 L2186.2 1036.6 L2187.2 1036.5 L2187.5 1036.2 L2187.9 1035.7 L2189 1035.4 L2189.4 1035.6 L2190.5 1035.6 L2191 1035.5 L2192 1035.4 L2192.6 1035.3 L2193.5 1035.4 L2193.9 1035.3 L2195 1034.8 L2195.5 1034.8 L2196.5 1034.8 L2197.7 1034.7 L2198 1034.5 L2199 1034.4 L2199.5 1034.1 L2200 1033.3 L2201 1033.3 L2201.5 1033.8 L2201.8 1034.1 L2202.5 1034.1 L2204 1033.7 L2205.5 1033.2 L2206.3 1033.2 L2207.5 1033.2 L2207.5 1050.6 L2206.3 1050.9 L2205.5 1051.1 L2204 1051.2 L2202.5 1051.1 L2201.8 1050.9 L2201.5 1050.7 L2201 1050.8 L2200 1050.8 L2199.5 1050.5 L2199 1050.4 L2198 1050.7 L2197.7 1050.6 L2196.5 1050.4 L2195.5 1050.8 L2195 1050.6 L2193.9 1050.5 L2193.5 1051 L2192.6 1051 L2192 1050.8 L2191 1051 L2190.5 1051.3 L2189.4 1051.5 L2189 1051.3 L2187.9 1050.9 L2187.5 1050.8 L2187.2 1051 L2186.2 1051 L2186 1050.9 L2184.5 1051.1 L2183 1051.3 L2181.9 1051.1 L2181.5 1051.1 L2180.4 1051.6 L2180 1051.7 L2178.5 1051.2 L2178 1051 L2177.7 1051.2 L2177 1051.5 L2175.5 1051.2 L2174.3 1051.2 L2174 1051.4 L2173.9 1051.5 L2172.8 1051.3 L2172.5 1051.8 L2171 1051.3 L2170.1 1050.7 L2169.8 1050.9 L2169.7 1051.2 L2169.5 1050.8 L2168 1050.4 L2166.5 1050.2 L2166.3 1050.1 L2166.1 1050.2 L2165 1050.1 L2163.8 1049.8 L2163.5 1049.6 L2162.4 1049.3 L2162 1049.2 L2161.5 1049 L2160.8 1048.6 L2160.5 1048.7 L2159.3 1048.9 L2159 1048.8 L2157.9 1048.3 L2157.7 1047.9 L2157.5 1047.8 L2156.2 1047.7 L2156 1047.9 L2155.1 1048.1 L2154.7 1048.2 L2154.5 1047.8 L2153 1047.3 L2151.5 1047 L2150.2 1047.1 L2150 1046.9 L2149.6 1046.6 L2148.5 1046.4 L2147.2 1046.3 L2147 1046.2 L2146.9 1046.1 L2145.5 1045.7 L2144 1045.3 L2142.6 1045.3 L2142.5 1045.4 L2142.4 1045.7 L2141.4 1045.2 L2141 1044.9 L2140 1044.7 L2139.6 1044.6 L2139.5 1044.7 L2138 1044.5 L2136.8 1044.3 L2136.5 1044.2 L2135.7 1044 L2135 1043.9 L2134.1 1043.6 L2133.6 1043.8 L2133.5 1044.7 L2133.4 1045.1 L2133.2 1047.2 L2132.9 1050.2 L2132.6 1052.2 L2132 1056.7 L2131.6 1057.1 L2130.5 1057 L2129.8 1056.8 L2129.5 1056.7 L2129 1056.6 L2127.5 1056.5 L2127.4 1056.3 L2126 1055.9 L2124.5 1055.9 L2124.3 1056.3 L2123 1056.4 L2122.2 1056.4 L2121.5 1056.5 L2121.3 1056.5 L2120.5 1056.6 L2120.3 1056.5 L2120 1056.3 L2119.4 1056.3 L2118.5 1056.5 L2117 1056.4 L2116.2 1056 L2115.5 1055.8 L2114.7 1055.8 L2114 1055.6 L2113.9 1055.9 L2113.1 1056.5 L2113 1056.6 L2112.5 1056.3 L2112 1056.3 L2111.5 1056.4 L2111 1056.4 L2109.5 1056.2 L2108 1056.1 L2106.6 1056.4 L2106.5 1056.7 L2105.2 1056.6 L2105 1056.3 L2103.6 1056.3 L2103.5 1056.5 L2103 1056.5 L2102 1056.2 L2100.5 1056.1 L2099.3 1056.5 L2099 1056.6 L2098.8 1056.2 L2098.4 1055.9 L2097.5 1055.9 L2096 1056.3 L2095.6 1056.6 L2095 1056.5 L2094.9 1056.2 L2094.5 1056.1 L2093.8 1055.8 L2093 1055.8 L2092.5 1055.9 L2092.4 1055.8 L2092 1055.8 L2091.5 1055.7 L2090.9 1055.8 L2090.7 1056.1 L2090 1056.2 L2089.3 1056.1 L2088.5 1056.2 L2088.1 1056.1 L2087.7 1055.8 L2087.4 1055.9 L2087 1056 L2086.4 1055.9 L2086.1 1056.2 L2085.5 1056.2 L2084 1056.2 L2082.5 1056.3 L2082.1 1056.2 L2081 1056.1 L2079.5 1056.3 L2078.2 1056 L2078 1055.5 L2077.9 1055.5 L2077.4 1055.8 L2076.6 1056.6 L2076.5 1056.9 L2075 1056.9 L2073.5 1056.5 L2072 1056.6 L2071 1057.1 L2070.5 1057.2 L2069.4 1057.1 L2069 1056.9 L2067.8 1056.9 L2067.5 1057.1 L2066.4 1057.1 L2066 1056.6 L2064.6 1056.4 L2064.5 1056.5 L2063 1056.7 L2061.5 1056.6 L2060.8 1056.5 L2060 1056.3 L2059.9 1056.2 L2059.4 1056.4 L2058.5 1056.5 L2057 1056.7 L2055.9 1056.8 L2055.5 1056.7 L2054 1057.1 L2052.5 1057.6 L2052.4 1057.4 L2052.3 1057 L2051.9 1057.3 L2051 1057.7 L2049.5 1057.7 L2048 1057.5 L2047 1057.2 L2046.5 1057.6 L2046.4 1057.8 L2045 1057.4 L2043.8 1057.5 L2043.5 1057.9 L2042 1058 L2040.5 1057.8 L2040 1057.6 L2039 1057.5 L2037.5 1057.7 L2036.9 1057.7 L2036 1057.8 L2035.3 1058 L2034.5 1058.4 L2033 1058.5 L2031.5 1058.8 L2030 1058.9 L2029.3 1058.9 L2028.5 1059.1 L2027 1059.5 L2026.7 1060.1 L2025.5 1059.7 L2024.7 1059.6 L2024.2 1059.9 L2024 1059.8 L2022.5 1059.6 L2021 1059.7 L2019.5 1059.9 L2018.2 1060 L2018 1059.9 L2017.6 1060.1 L2016.5 1060.6 L2015 1060.7 L2014.6 1060.3 L2014 1060.3 L2013.5 1060.7 L2012 1060.8 L2010.5 1060.5 L2009.7 1060.3 L2009 1060.1 L2007.5 1060 L2006 1060.2 L2005.4 1060.1 L2004.5 1059.9 L2003 1059.8 L2002.6 1059.5 L2001.5 1059.6 L2001.2 1060.2 L2000 1060.2 L1998.5 1059.8 L1997 1060.1 L1995.5 1060.2 L1994 1059.8 L1992.5 1059.6 L1992.1 1059.8 L1991 1059.8 L1990.9 1059.6 L1990.2 1059.6 L1990 1059.8 L1989.5 1059.7 L1988.4 1059.8 L1988 1060.3 L1986.5 1060.3 L1985.8 1060.1 L1985 1060.1 L1984 1059.9 L1983.5 1059.9 L1982 1059.7 L1981.6 1059.6 L1980.5 1059.7 L1979.8 1059.9 L1979 1059.8 L1977.5 1059.9 L1976 1060.3 L1975.9 1060.3 L1975.6 1059.9 L1974.5 1059.5 L1973.9 1059.6 L1973 1060.2 L1971.5 1060.6 L1971.3 1060.7 L1970 1060.6 L1968.5 1060.2 L1968.2 1059.7 L1967 1059.6 L1965.5 1059.8 L1965.4 1060.1 L1964 1060.3 L1962.5 1060.2 L1961 1059.8 L1959.5 1059.6 L1958.5 1059.7 L1958 1059.7 L1956.8 1059.5 L1956.5 1059.5 L1955 1059.5 L1954.3 1059.6 L1953.5 1059.9 L1952.6 1059.8 L1952 1059.6 L1951.1 1059.8 L1950.8 1060 L1950.5 1060.1 L1950 1059.7 L1949 1060.1 L1947.5 1060 L1947.3 1059.9 L1946 1059.8 L1945 1060 L1944.5 1060.3 L1944.4 1060.2 L1943 1060 L1941.5 1060 L1940 1060.1 L1938.5 1059.9 L1937 1060 L1935.5 1060.4 L1934 1060.1 L1932.5 1059.7 L1931 1060 L1930 1060.4 L1929.5 1060.6 L1928 1060.7 L1926.5 1060.8 L1925 1060.8 L1923.5 1060.9 L1922 1060.8 L1920.5 1060.5 L1920 1060.2 L1919.5 1060 L1919 1060.3 L1918.6 1060.8 L1917.5 1061 L1917 1060.5 L1916 1060.4 L1914.5 1060.6 L1913.9 1060.7 L1913 1060.7 L1911.5 1060.8 L1910 1060.6 L1909.1 1060.4 L1908.5 1060.3 L1907 1060.5 L1905.5 1060.8 L1904 1061.4 L1902.5 1061.6 L1901 1061.3 L1899.5 1061 L1899.1 1060.9 L1898 1060.9 L1897 1061 L1600 1063 L1500 1063.3 L1300 1064 L1155 1064 L1153 1064 L1150 1064 L1147 1064 L1144 1064 L1141 1064 L1138 1064 L1135 1064 L1133 1064 L1132 1064 L1129 1064 L1128 1064 L1126 1064 L1123 1064 L1120 1064 L1117 1064 L1114 1064 L1111 1064 L1108 1064 L1106 1064 L1105 1064 L1102 1064 L1099 1064 L1096 1064 L1093 1064 L1090 1064 L1087 1064 L1084 1064 L1081 1064 L1078 1064 L1075 1064 L1072 1064 L1069 1064 L1066 1064 L1065 1064 L1063 1064 L1060 1064 L1057 1064 L1054 1064 L1051 1064 L1048 1064 L1045 1064 L1042 1064 L1039 1064 L1036 1064 L1035 1064 L1033 1064 L1030 1064 L1028.5 1064 L1028 1064 L968 1064 L966 1064 L899 1064 L898 1064 L860 1064 L560 1064 L208 1064 Z" fill="url(#g3)"/>
<path d="M1300 1064 L1500 1062.5 L1600 1061.9 L1897 1060 L1898 1060.1 L1899.1 1059.9 L1899.5 1059.8 L1901 1059.7 L1902.5 1059.8 L1904 1059.5 L1905.5 1059.1 L1907 1059.3 L1908.5 1059.6 L1909.1 1059.8 L1910 1059.7 L1911.5 1059.2 L1913 1058.9 L1913.9 1058.9 L1914.5 1058.8 L1916 1059 L1917 1059.2 L1917.5 1058.9 L1918.6 1058.5 L1919 1058.7 L1919.5 1059 L1920 1059 L1920.5 1059.1 L1922 1059.1 L1923.5 1058.7 L1925 1058.5 L1926.5 1058.5 L1928 1058.4 L1929.5 1058.4 L1930 1058.4 L1931 1058.3 L1932.5 1058.2 L1934 1058.1 L1935.5 1057.9 L1937 1057.9 L1938.5 1057.7 L1940 1057.5 L1941.5 1057.6 L1943 1057.7 L1944.4 1057.4 L1944.5 1057.4 L1945 1057.8 L1946 1058.1 L1947.3 1058 L1947.5 1057.7 L1949 1057.4 L1950 1057.6 L1950.5 1057.6 L1950.8 1057.9 L1951.1 1057.8 L1952 1057.4 L1952.6 1057 L1953.5 1056.9 L1954.3 1057.2 L1955 1057.6 L1956.5 1057.6 L1956.8 1057.3 L1958 1057 L1958.5 1057.2 L1959.5 1057.4 L1961 1057.7 L1962.5 1057.9 L1964 1057.6 L1965.4 1057.2 L1965.5 1057.1 L1967 1057.5 L1968.2 1057.4 L1968.5 1057.1 L1970 1056.7 L1971.3 1056.5 L1971.5 1056.5 L1973 1056.5 L1973.9 1056.7 L1974.5 1055.9 L1975.6 1053.7 L1975.9 1054 L1976 1053.8 L1977.5 1053.9 L1979 1054.1 L1979.8 1053.9 L1980.5 1053.6 L1981.6 1053.1 L1982 1053.1 L1983.5 1053.5 L1984 1053.9 L1985 1054.5 L1985.8 1054.3 L1986.5 1053.3 L1988 1052.9 L1988.4 1053.4 L1989.5 1053.9 L1990 1053.9 L1990.2 1053.4 L1990.9 1052.9 L1991 1052.6 L1992.1 1052.3 L1992.5 1052.6 L1994 1053.3 L1995.5 1053.3 L1997 1053 L1998.5 1053.2 L2000 1053.6 L2001.2 1053.3 L2001.5 1053.1 L2002.6 1053.2 L2003 1053.3 L2004.5 1053 L2005.4 1052.8 L2006 1052.8 L2007.5 1052.9 L2009 1053 L2009.7 1053.3 L2010.5 1053.4 L2012 1053.5 L2013.5 1053.7 L2014 1053.6 L2014.6 1053.4 L2015 1053 L2016.5 1053 L2017.6 1053.2 L2018 1052.7 L2018.2 1052.4 L2019.5 1052.4 L2021 1052.6 L2022.5 1052.9 L2024 1052.8 L2024.2 1052.4 L2024.7 1052.1 L2025.5 1052.5 L2026.7 1052.5 L2027 1052.6 L2028.5 1052.2 L2029.3 1052.3 L2030 1052.3 L2031.5 1051.5 L2033 1050.8 L2034.5 1050.6 L2035.3 1050.8 L2036 1050.4 L2036.9 1050.6 L2037.5 1050.7 L2039 1050.7 L2040 1050.7 L2040.5 1050.7 L2042 1050.8 L2043.5 1050.5 L2043.8 1050.3 L2045 1050.5 L2046.4 1050.6 L2046.5 1050.3 L2047 1050.2 L2048 1050.4 L2049.5 1050.7 L2051 1050.7 L2051.9 1050.4 L2052.3 1050.1 L2052.4 1049.8 L2052.5 1049.7 L2054 1050 L2055.5 1050.1 L2055.9 1049.7 L2057 1049.5 L2058.5 1049.7 L2059.4 1049.9 L2059.9 1049.9 L2060 1049.8 L2060.8 1049.6 L2061.5 1049.6 L2063 1049.3 L2064.5 1049 L2064.6 1049.4 L2066 1049.5 L2066.4 1049.1 L2067.5 1049.2 L2067.8 1049.2 L2069 1049.1 L2069.4 1049 L2070.5 1048.9 L2071 1049.3 L2072 1049.5 L2073.5 1049.1 L2075 1049.2 L2076.5 1049.5 L2076.6 1049.3 L2077.4 1048.9 L2077.9 1049.1 L2078 1048.9 L2078.2 1048.9 L2079.5 1047.7 L2081 1046.4 L2082.1 1045.6 L2082.5 1045.7 L2084 1045.6 L2085.5 1045.3 L2086.1 1045.1 L2086.4 1045.1 L2087 1045.2 L2087.4 1045.4 L2087.7 1045.8 L2088.1 1045.9 L2088.5 1045.7 L2089.3 1045.4 L2090 1045.4 L2090.7 1045.7 L2090.9 1045.8 L2091.5 1045.5 L2092 1045.3 L2092.4 1045.3 L2092.5 1045.6 L2093 1045.4 L2093.8 1044.9 L2094.5 1045.1 L2094.9 1045.1 L2095 1044.9 L2095.6 1045.2 L2096 1045.5 L2097.5 1045.3 L2098.4 1045.4 L2098.8 1045.8 L2099 1045.7 L2099.3 1045.5 L2100.5 1045.8 L2102 1045.9 L2103 1045.8 L2103.5 1045.5 L2103.6 1045.2 L2105 1045.5 L2105.2 1045.5 L2106.5 1045.5 L2106.6 1045.5 L2108 1045.3 L2109.5 1045.4 L2111 1045.5 L2111.5 1045.4 L2112 1045.2 L2112.5 1044.8 L2113 1044.6 L2113.1 1044.9 L2113.9 1045.7 L2114 1046.3 L2114.7 1045.8 L2115.5 1045.2 L2116.2 1045.3 L2117 1045.6 L2118.5 1045.4 L2119.4 1045.1 L2120 1045.3 L2120.3 1045.4 L2120.5 1045.2 L2121.3 1044.7 L2121.5 1044.7 L2122.2 1045.1 L2123 1045.1 L2124.3 1045.5 L2124.5 1045.7 L2126 1045.8 L2127.4 1046 L2127.5 1046 L2129 1046.1 L2129.5 1046 L2129.8 1046.4 L2130.5 1047 L2131.6 1047 L2132 1046.3 L2132.6 1041.8 L2132.9 1039.3 L2133.2 1037 L2133.4 1035.6 L2133.5 1034.9 L2133.6 1034 L2134.1 1033.2 L2135 1033.7 L2135.7 1034.4 L2136.5 1034.8 L2136.8 1034.4 L2138 1033.9 L2139.5 1033.7 L2139.6 1033.7 L2140 1033.7 L2141 1033.5 L2141.4 1033.5 L2142.4 1033.9 L2142.5 1034.1 L2142.6 1034 L2144 1034.3 L2145.5 1034.6 L2146.9 1034.2 L2147 1034 L2147.2 1034 L2148.5 1033.8 L2149.6 1033.9 L2150 1033.8 L2150.2 1034 L2151.5 1034.4 L2153 1034.8 L2154.5 1034.9 L2154.7 1034.9 L2155.1 1034.9 L2156 1034.8 L2156.2 1035 L2157.5 1035 L2157.7 1034.7 L2157.9 1034.8 L2159 1035.3 L2159.3 1035.5 L2160.5 1035.8 L2160.8 1036.1 L2161.5 1036.1 L2162 1035.7 L2162.4 1035.8 L2163.5 1035.9 L2163.8 1035.5 L2165 1035.6 L2166.1 1036.3 L2166.3 1036.8 L2166.5 1036.9 L2168 1037 L2169.5 1036.9 L2169.7 1036.7 L2169.8 1036.7 L2170.1 1037 L2171 1037.5 L2172.5 1037.8 L2172.8 1037.8 L2173.9 1037.8 L2174 1037.8 L2174.3 1037.7 L2175.5 1037.5 L2177 1037 L2177.7 1036.8 L2178 1037.2 L2178.5 1037.6 L2180 1037.3 L2180.4 1036.9 L2181.5 1036.7 L2181.9 1036.6 L2183 1036.4 L2184.5 1036.2 L2186 1036.3 L2186.2 1036.6 L2187.2 1036.5 L2187.5 1036.2 L2187.9 1035.7 L2189 1035.4 L2189.4 1035.6 L2190.5 1035.6 L2191 1035.5 L2192 1035.4 L2192.6 1035.3 L2193.5 1035.4 L2193.9 1035.3 L2195 1034.8 L2195.5 1034.8 L2196.5 1034.8 L2197.7 1034.7 L2198 1034.5 L2199 1034.4 L2199.5 1034.1 L2200 1033.3 L2201 1033.3 L2201.5 1033.8 L2201.8 1034.1 L2202.5 1034.1 L2204 1033.7 L2205.5 1033.2 L2206.3 1033.2 L2207.5 1033.2" fill="none" stroke="#b0c0dc" stroke-width="2.6" stroke-linejoin="round"/>
<path d="M208 1064 L560 1064 L860 1064 L898 1064 L899 1064 L966 1064 L968 1064 L1028 1064 L1028.5 1064 L1030 1064 L1033 1064 L1035 1064 L1036 1064 L1039 1064 L1042 1064 L1045 1064 L1048 1064 L1051 1064 L1054 1064 L1057 1064 L1060 1064 L1063 1064 L1065 1064 L1066 1064 L1069 1064 L1072 1064 L1075 1064 L1078 1064 L1081 1064 L1084 1064 L1087 1064 L1090 1064 L1093 1064 L1096 1064 L1099 1064 L1102 1064 L1105 1064 L1106 1064 L1108 1064 L1111 1064 L1114 1064 L1117 1064 L1120 1064 L1123 1064 L1126 1064 L1128 1064 L1129 1064 L1132 1064 L1133 1064 L1135 1064 L1138 1064 L1141 1064 L1144 1064 L1147 1064 L1150 1064 L1153 1064 L1155 1064 L1300 1064 L1500 1063.3 L1600 1063 L1897 1061 L1898 1060.9 L1899.1 1060.9 L1899.5 1061 L1901 1061.3 L1902.5 1061.6 L1904 1061.4 L1905.5 1060.8 L1907 1060.5 L1908.5 1060.3 L1909.1 1060.4 L1910 1060.6 L1911.5 1060.8 L1913 1060.7 L1913.9 1060.7 L1914.5 1060.6 L1916 1060.4 L1917 1060.5 L1917.5 1061 L1918.6 1060.8 L1919 1060.3 L1919.5 1060 L1920 1060.2 L1920.5 1060.5 L1922 1060.8 L1923.5 1060.9 L1925 1060.8 L1926.5 1060.8 L1928 1060.7 L1929.5 1060.6 L1930 1060.4 L1931 1060 L1932.5 1059.7 L1934 1060.1 L1935.5 1060.4 L1937 1060 L1938.5 1059.9 L1940 1060.1 L1941.5 1060 L1943 1060 L1944.4 1060.2 L1944.5 1060.3 L1945 1060 L1946 1059.8 L1947.3 1059.9 L1947.5 1060 L1949 1060.1 L1950 1059.7 L1950.5 1060.1 L1950.8 1060 L1951.1 1059.8 L1952 1059.6 L1952.6 1059.8 L1953.5 1059.9 L1954.3 1059.6 L1955 1059.5 L1956.5 1059.5 L1956.8 1059.5 L1958 1059.7 L1958.5 1059.7 L1959.5 1059.6 L1961 1059.8 L1962.5 1060.2 L1964 1060.3 L1965.4 1060.1 L1965.5 1059.8 L1967 1059.6 L1968.2 1059.7 L1968.5 1060.2 L1970 1060.6 L1971.3 1060.7 L1971.5 1060.6 L1973 1060.2 L1973.9 1059.6 L1974.5 1059.5 L1975.6 1059.9 L1975.9 1060.3 L1976 1060.3 L1977.5 1059.9 L1979 1059.8 L1979.8 1059.9 L1980.5 1059.7 L1981.6 1059.6 L1982 1059.7 L1983.5 1059.9 L1984 1059.9 L1985 1060.1 L1985.8 1060.1 L1986.5 1060.3 L1988 1060.3 L1988.4 1059.8 L1989.5 1059.7 L1990 1059.8 L1990.2 1059.6 L1990.9 1059.6 L1991 1059.8 L1992.1 1059.8 L1992.5 1059.6 L1994 1059.8 L1995.5 1060.2 L1997 1060.1 L1998.5 1059.8 L2000 1060.2 L2001.2 1060.2 L2001.5 1059.6 L2002.6 1059.5 L2003 1059.8 L2004.5 1059.9 L2005.4 1060.1 L2006 1060.2 L2007.5 1060 L2009 1060.1 L2009.7 1060.3 L2010.5 1060.5 L2012 1060.8 L2013.5 1060.7 L2014 1060.3 L2014.6 1060.3 L2015 1060.7 L2016.5 1060.6 L2017.6 1060.1 L2018 1059.9 L2018.2 1060 L2019.5 1059.9 L2021 1059.7 L2022.5 1059.6 L2024 1059.8 L2024.2 1059.9 L2024.7 1059.6 L2025.5 1059.7 L2026.7 1060.1 L2027 1059.5 L2028.5 1059.1 L2029.3 1058.9 L2030 1058.9 L2031.5 1058.8 L2033 1058.5 L2034.5 1058.4 L2035.3 1058 L2036 1057.8 L2036.9 1057.7 L2037.5 1057.7 L2039 1057.5 L2040 1057.6 L2040.5 1057.8 L2042 1058 L2043.5 1057.9 L2043.8 1057.5 L2045 1057.4 L2046.4 1057.8 L2046.5 1057.6 L2047 1057.2 L2048 1057.5 L2049.5 1057.7 L2051 1057.7 L2051.9 1057.3 L2052.3 1057 L2052.4 1057.4 L2052.5 1057.6 L2054 1057.1 L2055.5 1056.7 L2055.9 1056.8 L2057 1056.7 L2058.5 1056.5 L2059.4 1056.4 L2059.9 1056.2 L2060 1056.3 L2060.8 1056.5 L2061.5 1056.6 L2063 1056.7 L2064.5 1056.5 L2064.6 1056.4 L2066 1056.6 L2066.4 1057.1 L2067.5 1057.1 L2067.8 1056.9 L2069 1056.9 L2069.4 1057.1 L2070.5 1057.2 L2071 1057.1 L2072 1056.6 L2073.5 1056.5 L2075 1056.9 L2076.5 1056.9 L2076.6 1056.6 L2077.4 1055.8 L2077.9 1055.5 L2078 1055.5 L2078.2 1056 L2079.5 1056.3 L2081 1056.1 L2082.1 1056.2 L2082.5 1056.3 L2084 1056.2 L2085.5 1056.2 L2086.1 1056.2 L2086.4 1055.9 L2087 1056 L2087.4 1055.9 L2087.7 1055.8 L2088.1 1056.1 L2088.5 1056.2 L2089.3 1056.1 L2090 1056.2 L2090.7 1056.1 L2090.9 1055.8 L2091.5 1055.7 L2092 1055.8 L2092.4 1055.8 L2092.5 1055.9 L2093 1055.8 L2093.8 1055.8 L2094.5 1056.1 L2094.9 1056.2 L2095 1056.5 L2095.6 1056.6 L2096 1056.3 L2097.5 1055.9 L2098.4 1055.9 L2098.8 1056.2 L2099 1056.6 L2099.3 1056.5 L2100.5 1056.1 L2102 1056.2 L2103 1056.5 L2103.5 1056.5 L2103.6 1056.3 L2105 1056.3 L2105.2 1056.6 L2106.5 1056.7 L2106.6 1056.4 L2108 1056.1 L2109.5 1056.2 L2111 1056.4 L2111.5 1056.4 L2112 1056.3 L2112.5 1056.3 L2113 1056.6 L2113.1 1056.5 L2113.9 1055.9 L2114 1055.6 L2114.7 1055.8 L2115.5 1055.8 L2116.2 1056 L2117 1056.4 L2118.5 1056.5 L2119.4 1056.3 L2120 1056.3 L2120.3 1056.5 L2120.5 1056.6 L2121.3 1056.5 L2121.5 1056.5 L2122.2 1056.4 L2123 1056.4 L2124.3 1056.3 L2124.5 1055.9 L2126 1055.9 L2127.4 1056.3 L2127.5 1056.5 L2129 1056.6 L2129.5 1056.7 L2129.8 1056.8 L2130.5 1057 L2131.6 1057.1 L2132 1056.7 L2132.6 1052.2 L2132.9 1050.2 L2133.2 1047.2 L2133.4 1045.1 L2133.5 1044.7 L2133.6 1043.8 L2134.1 1043.6 L2135 1043.9 L2135.7 1044 L2136.5 1044.2 L2136.8 1044.3 L2138 1044.5 L2139.5 1044.7 L2139.6 1044.6 L2140 1044.7 L2141 1044.9 L2141.4 1045.2 L2142.4 1045.7 L2142.5 1045.4 L2142.6 1045.3 L2144 1045.3 L2145.5 1045.7 L2146.9 1046.1 L2147 1046.2 L2147.2 1046.3 L2148.5 1046.4 L2149.6 1046.6 L2150 1046.9 L2150.2 1047.1 L2151.5 1047 L2153 1047.3 L2154.5 1047.8 L2154.7 1048.2 L2155.1 1048.1 L2156 1047.9 L2156.2 1047.7 L2157.5 1047.8 L2157.7 1047.9 L2157.9 1048.3 L2159 1048.8 L2159.3 1048.9 L2160.5 1048.7 L2160.8 1048.6 L2161.5 1049 L2162 1049.2 L2162.4 1049.3 L2163.5 1049.6 L2163.8 1049.8 L2165 1050.1 L2166.1 1050.2 L2166.3 1050.1 L2166.5 1050.2 L2168 1050.4 L2169.5 1050.8 L2169.7 1051.2 L2169.8 1050.9 L2170.1 1050.7 L2171 1051.3 L2172.5 1051.8 L2172.8 1051.3 L2173.9 1051.5 L2174 1051.4 L2174.3 1051.2 L2175.5 1051.2 L2177 1051.5 L2177.7 1051.2 L2178 1051 L2178.5 1051.2 L2180 1051.7 L2180.4 1051.6 L2181.5 1051.1 L2181.9 1051.1 L2183 1051.3 L2184.5 1051.1 L2186 1050.9 L2186.2 1051 L2187.2 1051 L2187.5 1050.8 L2187.9 1050.9 L2189 1051.3 L2189.4 1051.5 L2190.5 1051.3 L2191 1051 L2192 1050.8 L2192.6 1051 L2193.5 1051 L2193.9 1050.5 L2195 1050.6 L2195.5 1050.8 L2196.5 1050.4 L2197.7 1050.6 L2198 1050.7 L2199 1050.4 L2199.5 1050.5 L2200 1050.8 L2201 1050.8 L2201.5 1050.7 L2201.8 1050.9 L2202.5 1051.1 L2204 1051.2 L2205.5 1051.1 L2206.3 1050.9 L2207.5 1050.6 L2207.5 1059.7 L2206.3 1059.7 L2205.5 1059.7 L2204 1059.8 L2202.5 1059.8 L2201.8 1059.7 L2201.5 1059.9 L2201 1059.8 L2200 1059.6 L2199.5 1059.9 L2199 1059.9 L2198 1059.7 L2197.7 1059.6 L2196.5 1059.7 L2195.5 1059.7 L2195 1059.8 L2193.9 1059.9 L2193.5 1059.7 L2192.6 1059.6 L2192 1059.7 L2191 1059.6 L2190.5 1059.6 L2189.4 1059.6 L2189 1059.6 L2187.9 1059.6 L2187.5 1059.5 L2187.2 1059.4 L2186.2 1059.5 L2186 1059.6 L2184.5 1059.7 L2183 1059.6 L2181.9 1059.5 L2181.5 1059.4 L2180.4 1059.5 L2180 1059.5 L2178.5 1059.5 L2178 1059.6 L2177.7 1059.7 L2177 1059.8 L2175.5 1059.7 L2174.3 1059.6 L2174 1059.6 L2173.9 1059.6 L2172.8 1059.6 L2172.5 1059.6 L2171 1059.6 L2170.1 1059.6 L2169.8 1059.5 L2169.7 1059.5 L2169.5 1059.5 L2168 1059.6 L2166.5 1059.6 L2166.3 1059.6 L2166.1 1059.4 L2165 1059.5 L2163.8 1059.6 L2163.5 1059.6 L2162.4 1059.6 L2162 1059.6 L2161.5 1059.6 L2160.8 1059.5 L2160.5 1059.5 L2159.3 1059.5 L2159 1059.6 L2157.9 1059.7 L2157.7 1059.6 L2157.5 1059.6 L2156.2 1059.5 L2156 1059.4 L2155.1 1059.4 L2154.7 1059.4 L2154.5 1059.4 L2153 1059.5 L2151.5 1059.6 L2150.2 1059.5 L2150 1059.5 L2149.6 1059.6 L2148.5 1059.6 L2147.2 1059.5 L2147 1059.6 L2146.9 1059.5 L2145.5 1059.4 L2144 1059.4 L2142.6 1059.5 L2142.5 1059.5 L2142.4 1059.4 L2141.4 1059.3 L2141 1059.3 L2140 1059.5 L2139.6 1059.7 L2139.5 1059.6 L2138 1059.4 L2136.8 1059.4 L2136.5 1059.4 L2135.7 1059.4 L2135 1059.3 L2134.1 1059.4 L2133.6 1059.2 L2133.5 1059.1 L2133.4 1059.2 L2133.2 1059.3 L2132.9 1059.1 L2132.6 1059 L2132 1059.1 L2131.6 1059.3 L2130.5 1059.3 L2129.8 1059 L2129.5 1059.1 L2129 1059.2 L2127.5 1059.1 L2127.4 1058.8 L2126 1058.6 L2124.5 1058.7 L2124.3 1058.8 L2123 1058.7 L2122.2 1058.7 L2121.5 1058.8 L2121.3 1058.8 L2120.5 1058.6 L2120.3 1058.6 L2120 1058.8 L2119.4 1058.7 L2118.5 1058.6 L2117 1058.5 L2116.2 1058.3 L2115.5 1058.2 L2114.7 1058.2 L2114 1058.4 L2113.9 1058.5 L2113.1 1058.3 L2113 1058.3 L2112.5 1058.4 L2112 1058.3 L2111.5 1058.1 L2111 1058 L2109.5 1058.1 L2108 1058.2 L2106.6 1058.1 L2106.5 1057.9 L2105.2 1058 L2105 1058.1 L2103.6 1058.2 L2103.5 1058.3 L2103 1058.1 L2102 1057.8 L2100.5 1057.8 L2099.3 1057.9 L2099 1057.9 L2098.8 1057.9 L2098.4 1057.8 L2097.5 1057.8 L2096 1057.7 L2095.6 1057.6 L2095 1057.6 L2094.9 1057.7 L2094.5 1057.5 L2093.8 1057.3 L2093 1057.2 L2092.5 1057 L2092.4 1057 L2092 1056.9 L2091.5 1056.8 L2090.9 1056.7 L2090.7 1056.8 L2090 1056.6 L2089.3 1056.4 L2088.5 1056.3 L2088.1 1056.3 L2087.7 1056.4 L2087.4 1056.2 L2087 1056 L2086.4 1056.2 L2086.1 1056.5 L2085.5 1056.5 L2084 1056.4 L2082.5 1056.5 L2082.1 1056.7 L2081 1056.7 L2079.5 1056.7 L2078.2 1056.7 L2078 1056.7 L2077.9 1056.8 L2077.4 1056.9 L2076.6 1057 L2076.5 1056.9 L2075 1056.9 L2073.5 1056.9 L2072 1057.1 L2071 1057.3 L2070.5 1057.3 L2069.4 1057.2 L2069 1057.3 L2067.8 1057.6 L2067.5 1057.6 L2066.4 1057.5 L2066 1057.3 L2064.6 1057.5 L2064.5 1057.7 L2063 1057.8 L2061.5 1057.9 L2060.8 1058 L2060 1058.1 L2059.9 1058 L2059.4 1057.9 L2058.5 1058.1 L2057 1058.1 L2055.9 1058.1 L2055.5 1058.2 L2054 1058.3 L2052.5 1058.4 L2052.4 1058.4 L2052.3 1058.3 L2051.9 1058.2 L2051 1058.3 L2049.5 1058.5 L2048 1058.7 L2047 1058.7 L2046.5 1058.6 L2046.4 1058.5 L2045 1058.6 L2043.8 1058.7 L2043.5 1058.8 L2042 1059 L2040.5 1059.1 L2040 1059.1 L2039 1059.1 L2037.5 1059.2 L2036.9 1059.2 L2036 1059.2 L2035.3 1059.3 L2034.5 1059.6 L2033 1059.9 L2031.5 1060.2 L2030 1060.6 L2029.3 1060.9 L2028.5 1061 L2027 1061.4 L2026.7 1061.4 L2025.5 1061.4 L2024.7 1061.4 L2024.2 1061.4 L2024 1061.4 L2022.5 1061.5 L2021 1061.5 L2019.5 1061.5 L2018.2 1061.6 L2018 1061.6 L2017.6 1061.6 L2016.5 1061.6 L2015 1061.6 L2014.6 1061.4 L2014 1061.4 L2013.5 1061.2 L2012 1061.1 L2010.5 1061.3 L2009.7 1061.4 L2009 1061.6 L2007.5 1061.7 L2006 1061.7 L2005.4 1061.5 L2004.5 1061.4 L2003 1061.4 L2002.6 1061.5 L2001.5 1061.6 L2001.2 1061.6 L2000 1061.6 L1998.5 1061.7 L1997 1061.8 L1995.5 1061.7 L1994 1061.6 L1992.5 1061.6 L1992.1 1061.7 L1991 1061.8 L1990.9 1061.8 L1990.2 1061.6 L1990 1061.5 L1989.5 1061.5 L1988.4 1061.6 L1988 1061.7 L1986.5 1061.7 L1985.8 1061.5 L1985 1061.6 L1984 1061.7 L1983.5 1061.7 L1982 1061.7 L1981.6 1061.6 L1980.5 1061.7 L1979.8 1061.8 L1979 1061.8 L1977.5 1061.8 L1976 1061.9 L1975.9 1061.8 L1975.6 1061.6 L1974.5 1061.5 L1973.9 1061.6 L1973 1061.7 L1971.5 1061.7 L1971.3 1061.5 L1970 1061.4 L1968.5 1061.7 L1968.2 1061.7 L1967 1061.6 L1965.5 1061.5 L1965.4 1061.6 L1964 1061.6 L1962.5 1061.7 L1961 1061.7 L1959.5 1061.8 L1958.5 1061.7 L1958 1061.7 L1956.8 1061.7 L1956.5 1061.5 L1955 1061.5 L1954.3 1061.8 L1953.5 1061.7 L1952.6 1061.7 L1952 1061.6 L1951.1 1061.6 L1950.8 1061.8 L1950.5 1061.8 L1950 1061.7 L1949 1061.7 L1947.5 1061.6 L1947.3 1061.6 L1946 1061.8 L1945 1061.9 L1944.5 1061.8 L1944.4 1061.8 L1943 1061.8 L1941.5 1062 L1940 1062 L1938.5 1061.9 L1937 1061.7 L1935.5 1061.8 L1934 1061.9 L1932.5 1061.8 L1931 1061.7 L1930 1061.7 L1929.5 1061.6 L1928 1061.7 L1926.5 1061.9 L1925 1061.9 L1923.5 1061.7 L1922 1061.6 L1920.5 1061.6 L1920 1061.7 L1919.5 1061.9 L1919 1062.1 L1918.6 1061.9 L1917.5 1061.8 L1917 1061.8 L1916 1061.8 L1914.5 1061.9 L1913.9 1061.9 L1913 1061.8 L1911.5 1062 L1910 1062 L1909.1 1061.8 L1908.5 1061.9 L1907 1062.1 L1905.5 1062 L1904 1061.8 L1902.5 1061.9 L1901 1062.1 L1899.5 1062 L1899.1 1062 L1898 1062 L1897 1062 L1600 1063.5 L1500 1063.7 L1300 1064 L1155 1064 L1153 1064 L1150 1064 L1147 1064 L1144 1064 L1141 1064 L1138 1064 L1135 1064 L1133 1064 L1132 1064 L1129 1064 L1128 1064 L1126 1064 L1123 1064 L1120 1064 L1117 1064 L1114 1064 L1111 1064 L1108 1064 L1106 1064 L1105 1064 L1102 1064 L1099 1064 L1096 1064 L1093 1064 L1090 1064 L1087 1064 L1084 1064 L1081 1064 L1078 1064 L1075 1064 L1072 1064 L1069 1064 L1066 1064 L1065 1064 L1063 1064 L1060 1064 L1057 1064 L1054 1064 L1051 1064 L1048 1064 L1045 1064 L1042 1064 L1039 1064 L1036 1064 L1035 1064 L1033 1064 L1030 1064 L1028.5 1064 L1028 1064 L968 1064 L966 1064 L899 1064 L898 1064 L860 1064 L560 1064 L208 1064 Z" fill="url(#g2)"/>
<path d="M1300 1064 L1500 1063.3 L1600 1063 L1897 1061 L1898 1060.9 L1899.1 1060.9 L1899.5 1061 L1901 1061.3 L1902.5 1061.6 L1904 1061.4 L1905.5 1060.8 L1907 1060.5 L1908.5 1060.3 L1909.1 1060.4 L1910 1060.6 L1911.5 1060.8 L1913 1060.7 L1913.9 1060.7 L1914.5 1060.6 L1916 1060.4 L1917 1060.5 L1917.5 1061 L1918.6 1060.8 L1919 1060.3 L1919.5 1060 L1920 1060.2 L1920.5 1060.5 L1922 1060.8 L1923.5 1060.9 L1925 1060.8 L1926.5 1060.8 L1928 1060.7 L1929.5 1060.6 L1930 1060.4 L1931 1060 L1932.5 1059.7 L1934 1060.1 L1935.5 1060.4 L1937 1060 L1938.5 1059.9 L1940 1060.1 L1941.5 1060 L1943 1060 L1944.4 1060.2 L1944.5 1060.3 L1945 1060 L1946 1059.8 L1947.3 1059.9 L1947.5 1060 L1949 1060.1 L1950 1059.7 L1950.5 1060.1 L1950.8 1060 L1951.1 1059.8 L1952 1059.6 L1952.6 1059.8 L1953.5 1059.9 L1954.3 1059.6 L1955 1059.5 L1956.5 1059.5 L1956.8 1059.5 L1958 1059.7 L1958.5 1059.7 L1959.5 1059.6 L1961 1059.8 L1962.5 1060.2 L1964 1060.3 L1965.4 1060.1 L1965.5 1059.8 L1967 1059.6 L1968.2 1059.7 L1968.5 1060.2 L1970 1060.6 L1971.3 1060.7 L1971.5 1060.6 L1973 1060.2 L1973.9 1059.6 L1974.5 1059.5 L1975.6 1059.9 L1975.9 1060.3 L1976 1060.3 L1977.5 1059.9 L1979 1059.8 L1979.8 1059.9 L1980.5 1059.7 L1981.6 1059.6 L1982 1059.7 L1983.5 1059.9 L1984 1059.9 L1985 1060.1 L1985.8 1060.1 L1986.5 1060.3 L1988 1060.3 L1988.4 1059.8 L1989.5 1059.7 L1990 1059.8 L1990.2 1059.6 L1990.9 1059.6 L1991 1059.8 L1992.1 1059.8 L1992.5 1059.6 L1994 1059.8 L1995.5 1060.2 L1997 1060.1 L1998.5 1059.8 L2000 1060.2 L2001.2 1060.2 L2001.5 1059.6 L2002.6 1059.5 L2003 1059.8 L2004.5 1059.9 L2005.4 1060.1 L2006 1060.2 L2007.5 1060 L2009 1060.1 L2009.7 1060.3 L2010.5 1060.5 L2012 1060.8 L2013.5 1060.7 L2014 1060.3 L2014.6 1060.3 L2015 1060.7 L2016.5 1060.6 L2017.6 1060.1 L2018 1059.9 L2018.2 1060 L2019.5 1059.9 L2021 1059.7 L2022.5 1059.6 L2024 1059.8 L2024.2 1059.9 L2024.7 1059.6 L2025.5 1059.7 L2026.7 1060.1 L2027 1059.5 L2028.5 1059.1 L2029.3 1058.9 L2030 1058.9 L2031.5 1058.8 L2033 1058.5 L2034.5 1058.4 L2035.3 1058 L2036 1057.8 L2036.9 1057.7 L2037.5 1057.7 L2039 1057.5 L2040 1057.6 L2040.5 1057.8 L2042 1058 L2043.5 1057.9 L2043.8 1057.5 L2045 1057.4 L2046.4 1057.8 L2046.5 1057.6 L2047 1057.2 L2048 1057.5 L2049.5 1057.7 L2051 1057.7 L2051.9 1057.3 L2052.3 1057 L2052.4 1057.4 L2052.5 1057.6 L2054 1057.1 L2055.5 1056.7 L2055.9 1056.8 L2057 1056.7 L2058.5 1056.5 L2059.4 1056.4 L2059.9 1056.2 L2060 1056.3 L2060.8 1056.5 L2061.5 1056.6 L2063 1056.7 L2064.5 1056.5 L2064.6 1056.4 L2066 1056.6 L2066.4 1057.1 L2067.5 1057.1 L2067.8 1056.9 L2069 1056.9 L2069.4 1057.1 L2070.5 1057.2 L2071 1057.1 L2072 1056.6 L2073.5 1056.5 L2075 1056.9 L2076.5 1056.9 L2076.6 1056.6 L2077.4 1055.8 L2077.9 1055.5 L2078 1055.5 L2078.2 1056 L2079.5 1056.3 L2081 1056.1 L2082.1 1056.2 L2082.5 1056.3 L2084 1056.2 L2085.5 1056.2 L2086.1 1056.2 L2086.4 1055.9 L2087 1056 L2087.4 1055.9 L2087.7 1055.8 L2088.1 1056.1 L2088.5 1056.2 L2089.3 1056.1 L2090 1056.2 L2090.7 1056.1 L2090.9 1055.8 L2091.5 1055.7 L2092 1055.8 L2092.4 1055.8 L2092.5 1055.9 L2093 1055.8 L2093.8 1055.8 L2094.5 1056.1 L2094.9 1056.2 L2095 1056.5 L2095.6 1056.6 L2096 1056.3 L2097.5 1055.9 L2098.4 1055.9 L2098.8 1056.2 L2099 1056.6 L2099.3 1056.5 L2100.5 1056.1 L2102 1056.2 L2103 1056.5 L2103.5 1056.5 L2103.6 1056.3 L2105 1056.3 L2105.2 1056.6 L2106.5 1056.7 L2106.6 1056.4 L2108 1056.1 L2109.5 1056.2 L2111 1056.4 L2111.5 1056.4 L2112 1056.3 L2112.5 1056.3 L2113 1056.6 L2113.1 1056.5 L2113.9 1055.9 L2114 1055.6 L2114.7 1055.8 L2115.5 1055.8 L2116.2 1056 L2117 1056.4 L2118.5 1056.5 L2119.4 1056.3 L2120 1056.3 L2120.3 1056.5 L2120.5 1056.6 L2121.3 1056.5 L2121.5 1056.5 L2122.2 1056.4 L2123 1056.4 L2124.3 1056.3 L2124.5 1055.9 L2126 1055.9 L2127.4 1056.3 L2127.5 1056.5 L2129 1056.6 L2129.5 1056.7 L2129.8 1056.8 L2130.5 1057 L2131.6 1057.1 L2132 1056.7 L2132.6 1052.2 L2132.9 1050.2 L2133.2 1047.2 L2133.4 1045.1 L2133.5 1044.7 L2133.6 1043.8 L2134.1 1043.6 L2135 1043.9 L2135.7 1044 L2136.5 1044.2 L2136.8 1044.3 L2138 1044.5 L2139.5 1044.7 L2139.6 1044.6 L2140 1044.7 L2141 1044.9 L2141.4 1045.2 L2142.4 1045.7 L2142.5 1045.4 L2142.6 1045.3 L2144 1045.3 L2145.5 1045.7 L2146.9 1046.1 L2147 1046.2 L2147.2 1046.3 L2148.5 1046.4 L2149.6 1046.6 L2150 1046.9 L2150.2 1047.1 L2151.5 1047 L2153 1047.3 L2154.5 1047.8 L2154.7 1048.2 L2155.1 1048.1 L2156 1047.9 L2156.2 1047.7 L2157.5 1047.8 L2157.7 1047.9 L2157.9 1048.3 L2159 1048.8 L2159.3 1048.9 L2160.5 1048.7 L2160.8 1048.6 L2161.5 1049 L2162 1049.2 L2162.4 1049.3 L2163.5 1049.6 L2163.8 1049.8 L2165 1050.1 L2166.1 1050.2 L2166.3 1050.1 L2166.5 1050.2 L2168 1050.4 L2169.5 1050.8 L2169.7 1051.2 L2169.8 1050.9 L2170.1 1050.7 L2171 1051.3 L2172.5 1051.8 L2172.8 1051.3 L2173.9 1051.5 L2174 1051.4 L2174.3 1051.2 L2175.5 1051.2 L2177 1051.5 L2177.7 1051.2 L2178 1051 L2178.5 1051.2 L2180 1051.7 L2180.4 1051.6 L2181.5 1051.1 L2181.9 1051.1 L2183 1051.3 L2184.5 1051.1 L2186 1050.9 L2186.2 1051 L2187.2 1051 L2187.5 1050.8 L2187.9 1050.9 L2189 1051.3 L2189.4 1051.5 L2190.5 1051.3 L2191 1051 L2192 1050.8 L2192.6 1051 L2193.5 1051 L2193.9 1050.5 L2195 1050.6 L2195.5 1050.8 L2196.5 1050.4 L2197.7 1050.6 L2198 1050.7 L2199 1050.4 L2199.5 1050.5 L2200 1050.8 L2201 1050.8 L2201.5 1050.7 L2201.8 1050.9 L2202.5 1051.1 L2204 1051.2 L2205.5 1051.1 L2206.3 1050.9 L2207.5 1050.6" fill="none" stroke="#f8d54a" stroke-width="2.6" stroke-linejoin="round"/>
<path d="M208 1064 L560 1064 L860 1064 L898 1064 L899 1064 L966 1064 L968 1064 L1028 1064 L1028.5 1064 L1030 1064 L1033 1064 L1035 1064 L1036 1064 L1039 1064 L1042 1064 L1045 1064 L1048 1064 L1051 1064 L1054 1064 L1057 1064 L1060 1064 L1063 1064 L1065 1064 L1066 1064 L1069 1064 L1072 1064 L1075 1064 L1078 1064 L1081 1064 L1084 1064 L1087 1064 L1090 1064 L1093 1064 L1096 1064 L1099 1064 L1102 1064 L1105 1064 L1106 1064 L1108 1064 L1111 1064 L1114 1064 L1117 1064 L1120 1064 L1123 1064 L1126 1064 L1128 1064 L1129 1064 L1132 1064 L1133 1064 L1135 1064 L1138 1064 L1141 1064 L1144 1064 L1147 1064 L1150 1064 L1153 1064 L1155 1064 L1300 1064 L1500 1063.7 L1600 1063.5 L1897 1062 L1898 1062 L1899.1 1062 L1899.5 1062 L1901 1062.1 L1902.5 1061.9 L1904 1061.8 L1905.5 1062 L1907 1062.1 L1908.5 1061.9 L1909.1 1061.8 L1910 1062 L1911.5 1062 L1913 1061.8 L1913.9 1061.9 L1914.5 1061.9 L1916 1061.8 L1917 1061.8 L1917.5 1061.8 L1918.6 1061.9 L1919 1062.1 L1919.5 1061.9 L1920 1061.7 L1920.5 1061.6 L1922 1061.6 L1923.5 1061.7 L1925 1061.9 L1926.5 1061.9 L1928 1061.7 L1929.5 1061.6 L1930 1061.7 L1931 1061.7 L1932.5 1061.8 L1934 1061.9 L1935.5 1061.8 L1937 1061.7 L1938.5 1061.9 L1940 1062 L1941.5 1062 L1943 1061.8 L1944.4 1061.8 L1944.5 1061.8 L1945 1061.9 L1946 1061.8 L1947.3 1061.6 L1947.5 1061.6 L1949 1061.7 L1950 1061.7 L1950.5 1061.8 L1950.8 1061.8 L1951.1 1061.6 L1952 1061.6 L1952.6 1061.7 L1953.5 1061.7 L1954.3 1061.8 L1955 1061.5 L1956.5 1061.5 L1956.8 1061.7 L1958 1061.7 L1958.5 1061.7 L1959.5 1061.8 L1961 1061.7 L1962.5 1061.7 L1964 1061.6 L1965.4 1061.6 L1965.5 1061.5 L1967 1061.6 L1968.2 1061.7 L1968.5 1061.7 L1970 1061.4 L1971.3 1061.5 L1971.5 1061.7 L1973 1061.7 L1973.9 1061.6 L1974.5 1061.5 L1975.6 1061.6 L1975.9 1061.8 L1976 1061.9 L1977.5 1061.8 L1979 1061.8 L1979.8 1061.8 L1980.5 1061.7 L1981.6 1061.6 L1982 1061.7 L1983.5 1061.7 L1984 1061.7 L1985 1061.6 L1985.8 1061.5 L1986.5 1061.7 L1988 1061.7 L1988.4 1061.6 L1989.5 1061.5 L1990 1061.5 L1990.2 1061.6 L1990.9 1061.8 L1991 1061.8 L1992.1 1061.7 L1992.5 1061.6 L1994 1061.6 L1995.5 1061.7 L1997 1061.8 L1998.5 1061.7 L2000 1061.6 L2001.2 1061.6 L2001.5 1061.6 L2002.6 1061.5 L2003 1061.4 L2004.5 1061.4 L2005.4 1061.5 L2006 1061.7 L2007.5 1061.7 L2009 1061.6 L2009.7 1061.4 L2010.5 1061.3 L2012 1061.1 L2013.5 1061.2 L2014 1061.4 L2014.6 1061.4 L2015 1061.6 L2016.5 1061.6 L2017.6 1061.6 L2018 1061.6 L2018.2 1061.6 L2019.5 1061.5 L2021 1061.5 L2022.5 1061.5 L2024 1061.4 L2024.2 1061.4 L2024.7 1061.4 L2025.5 1061.4 L2026.7 1061.4 L2027 1061.4 L2028.5 1061 L2029.3 1060.9 L2030 1060.6 L2031.5 1060.2 L2033 1059.9 L2034.5 1059.6 L2035.3 1059.3 L2036 1059.2 L2036.9 1059.2 L2037.5 1059.2 L2039 1059.1 L2040 1059.1 L2040.5 1059.1 L2042 1059 L2043.5 1058.8 L2043.8 1058.7 L2045 1058.6 L2046.4 1058.5 L2046.5 1058.6 L2047 1058.7 L2048 1058.7 L2049.5 1058.5 L2051 1058.3 L2051.9 1058.2 L2052.3 1058.3 L2052.4 1058.4 L2052.5 1058.4 L2054 1058.3 L2055.5 1058.2 L2055.9 1058.1 L2057 1058.1 L2058.5 1058.1 L2059.4 1057.9 L2059.9 1058 L2060 1058.1 L2060.8 1058 L2061.5 1057.9 L2063 1057.8 L2064.5 1057.7 L2064.6 1057.5 L2066 1057.3 L2066.4 1057.5 L2067.5 1057.6 L2067.8 1057.6 L2069 1057.3 L2069.4 1057.2 L2070.5 1057.3 L2071 1057.3 L2072 1057.1 L2073.5 1056.9 L2075 1056.9 L2076.5 1056.9 L2076.6 1057 L2077.4 1056.9 L2077.9 1056.8 L2078 1056.7 L2078.2 1056.7 L2079.5 1056.7 L2081 1056.7 L2082.1 1056.7 L2082.5 1056.5 L2084 1056.4 L2085.5 1056.5 L2086.1 1056.5 L2086.4 1056.2 L2087 1056 L2087.4 1056.2 L2087.7 1056.4 L2088.1 1056.3 L2088.5 1056.3 L2089.3 1056.4 L2090 1056.6 L2090.7 1056.8 L2090.9 1056.7 L2091.5 1056.8 L2092 1056.9 L2092.4 1057 L2092.5 1057 L2093 1057.2 L2093.8 1057.3 L2094.5 1057.5 L2094.9 1057.7 L2095 1057.6 L2095.6 1057.6 L2096 1057.7 L2097.5 1057.8 L2098.4 1057.8 L2098.8 1057.9 L2099 1057.9 L2099.3 1057.9 L2100.5 1057.8 L2102 1057.8 L2103 1058.1 L2103.5 1058.3 L2103.6 1058.2 L2105 1058.1 L2105.2 1058 L2106.5 1057.9 L2106.6 1058.1 L2108 1058.2 L2109.5 1058.1 L2111 1058 L2111.5 1058.1 L2112 1058.3 L2112.5 1058.4 L2113 1058.3 L2113.1 1058.3 L2113.9 1058.5 L2114 1058.4 L2114.7 1058.2 L2115.5 1058.2 L2116.2 1058.3 L2117 1058.5 L2118.5 1058.6 L2119.4 1058.7 L2120 1058.8 L2120.3 1058.6 L2120.5 1058.6 L2121.3 1058.8 L2121.5 1058.8 L2122.2 1058.7 L2123 1058.7 L2124.3 1058.8 L2124.5 1058.7 L2126 1058.6 L2127.4 1058.8 L2127.5 1059.1 L2129 1059.2 L2129.5 1059.1 L2129.8 1059 L2130.5 1059.3 L2131.6 1059.3 L2132 1059.1 L2132.6 1059 L2132.9 1059.1 L2133.2 1059.3 L2133.4 1059.2 L2133.5 1059.1 L2133.6 1059.2 L2134.1 1059.4 L2135 1059.3 L2135.7 1059.4 L2136.5 1059.4 L2136.8 1059.4 L2138 1059.4 L2139.5 1059.6 L2139.6 1059.7 L2140 1059.5 L2141 1059.3 L2141.4 1059.3 L2142.4 1059.4 L2142.5 1059.5 L2142.6 1059.5 L2144 1059.4 L2145.5 1059.4 L2146.9 1059.5 L2147 1059.6 L2147.2 1059.5 L2148.5 1059.6 L2149.6 1059.6 L2150 1059.5 L2150.2 1059.5 L2151.5 1059.6 L2153 1059.5 L2154.5 1059.4 L2154.7 1059.4 L2155.1 1059.4 L2156 1059.4 L2156.2 1059.5 L2157.5 1059.6 L2157.7 1059.6 L2157.9 1059.7 L2159 1059.6 L2159.3 1059.5 L2160.5 1059.5 L2160.8 1059.5 L2161.5 1059.6 L2162 1059.6 L2162.4 1059.6 L2163.5 1059.6 L2163.8 1059.6 L2165 1059.5 L2166.1 1059.4 L2166.3 1059.6 L2166.5 1059.6 L2168 1059.6 L2169.5 1059.5 L2169.7 1059.5 L2169.8 1059.5 L2170.1 1059.6 L2171 1059.6 L2172.5 1059.6 L2172.8 1059.6 L2173.9 1059.6 L2174 1059.6 L2174.3 1059.6 L2175.5 1059.7 L2177 1059.8 L2177.7 1059.7 L2178 1059.6 L2178.5 1059.5 L2180 1059.5 L2180.4 1059.5 L2181.5 1059.4 L2181.9 1059.5 L2183 1059.6 L2184.5 1059.7 L2186 1059.6 L2186.2 1059.5 L2187.2 1059.4 L2187.5 1059.5 L2187.9 1059.6 L2189 1059.6 L2189.4 1059.6 L2190.5 1059.6 L2191 1059.6 L2192 1059.7 L2192.6 1059.6 L2193.5 1059.7 L2193.9 1059.9 L2195 1059.8 L2195.5 1059.7 L2196.5 1059.7 L2197.7 1059.6 L2198 1059.7 L2199 1059.9 L2199.5 1059.9 L2200 1059.6 L2201 1059.8 L2201.5 1059.9 L2201.8 1059.7 L2202.5 1059.8 L2204 1059.8 L2205.5 1059.7 L2206.3 1059.7 L2207.5 1059.7 L2207.5 1063.1 L2206.3 1063.1 L2205.5 1063.1 L2204 1063.1 L2202.5 1063.1 L2201.8 1063.1 L2201.5 1063.1 L2201 1063.1 L2200 1063.1 L2199.5 1063.1 L2199 1063.1 L2198 1063.1 L2197.7 1063.1 L2196.5 1063.1 L2195.5 1063.1 L2195 1063.1 L2193.9 1063.1 L2193.5 1063.1 L2192.6 1063.1 L2192 1063.1 L2191 1063.1 L2190.5 1063.1 L2189.4 1063.1 L2189 1063.1 L2187.9 1063.1 L2187.5 1063.1 L2187.2 1063.1 L2186.2 1063.1 L2186 1063.1 L2184.5 1063.1 L2183 1063.1 L2181.9 1063.1 L2181.5 1063.1 L2180.4 1063.1 L2180 1063.1 L2178.5 1063.1 L2178 1063.1 L2177.7 1063.1 L2177 1063.1 L2175.5 1063.1 L2174.3 1063.1 L2174 1063.1 L2173.9 1063.1 L2172.8 1063.1 L2172.5 1063.1 L2171 1063.1 L2170.1 1063.1 L2169.8 1063.1 L2169.7 1063.1 L2169.5 1063.1 L2168 1063.1 L2166.5 1063.1 L2166.3 1063.1 L2166.1 1063.1 L2165 1063.1 L2163.8 1063.1 L2163.5 1063.1 L2162.4 1063.1 L2162 1063.1 L2161.5 1063.1 L2160.8 1063.1 L2160.5 1063.1 L2159.3 1063.1 L2159 1063.1 L2157.9 1063.1 L2157.7 1063.1 L2157.5 1063.1 L2156.2 1063.1 L2156 1063.1 L2155.1 1063.1 L2154.7 1063.1 L2154.5 1063.1 L2153 1063.1 L2151.5 1063.1 L2150.2 1063.1 L2150 1063.1 L2149.6 1063.1 L2148.5 1063.1 L2147.2 1063.1 L2147 1063.1 L2146.9 1063.1 L2145.5 1063.1 L2144 1063.1 L2142.6 1063.1 L2142.5 1063.1 L2142.4 1063.1 L2141.4 1063.1 L2141 1063.1 L2140 1063.1 L2139.6 1063.1 L2139.5 1063.1 L2138 1063.1 L2136.8 1063.1 L2136.5 1063.1 L2135.7 1063.1 L2135 1063.1 L2134.1 1063.1 L2133.6 1063.1 L2133.5 1063.1 L2133.4 1063.1 L2133.2 1063.1 L2132.9 1063.1 L2132.6 1063.1 L2132 1063.1 L2131.6 1063.1 L2130.5 1063.1 L2129.8 1063.2 L2129.5 1063.2 L2129 1063.2 L2127.5 1063.2 L2127.4 1063.2 L2126 1063.2 L2124.5 1063.2 L2124.3 1063.2 L2123 1063.2 L2122.2 1063.2 L2121.5 1063.2 L2121.3 1063.2 L2120.5 1063.2 L2120.3 1063.2 L2120 1063.2 L2119.4 1063.2 L2118.5 1063.2 L2117 1063.2 L2116.2 1063.2 L2115.5 1063.2 L2114.7 1063.2 L2114 1063.2 L2113.9 1063.2 L2113.1 1063.2 L2113 1063.2 L2112.5 1063.2 L2112 1063.2 L2111.5 1063.2 L2111 1063.2 L2109.5 1063.2 L2108 1063.2 L2106.6 1063.2 L2106.5 1063.2 L2105.2 1063.2 L2105 1063.2 L2103.6 1063.2 L2103.5 1063.2 L2103 1063.2 L2102 1063.2 L2100.5 1063.2 L2099.3 1063.2 L2099 1063.2 L2098.8 1063.2 L2098.4 1063.2 L2097.5 1063.2 L2096 1063.2 L2095.6 1063.2 L2095 1063.2 L2094.9 1063.2 L2094.5 1063.2 L2093.8 1063.2 L2093 1063.2 L2092.5 1063.2 L2092.4 1063.2 L2092 1063.2 L2091.5 1063.2 L2090.9 1063.2 L2090.7 1063.2 L2090 1063.2 L2089.3 1063.2 L2088.5 1063.2 L2088.1 1063.2 L2087.7 1063.2 L2087.4 1063.2 L2087 1063.2 L2086.4 1063.2 L2086.1 1063.2 L2085.5 1063.2 L2084 1063.2 L2082.5 1063.2 L2082.1 1063.2 L2081 1063.2 L2079.5 1063.2 L2078.2 1063.2 L2078 1063.2 L2077.9 1063.2 L2077.4 1063.2 L2076.6 1063.2 L2076.5 1063.2 L2075 1063.2 L2073.5 1063.2 L2072 1063.2 L2071 1063.2 L2070.5 1063.2 L2069.4 1063.2 L2069 1063.2 L2067.8 1063.2 L2067.5 1063.2 L2066.4 1063.2 L2066 1063.2 L2064.6 1063.2 L2064.5 1063.2 L2063 1063.2 L2061.5 1063.2 L2060.8 1063.2 L2060 1063.2 L2059.9 1063.2 L2059.4 1063.2 L2058.5 1063.2 L2057 1063.2 L2055.9 1063.2 L2055.5 1063.2 L2054 1063.2 L2052.5 1063.2 L2052.4 1063.2 L2052.3 1063.2 L2051.9 1063.2 L2051 1063.2 L2049.5 1063.2 L2048 1063.2 L2047 1063.2 L2046.5 1063.2 L2046.4 1063.2 L2045 1063.2 L2043.8 1063.2 L2043.5 1063.2 L2042 1063.2 L2040.5 1063.2 L2040 1063.2 L2039 1063.2 L2037.5 1063.2 L2036.9 1063.2 L2036 1063.2 L2035.3 1063.2 L2034.5 1063.2 L2033 1063.2 L2031.5 1063.2 L2030 1063.2 L2029.3 1063.2 L2028.5 1063.2 L2027 1063.2 L2026.7 1063.2 L2025.5 1063.2 L2024.7 1063.2 L2024.2 1063.2 L2024 1063.2 L2022.5 1063.2 L2021 1063.2 L2019.5 1063.2 L2018.2 1063.2 L2018 1063.2 L2017.6 1063.2 L2016.5 1063.2 L2015 1063.2 L2014.6 1063.2 L2014 1063.2 L2013.5 1063.2 L2012 1063.2 L2010.5 1063.2 L2009.7 1063.2 L2009 1063.2 L2007.5 1063.2 L2006 1063.2 L2005.4 1063.2 L2004.5 1063.2 L2003 1063.2 L2002.6 1063.2 L2001.5 1063.2 L2001.2 1063.2 L2000 1063.2 L1998.5 1063.2 L1997 1063.2 L1995.5 1063.2 L1994 1063.2 L1992.5 1063.2 L1992.1 1063.2 L1991 1063.2 L1990.9 1063.2 L1990.2 1063.2 L1990 1063.2 L1989.5 1063.2 L1988.4 1063.2 L1988 1063.2 L1986.5 1063.2 L1985.8 1063.2 L1985 1063.2 L1984 1063.2 L1983.5 1063.2 L1982 1063.2 L1981.6 1063.2 L1980.5 1063.2 L1979.8 1063.2 L1979 1063.2 L1977.5 1063.2 L1976 1063.2 L1975.9 1063.2 L1975.6 1063.2 L1974.5 1063.3 L1973.9 1063.3 L1973 1063.3 L1971.5 1063.3 L1971.3 1063.3 L1970 1063.3 L1968.5 1063.3 L1968.2 1063.3 L1967 1063.3 L1965.5 1063.3 L1965.4 1063.3 L1964 1063.3 L1962.5 1063.3 L1961 1063.3 L1959.5 1063.3 L1958.5 1063.3 L1958 1063.3 L1956.8 1063.3 L1956.5 1063.3 L1955 1063.3 L1954.3 1063.3 L1953.5 1063.3 L1952.6 1063.3 L1952 1063.3 L1951.1 1063.3 L1950.8 1063.3 L1950.5 1063.3 L1950 1063.3 L1949 1063.3 L1947.5 1063.3 L1947.3 1063.3 L1946 1063.3 L1945 1063.3 L1944.5 1063.3 L1944.4 1063.3 L1943 1063.3 L1941.5 1063.3 L1940 1063.3 L1938.5 1063.3 L1937 1063.3 L1935.5 1063.3 L1934 1063.3 L1932.5 1063.3 L1931 1063.3 L1930 1063.3 L1929.5 1063.3 L1928 1063.3 L1926.5 1063.3 L1925 1063.3 L1923.5 1063.3 L1922 1063.3 L1920.5 1063.3 L1920 1063.3 L1919.5 1063.3 L1919 1063.3 L1918.6 1063.3 L1917.5 1063.3 L1917 1063.3 L1916 1063.3 L1914.5 1063.3 L1913.9 1063.3 L1913 1063.3 L1911.5 1063.3 L1910 1063.3 L1909.1 1063.3 L1908.5 1063.3 L1907 1063.3 L1905.5 1063.3 L1904 1063.3 L1902.5 1063.3 L1901 1063.3 L1899.5 1063.3 L1899.1 1063.3 L1898 1063.3 L1897 1063.3 L1600 1063.6 L1500 1063.8 L1300 1064 L1155 1064 L1153 1064 L1150 1064 L1147 1064 L1144 1064 L1141 1064 L1138 1064 L1135 1064 L1133 1064 L1132 1064 L1129 1064 L1128 1064 L1126 1064 L1123 1064 L1120 1064 L1117 1064 L1114 1064 L1111 1064 L1108 1064 L1106 1064 L1105 1064 L1102 1064 L1099 1064 L1096 1064 L1093 1064 L1090 1064 L1087 1064 L1084 1064 L1081 1064 L1078 1064 L1075 1064 L1072 1064 L1069 1064 L1066 1064 L1065 1064 L1063 1064 L1060 1064 L1057 1064 L1054 1064 L1051 1064 L1048 1064 L1045 1064 L1042 1064 L1039 1064 L1036 1064 L1035 1064 L1033 1064 L1030 1064 L1028.5 1064 L1028 1064 L968 1064 L966 1064 L899 1064 L898 1064 L860 1064 L560 1064 L208 1064 Z" fill="url(#g1)"/>
<path d="M1300 1064 L1500 1063.7 L1600 1063.5 L1897 1062 L1898 1062 L1899.1 1062 L1899.5 1062 L1901 1062.1 L1902.5 1061.9 L1904 1061.8 L1905.5 1062 L1907 1062.1 L1908.5 1061.9 L1909.1 1061.8 L1910 1062 L1911.5 1062 L1913 1061.8 L1913.9 1061.9 L1914.5 1061.9 L1916 1061.8 L1917 1061.8 L1917.5 1061.8 L1918.6 1061.9 L1919 1062.1 L1919.5 1061.9 L1920 1061.7 L1920.5 1061.6 L1922 1061.6 L1923.5 1061.7 L1925 1061.9 L1926.5 1061.9 L1928 1061.7 L1929.5 1061.6 L1930 1061.7 L1931 1061.7 L1932.5 1061.8 L1934 1061.9 L1935.5 1061.8 L1937 1061.7 L1938.5 1061.9 L1940 1062 L1941.5 1062 L1943 1061.8 L1944.4 1061.8 L1944.5 1061.8 L1945 1061.9 L1946 1061.8 L1947.3 1061.6 L1947.5 1061.6 L1949 1061.7 L1950 1061.7 L1950.5 1061.8 L1950.8 1061.8 L1951.1 1061.6 L1952 1061.6 L1952.6 1061.7 L1953.5 1061.7 L1954.3 1061.8 L1955 1061.5 L1956.5 1061.5 L1956.8 1061.7 L1958 1061.7 L1958.5 1061.7 L1959.5 1061.8 L1961 1061.7 L1962.5 1061.7 L1964 1061.6 L1965.4 1061.6 L1965.5 1061.5 L1967 1061.6 L1968.2 1061.7 L1968.5 1061.7 L1970 1061.4 L1971.3 1061.5 L1971.5 1061.7 L1973 1061.7 L1973.9 1061.6 L1974.5 1061.5 L1975.6 1061.6 L1975.9 1061.8 L1976 1061.9 L1977.5 1061.8 L1979 1061.8 L1979.8 1061.8 L1980.5 1061.7 L1981.6 1061.6 L1982 1061.7 L1983.5 1061.7 L1984 1061.7 L1985 1061.6 L1985.8 1061.5 L1986.5 1061.7 L1988 1061.7 L1988.4 1061.6 L1989.5 1061.5 L1990 1061.5 L1990.2 1061.6 L1990.9 1061.8 L1991 1061.8 L1992.1 1061.7 L1992.5 1061.6 L1994 1061.6 L1995.5 1061.7 L1997 1061.8 L1998.5 1061.7 L2000 1061.6 L2001.2 1061.6 L2001.5 1061.6 L2002.6 1061.5 L2003 1061.4 L2004.5 1061.4 L2005.4 1061.5 L2006 1061.7 L2007.5 1061.7 L2009 1061.6 L2009.7 1061.4 L2010.5 1061.3 L2012 1061.1 L2013.5 1061.2 L2014 1061.4 L2014.6 1061.4 L2015 1061.6 L2016.5 1061.6 L2017.6 1061.6 L2018 1061.6 L2018.2 1061.6 L2019.5 1061.5 L2021 1061.5 L2022.5 1061.5 L2024 1061.4 L2024.2 1061.4 L2024.7 1061.4 L2025.5 1061.4 L2026.7 1061.4 L2027 1061.4 L2028.5 1061 L2029.3 1060.9 L2030 1060.6 L2031.5 1060.2 L2033 1059.9 L2034.5 1059.6 L2035.3 1059.3 L2036 1059.2 L2036.9 1059.2 L2037.5 1059.2 L2039 1059.1 L2040 1059.1 L2040.5 1059.1 L2042 1059 L2043.5 1058.8 L2043.8 1058.7 L2045 1058.6 L2046.4 1058.5 L2046.5 1058.6 L2047 1058.7 L2048 1058.7 L2049.5 1058.5 L2051 1058.3 L2051.9 1058.2 L2052.3 1058.3 L2052.4 1058.4 L2052.5 1058.4 L2054 1058.3 L2055.5 1058.2 L2055.9 1058.1 L2057 1058.1 L2058.5 1058.1 L2059.4 1057.9 L2059.9 1058 L2060 1058.1 L2060.8 1058 L2061.5 1057.9 L2063 1057.8 L2064.5 1057.7 L2064.6 1057.5 L2066 1057.3 L2066.4 1057.5 L2067.5 1057.6 L2067.8 1057.6 L2069 1057.3 L2069.4 1057.2 L2070.5 1057.3 L2071 1057.3 L2072 1057.1 L2073.5 1056.9 L2075 1056.9 L2076.5 1056.9 L2076.6 1057 L2077.4 1056.9 L2077.9 1056.8 L2078 1056.7 L2078.2 1056.7 L2079.5 1056.7 L2081 1056.7 L2082.1 1056.7 L2082.5 1056.5 L2084 1056.4 L2085.5 1056.5 L2086.1 1056.5 L2086.4 1056.2 L2087 1056 L2087.4 1056.2 L2087.7 1056.4 L2088.1 1056.3 L2088.5 1056.3 L2089.3 1056.4 L2090 1056.6 L2090.7 1056.8 L2090.9 1056.7 L2091.5 1056.8 L2092 1056.9 L2092.4 1057 L2092.5 1057 L2093 1057.2 L2093.8 1057.3 L2094.5 1057.5 L2094.9 1057.7 L2095 1057.6 L2095.6 1057.6 L2096 1057.7 L2097.5 1057.8 L2098.4 1057.8 L2098.8 1057.9 L2099 1057.9 L2099.3 1057.9 L2100.5 1057.8 L2102 1057.8 L2103 1058.1 L2103.5 1058.3 L2103.6 1058.2 L2105 1058.1 L2105.2 1058 L2106.5 1057.9 L2106.6 1058.1 L2108 1058.2 L2109.5 1058.1 L2111 1058 L2111.5 1058.1 L2112 1058.3 L2112.5 1058.4 L2113 1058.3 L2113.1 1058.3 L2113.9 1058.5 L2114 1058.4 L2114.7 1058.2 L2115.5 1058.2 L2116.2 1058.3 L2117 1058.5 L2118.5 1058.6 L2119.4 1058.7 L2120 1058.8 L2120.3 1058.6 L2120.5 1058.6 L2121.3 1058.8 L2121.5 1058.8 L2122.2 1058.7 L2123 1058.7 L2124.3 1058.8 L2124.5 1058.7 L2126 1058.6 L2127.4 1058.8 L2127.5 1059.1 L2129 1059.2 L2129.5 1059.1 L2129.8 1059 L2130.5 1059.3 L2131.6 1059.3 L2132 1059.1 L2132.6 1059 L2132.9 1059.1 L2133.2 1059.3 L2133.4 1059.2 L2133.5 1059.1 L2133.6 1059.2 L2134.1 1059.4 L2135 1059.3 L2135.7 1059.4 L2136.5 1059.4 L2136.8 1059.4 L2138 1059.4 L2139.5 1059.6 L2139.6 1059.7 L2140 1059.5 L2141 1059.3 L2141.4 1059.3 L2142.4 1059.4 L2142.5 1059.5 L2142.6 1059.5 L2144 1059.4 L2145.5 1059.4 L2146.9 1059.5 L2147 1059.6 L2147.2 1059.5 L2148.5 1059.6 L2149.6 1059.6 L2150 1059.5 L2150.2 1059.5 L2151.5 1059.6 L2153 1059.5 L2154.5 1059.4 L2154.7 1059.4 L2155.1 1059.4 L2156 1059.4 L2156.2 1059.5 L2157.5 1059.6 L2157.7 1059.6 L2157.9 1059.7 L2159 1059.6 L2159.3 1059.5 L2160.5 1059.5 L2160.8 1059.5 L2161.5 1059.6 L2162 1059.6 L2162.4 1059.6 L2163.5 1059.6 L2163.8 1059.6 L2165 1059.5 L2166.1 1059.4 L2166.3 1059.6 L2166.5 1059.6 L2168 1059.6 L2169.5 1059.5 L2169.7 1059.5 L2169.8 1059.5 L2170.1 1059.6 L2171 1059.6 L2172.5 1059.6 L2172.8 1059.6 L2173.9 1059.6 L2174 1059.6 L2174.3 1059.6 L2175.5 1059.7 L2177 1059.8 L2177.7 1059.7 L2178 1059.6 L2178.5 1059.5 L2180 1059.5 L2180.4 1059.5 L2181.5 1059.4 L2181.9 1059.5 L2183 1059.6 L2184.5 1059.7 L2186 1059.6 L2186.2 1059.5 L2187.2 1059.4 L2187.5 1059.5 L2187.9 1059.6 L2189 1059.6 L2189.4 1059.6 L2190.5 1059.6 L2191 1059.6 L2192 1059.7 L2192.6 1059.6 L2193.5 1059.7 L2193.9 1059.9 L2195 1059.8 L2195.5 1059.7 L2196.5 1059.7 L2197.7 1059.6 L2198 1059.7 L2199 1059.9 L2199.5 1059.9 L2200 1059.6 L2201 1059.8 L2201.5 1059.9 L2201.8 1059.7 L2202.5 1059.8 L2204 1059.8 L2205.5 1059.7 L2206.3 1059.7 L2207.5 1059.7" fill="none" stroke="#5a82b4" stroke-width="2.6" stroke-linejoin="round"/>
<path d="M208 1064 L560 1064 L860 1064 L898 1064 L899 1064 L966 1064 L968 1064 L1028 1064 L1028.5 1064 L1030 1064 L1033 1064 L1035 1064 L1036 1064 L1039 1064 L1042 1064 L1045 1064 L1048 1064 L1051 1064 L1054 1064 L1057 1064 L1060 1064 L1063 1064 L1065 1064 L1066 1064 L1069 1064 L1072 1064 L1075 1064 L1078 1064 L1081 1064 L1084 1064 L1087 1064 L1090 1064 L1093 1064 L1096 1064 L1099 1064 L1102 1064 L1105 1064 L1106 1064 L1108 1064 L1111 1064 L1114 1064 L1117 1064 L1120 1064 L1123 1064 L1126 1064 L1128 1064 L1129 1064 L1132 1064 L1133 1064 L1135 1064 L1138 1064 L1141 1064 L1144 1064 L1147 1064 L1150 1064 L1153 1064 L1155 1064 L1300 1064 L1500 1063.8 L1600 1063.6 L1897 1063.3 L1898 1063.3 L1899.1 1063.3 L1899.5 1063.3 L1901 1063.3 L1902.5 1063.3 L1904 1063.3 L1905.5 1063.3 L1907 1063.3 L1908.5 1063.3 L1909.1 1063.3 L1910 1063.3 L1911.5 1063.3 L1913 1063.3 L1913.9 1063.3 L1914.5 1063.3 L1916 1063.3 L1917 1063.3 L1917.5 1063.3 L1918.6 1063.3 L1919 1063.3 L1919.5 1063.3 L1920 1063.3 L1920.5 1063.3 L1922 1063.3 L1923.5 1063.3 L1925 1063.3 L1926.5 1063.3 L1928 1063.3 L1929.5 1063.3 L1930 1063.3 L1931 1063.3 L1932.5 1063.3 L1934 1063.3 L1935.5 1063.3 L1937 1063.3 L1938.5 1063.3 L1940 1063.3 L1941.5 1063.3 L1943 1063.3 L1944.4 1063.3 L1944.5 1063.3 L1945 1063.3 L1946 1063.3 L1947.3 1063.3 L1947.5 1063.3 L1949 1063.3 L1950 1063.3 L1950.5 1063.3 L1950.8 1063.3 L1951.1 1063.3 L1952 1063.3 L1952.6 1063.3 L1953.5 1063.3 L1954.3 1063.3 L1955 1063.3 L1956.5 1063.3 L1956.8 1063.3 L1958 1063.3 L1958.5 1063.3 L1959.5 1063.3 L1961 1063.3 L1962.5 1063.3 L1964 1063.3 L1965.4 1063.3 L1965.5 1063.3 L1967 1063.3 L1968.2 1063.3 L1968.5 1063.3 L1970 1063.3 L1971.3 1063.3 L1971.5 1063.3 L1973 1063.3 L1973.9 1063.3 L1974.5 1063.3 L1975.6 1063.2 L1975.9 1063.2 L1976 1063.2 L1977.5 1063.2 L1979 1063.2 L1979.8 1063.2 L1980.5 1063.2 L1981.6 1063.2 L1982 1063.2 L1983.5 1063.2 L1984 1063.2 L1985 1063.2 L1985.8 1063.2 L1986.5 1063.2 L1988 1063.2 L1988.4 1063.2 L1989.5 1063.2 L1990 1063.2 L1990.2 1063.2 L1990.9 1063.2 L1991 1063.2 L1992.1 1063.2 L1992.5 1063.2 L1994 1063.2 L1995.5 1063.2 L1997 1063.2 L1998.5 1063.2 L2000 1063.2 L2001.2 1063.2 L2001.5 1063.2 L2002.6 1063.2 L2003 1063.2 L2004.5 1063.2 L2005.4 1063.2 L2006 1063.2 L2007.5 1063.2 L2009 1063.2 L2009.7 1063.2 L2010.5 1063.2 L2012 1063.2 L2013.5 1063.2 L2014 1063.2 L2014.6 1063.2 L2015 1063.2 L2016.5 1063.2 L2017.6 1063.2 L2018 1063.2 L2018.2 1063.2 L2019.5 1063.2 L2021 1063.2 L2022.5 1063.2 L2024 1063.2 L2024.2 1063.2 L2024.7 1063.2 L2025.5 1063.2 L2026.7 1063.2 L2027 1063.2 L2028.5 1063.2 L2029.3 1063.2 L2030 1063.2 L2031.5 1063.2 L2033 1063.2 L2034.5 1063.2 L2035.3 1063.2 L2036 1063.2 L2036.9 1063.2 L2037.5 1063.2 L2039 1063.2 L2040 1063.2 L2040.5 1063.2 L2042 1063.2 L2043.5 1063.2 L2043.8 1063.2 L2045 1063.2 L2046.4 1063.2 L2046.5 1063.2 L2047 1063.2 L2048 1063.2 L2049.5 1063.2 L2051 1063.2 L2051.9 1063.2 L2052.3 1063.2 L2052.4 1063.2 L2052.5 1063.2 L2054 1063.2 L2055.5 1063.2 L2055.9 1063.2 L2057 1063.2 L2058.5 1063.2 L2059.4 1063.2 L2059.9 1063.2 L2060 1063.2 L2060.8 1063.2 L2061.5 1063.2 L2063 1063.2 L2064.5 1063.2 L2064.6 1063.2 L2066 1063.2 L2066.4 1063.2 L2067.5 1063.2 L2067.8 1063.2 L2069 1063.2 L2069.4 1063.2 L2070.5 1063.2 L2071 1063.2 L2072 1063.2 L2073.5 1063.2 L2075 1063.2 L2076.5 1063.2 L2076.6 1063.2 L2077.4 1063.2 L2077.9 1063.2 L2078 1063.2 L2078.2 1063.2 L2079.5 1063.2 L2081 1063.2 L2082.1 1063.2 L2082.5 1063.2 L2084 1063.2 L2085.5 1063.2 L2086.1 1063.2 L2086.4 1063.2 L2087 1063.2 L2087.4 1063.2 L2087.7 1063.2 L2088.1 1063.2 L2088.5 1063.2 L2089.3 1063.2 L2090 1063.2 L2090.7 1063.2 L2090.9 1063.2 L2091.5 1063.2 L2092 1063.2 L2092.4 1063.2 L2092.5 1063.2 L2093 1063.2 L2093.8 1063.2 L2094.5 1063.2 L2094.9 1063.2 L2095 1063.2 L2095.6 1063.2 L2096 1063.2 L2097.5 1063.2 L2098.4 1063.2 L2098.8 1063.2 L2099 1063.2 L2099.3 1063.2 L2100.5 1063.2 L2102 1063.2 L2103 1063.2 L2103.5 1063.2 L2103.6 1063.2 L2105 1063.2 L2105.2 1063.2 L2106.5 1063.2 L2106.6 1063.2 L2108 1063.2 L2109.5 1063.2 L2111 1063.2 L2111.5 1063.2 L2112 1063.2 L2112.5 1063.2 L2113 1063.2 L2113.1 1063.2 L2113.9 1063.2 L2114 1063.2 L2114.7 1063.2 L2115.5 1063.2 L2116.2 1063.2 L2117 1063.2 L2118.5 1063.2 L2119.4 1063.2 L2120 1063.2 L2120.3 1063.2 L2120.5 1063.2 L2121.3 1063.2 L2121.5 1063.2 L2122.2 1063.2 L2123 1063.2 L2124.3 1063.2 L2124.5 1063.2 L2126 1063.2 L2127.4 1063.2 L2127.5 1063.2 L2129 1063.2 L2129.5 1063.2 L2129.8 1063.2 L2130.5 1063.1 L2131.6 1063.1 L2132 1063.1 L2132.6 1063.1 L2132.9 1063.1 L2133.2 1063.1 L2133.4 1063.1 L2133.5 1063.1 L2133.6 1063.1 L2134.1 1063.1 L2135 1063.1 L2135.7 1063.1 L2136.5 1063.1 L2136.8 1063.1 L2138 1063.1 L2139.5 1063.1 L2139.6 1063.1 L2140 1063.1 L2141 1063.1 L2141.4 1063.1 L2142.4 1063.1 L2142.5 1063.1 L2142.6 1063.1 L2144 1063.1 L2145.5 1063.1 L2146.9 1063.1 L2147 1063.1 L2147.2 1063.1 L2148.5 1063.1 L2149.6 1063.1 L2150 1063.1 L2150.2 1063.1 L2151.5 1063.1 L2153 1063.1 L2154.5 1063.1 L2154.7 1063.1 L2155.1 1063.1 L2156 1063.1 L2156.2 1063.1 L2157.5 1063.1 L2157.7 1063.1 L2157.9 1063.1 L2159 1063.1 L2159.3 1063.1 L2160.5 1063.1 L2160.8 1063.1 L2161.5 1063.1 L2162 1063.1 L2162.4 1063.1 L2163.5 1063.1 L2163.8 1063.1 L2165 1063.1 L2166.1 1063.1 L2166.3 1063.1 L2166.5 1063.1 L2168 1063.1 L2169.5 1063.1 L2169.7 1063.1 L2169.8 1063.1 L2170.1 1063.1 L2171 1063.1 L2172.5 1063.1 L2172.8 1063.1 L2173.9 1063.1 L2174 1063.1 L2174.3 1063.1 L2175.5 1063.1 L2177 1063.1 L2177.7 1063.1 L2178 1063.1 L2178.5 1063.1 L2180 1063.1 L2180.4 1063.1 L2181.5 1063.1 L2181.9 1063.1 L2183 1063.1 L2184.5 1063.1 L2186 1063.1 L2186.2 1063.1 L2187.2 1063.1 L2187.5 1063.1 L2187.9 1063.1 L2189 1063.1 L2189.4 1063.1 L2190.5 1063.1 L2191 1063.1 L2192 1063.1 L2192.6 1063.1 L2193.5 1063.1 L2193.9 1063.1 L2195 1063.1 L2195.5 1063.1 L2196.5 1063.1 L2197.7 1063.1 L2198 1063.1 L2199 1063.1 L2199.5 1063.1 L2200 1063.1 L2201 1063.1 L2201.5 1063.1 L2201.8 1063.1 L2202.5 1063.1 L2204 1063.1 L2205.5 1063.1 L2206.3 1063.1 L2207.5 1063.1 L2207.5 1064 L2206.3 1064 L2205.5 1064 L2204 1064 L2202.5 1064 L2201.8 1064 L2201.5 1064 L2201 1064 L2200 1064 L2199.5 1064 L2199 1064 L2198 1064 L2197.7 1064 L2196.5 1064 L2195.5 1064 L2195 1064 L2193.9 1064 L2193.5 1064 L2192.6 1064 L2192 1064 L2191 1064 L2190.5 1064 L2189.4 1064 L2189 1064 L2187.9 1064 L2187.5 1064 L2187.2 1064 L2186.2 1064 L2186 1064 L2184.5 1064 L2183 1064 L2181.9 1064 L2181.5 1064 L2180.4 1064 L2180 1064 L2178.5 1064 L2178 1064 L2177.7 1064 L2177 1064 L2175.5 1064 L2174.3 1064 L2174 1064 L2173.9 1064 L2172.8 1064 L2172.5 1064 L2171 1064 L2170.1 1064 L2169.8 1064 L2169.7 1064 L2169.5 1064 L2168 1064 L2166.5 1064 L2166.3 1064 L2166.1 1064 L2165 1064 L2163.8 1064 L2163.5 1064 L2162.4 1064 L2162 1064 L2161.5 1064 L2160.8 1064 L2160.5 1064 L2159.3 1064 L2159 1064 L2157.9 1064 L2157.7 1064 L2157.5 1064 L2156.2 1064 L2156 1064 L2155.1 1064 L2154.7 1064 L2154.5 1064 L2153 1064 L2151.5 1064 L2150.2 1064 L2150 1064 L2149.6 1064 L2148.5 1064 L2147.2 1064 L2147 1064 L2146.9 1064 L2145.5 1064 L2144 1064 L2142.6 1064 L2142.5 1064 L2142.4 1064 L2141.4 1064 L2141 1064 L2140 1064 L2139.6 1064 L2139.5 1064 L2138 1064 L2136.8 1064 L2136.5 1064 L2135.7 1064 L2135 1064 L2134.1 1064 L2133.6 1064 L2133.5 1064 L2133.4 1064 L2133.2 1064 L2132.9 1064 L2132.6 1064 L2132 1064 L2131.6 1064 L2130.5 1064 L2129.8 1064 L2129.5 1064 L2129 1064 L2127.5 1064 L2127.4 1064 L2126 1064 L2124.5 1064 L2124.3 1064 L2123 1064 L2122.2 1064 L2121.5 1064 L2121.3 1064 L2120.5 1064 L2120.3 1064 L2120 1064 L2119.4 1064 L2118.5 1064 L2117 1064 L2116.2 1064 L2115.5 1064 L2114.7 1064 L2114 1064 L2113.9 1064 L2113.1 1064 L2113 1064 L2112.5 1064 L2112 1064 L2111.5 1064 L2111 1064 L2109.5 1064 L2108 1064 L2106.6 1064 L2106.5 1064 L2105.2 1064 L2105 1064 L2103.6 1064 L2103.5 1064 L2103 1064 L2102 1064 L2100.5 1064 L2099.3 1064 L2099 1064 L2098.8 1064 L2098.4 1064 L2097.5 1064 L2096 1064 L2095.6 1064 L2095 1064 L2094.9 1064 L2094.5 1064 L2093.8 1064 L2093 1064 L2092.5 1064 L2092.4 1064 L2092 1064 L2091.5 1064 L2090.9 1064 L2090.7 1064 L2090 1064 L2089.3 1064 L2088.5 1064 L2088.1 1064 L2087.7 1064 L2087.4 1064 L2087 1064 L2086.4 1064 L2086.1 1064 L2085.5 1064 L2084 1064 L2082.5 1064 L2082.1 1064 L2081 1064 L2079.5 1064 L2078.2 1064 L2078 1064 L2077.9 1064 L2077.4 1064 L2076.6 1064 L2076.5 1064 L2075 1064 L2073.5 1064 L2072 1064 L2071 1064 L2070.5 1064 L2069.4 1064 L2069 1064 L2067.8 1064 L2067.5 1064 L2066.4 1064 L2066 1064 L2064.6 1064 L2064.5 1064 L2063 1064 L2061.5 1064 L2060.8 1064 L2060 1064 L2059.9 1064 L2059.4 1064 L2058.5 1064 L2057 1064 L2055.9 1064 L2055.5 1064 L2054 1064 L2052.5 1064 L2052.4 1064 L2052.3 1064 L2051.9 1064 L2051 1064 L2049.5 1064 L2048 1064 L2047 1064 L2046.5 1064 L2046.4 1064 L2045 1064 L2043.8 1064 L2043.5 1064 L2042 1064 L2040.5 1064 L2040 1064 L2039 1064 L2037.5 1064 L2036.9 1064 L2036 1064 L2035.3 1064 L2034.5 1064 L2033 1064 L2031.5 1064 L2030 1064 L2029.3 1064 L2028.5 1064 L2027 1064 L2026.7 1064 L2025.5 1064 L2024.7 1064 L2024.2 1064 L2024 1064 L2022.5 1064 L2021 1064 L2019.5 1064 L2018.2 1064 L2018 1064 L2017.6 1064 L2016.5 1064 L2015 1064 L2014.6 1064 L2014 1064 L2013.5 1064 L2012 1064 L2010.5 1064 L2009.7 1064 L2009 1064 L2007.5 1064 L2006 1064 L2005.4 1064 L2004.5 1064 L2003 1064 L2002.6 1064 L2001.5 1064 L2001.2 1064 L2000 1064 L1998.5 1064 L1997 1064 L1995.5 1064 L1994 1064 L1992.5 1064 L1992.1 1064 L1991 1064 L1990.9 1064 L1990.2 1064 L1990 1064 L1989.5 1064 L1988.4 1064 L1988 1064 L1986.5 1064 L1985.8 1064 L1985 1064 L1984 1064 L1983.5 1064 L1982 1064 L1981.6 1064 L1980.5 1064 L1979.8 1064 L1979 1064 L1977.5 1064 L1976 1064 L1975.9 1064 L1975.6 1064 L1974.5 1064 L1973.9 1064 L1973 1064 L1971.5 1064 L1971.3 1064 L1970 1064 L1968.5 1064 L1968.2 1064 L1967 1064 L1965.5 1064 L1965.4 1064 L1964 1064 L1962.5 1064 L1961 1064 L1959.5 1064 L1958.5 1064 L1958 1064 L1956.8 1064 L1956.5 1064 L1955 1064 L1954.3 1064 L1953.5 1064 L1952.6 1064 L1952 1064 L1951.1 1064 L1950.8 1064 L1950.5 1064 L1950 1064 L1949 1064 L1947.5 1064 L1947.3 1064 L1946 1064 L1945 1064 L1944.5 1064 L1944.4 1064 L1943 1064 L1941.5 1064 L1940 1064 L1938.5 1064 L1937 1064 L1935.5 1064 L1934 1064 L1932.5 1064 L1931 1064 L1930 1064 L1929.5 1064 L1928 1064 L1926.5 1064 L1925 1064 L1923.5 1064 L1922 1064 L1920.5 1064 L1920 1064 L1919.5 1064 L1919 1064 L1918.6 1064 L1917.5 1064 L1917 1064 L1916 1064 L1914.5 1064 L1913.9 1064 L1913 1064 L1911.5 1064 L1910 1064 L1909.1 1064 L1908.5 1064 L1907 1064 L1905.5 1064 L1904 1064 L1902.5 1064 L1901 1064 L1899.5 1064 L1899.1 1064 L1898 1064 L1897 1064 L1600 1064 L1500 1064 L1300 1064 L1155 1064 L1153 1064 L1150 1064 L1147 1064 L1144 1064 L1141 1064 L1138 1064 L1135 1064 L1133 1064 L1132 1064 L1129 1064 L1128 1064 L1126 1064 L1123 1064 L1120 1064 L1117 1064 L1114 1064 L1111 1064 L1108 1064 L1106 1064 L1105 1064 L1102 1064 L1099 1064 L1096 1064 L1093 1064 L1090 1064 L1087 1064 L1084 1064 L1081 1064 L1078 1064 L1075 1064 L1072 1064 L1069 1064 L1066 1064 L1065 1064 L1063 1064 L1060 1064 L1057 1064 L1054 1064 L1051 1064 L1048 1064 L1045 1064 L1042 1064 L1039 1064 L1036 1064 L1035 1064 L1033 1064 L1030 1064 L1028.5 1064 L1028 1064 L968 1064 L966 1064 L899 1064 L898 1064 L860 1064 L560 1064 L208 1064 Z" fill="url(#g0)"/>
<path d="M1300 1064 L1500 1063.8 L1600 1063.6 L1897 1063.3 L1898 1063.3 L1899.1 1063.3 L1899.5 1063.3 L1901 1063.3 L1902.5 1063.3 L1904 1063.3 L1905.5 1063.3 L1907 1063.3 L1908.5 1063.3 L1909.1 1063.3 L1910 1063.3 L1911.5 1063.3 L1913 1063.3 L1913.9 1063.3 L1914.5 1063.3 L1916 1063.3 L1917 1063.3 L1917.5 1063.3 L1918.6 1063.3 L1919 1063.3 L1919.5 1063.3 L1920 1063.3 L1920.5 1063.3 L1922 1063.3 L1923.5 1063.3 L1925 1063.3 L1926.5 1063.3 L1928 1063.3 L1929.5 1063.3 L1930 1063.3 L1931 1063.3 L1932.5 1063.3 L1934 1063.3 L1935.5 1063.3 L1937 1063.3 L1938.5 1063.3 L1940 1063.3 L1941.5 1063.3 L1943 1063.3 L1944.4 1063.3 L1944.5 1063.3 L1945 1063.3 L1946 1063.3 L1947.3 1063.3 L1947.5 1063.3 L1949 1063.3 L1950 1063.3 L1950.5 1063.3 L1950.8 1063.3 L1951.1 1063.3 L1952 1063.3 L1952.6 1063.3 L1953.5 1063.3 L1954.3 1063.3 L1955 1063.3 L1956.5 1063.3 L1956.8 1063.3 L1958 1063.3 L1958.5 1063.3 L1959.5 1063.3 L1961 1063.3 L1962.5 1063.3 L1964 1063.3 L1965.4 1063.3 L1965.5 1063.3 L1967 1063.3 L1968.2 1063.3 L1968.5 1063.3 L1970 1063.3 L1971.3 1063.3 L1971.5 1063.3 L1973 1063.3 L1973.9 1063.3 L1974.5 1063.3 L1975.6 1063.2 L1975.9 1063.2 L1976 1063.2 L1977.5 1063.2 L1979 1063.2 L1979.8 1063.2 L1980.5 1063.2 L1981.6 1063.2 L1982 1063.2 L1983.5 1063.2 L1984 1063.2 L1985 1063.2 L1985.8 1063.2 L1986.5 1063.2 L1988 1063.2 L1988.4 1063.2 L1989.5 1063.2 L1990 1063.2 L1990.2 1063.2 L1990.9 1063.2 L1991 1063.2 L1992.1 1063.2 L1992.5 1063.2 L1994 1063.2 L1995.5 1063.2 L1997 1063.2 L1998.5 1063.2 L2000 1063.2 L2001.2 1063.2 L2001.5 1063.2 L2002.6 1063.2 L2003 1063.2 L2004.5 1063.2 L2005.4 1063.2 L2006 1063.2 L2007.5 1063.2 L2009 1063.2 L2009.7 1063.2 L2010.5 1063.2 L2012 1063.2 L2013.5 1063.2 L2014 1063.2 L2014.6 1063.2 L2015 1063.2 L2016.5 1063.2 L2017.6 1063.2 L2018 1063.2 L2018.2 1063.2 L2019.5 1063.2 L2021 1063.2 L2022.5 1063.2 L2024 1063.2 L2024.2 1063.2 L2024.7 1063.2 L2025.5 1063.2 L2026.7 1063.2 L2027 1063.2 L2028.5 1063.2 L2029.3 1063.2 L2030 1063.2 L2031.5 1063.2 L2033 1063.2 L2034.5 1063.2 L2035.3 1063.2 L2036 1063.2 L2036.9 1063.2 L2037.5 1063.2 L2039 1063.2 L2040 1063.2 L2040.5 1063.2 L2042 1063.2 L2043.5 1063.2 L2043.8 1063.2 L2045 1063.2 L2046.4 1063.2 L2046.5 1063.2 L2047 1063.2 L2048 1063.2 L2049.5 1063.2 L2051 1063.2 L2051.9 1063.2 L2052.3 1063.2 L2052.4 1063.2 L2052.5 1063.2 L2054 1063.2 L2055.5 1063.2 L2055.9 1063.2 L2057 1063.2 L2058.5 1063.2 L2059.4 1063.2 L2059.9 1063.2 L2060 1063.2 L2060.8 1063.2 L2061.5 1063.2 L2063 1063.2 L2064.5 1063.2 L2064.6 1063.2 L2066 1063.2 L2066.4 1063.2 L2067.5 1063.2 L2067.8 1063.2 L2069 1063.2 L2069.4 1063.2 L2070.5 1063.2 L2071 1063.2 L2072 1063.2 L2073.5 1063.2 L2075 1063.2 L2076.5 1063.2 L2076.6 1063.2 L2077.4 1063.2 L2077.9 1063.2 L2078 1063.2 L2078.2 1063.2 L2079.5 1063.2 L2081 1063.2 L2082.1 1063.2 L2082.5 1063.2 L2084 1063.2 L2085.5 1063.2 L2086.1 1063.2 L2086.4 1063.2 L2087 1063.2 L2087.4 1063.2 L2087.7 1063.2 L2088.1 1063.2 L2088.5 1063.2 L2089.3 1063.2 L2090 1063.2 L2090.7 1063.2 L2090.9 1063.2 L2091.5 1063.2 L2092 1063.2 L2092.4 1063.2 L2092.5 1063.2 L2093 1063.2 L2093.8 1063.2 L2094.5 1063.2 L2094.9 1063.2 L2095 1063.2 L2095.6 1063.2 L2096 1063.2 L2097.5 1063.2 L2098.4 1063.2 L2098.8 1063.2 L2099 1063.2 L2099.3 1063.2 L2100.5 1063.2 L2102 1063.2 L2103 1063.2 L2103.5 1063.2 L2103.6 1063.2 L2105 1063.2 L2105.2 1063.2 L2106.5 1063.2 L2106.6 1063.2 L2108 1063.2 L2109.5 1063.2 L2111 1063.2 L2111.5 1063.2 L2112 1063.2 L2112.5 1063.2 L2113 1063.2 L2113.1 1063.2 L2113.9 1063.2 L2114 1063.2 L2114.7 1063.2 L2115.5 1063.2 L2116.2 1063.2 L2117 1063.2 L2118.5 1063.2 L2119.4 1063.2 L2120 1063.2 L2120.3 1063.2 L2120.5 1063.2 L2121.3 1063.2 L2121.5 1063.2 L2122.2 1063.2 L2123 1063.2 L2124.3 1063.2 L2124.5 1063.2 L2126 1063.2 L2127.4 1063.2 L2127.5 1063.2 L2129 1063.2 L2129.5 1063.2 L2129.8 1063.2 L2130.5 1063.1 L2131.6 1063.1 L2132 1063.1 L2132.6 1063.1 L2132.9 1063.1 L2133.2 1063.1 L2133.4 1063.1 L2133.5 1063.1 L2133.6 1063.1 L2134.1 1063.1 L2135 1063.1 L2135.7 1063.1 L2136.5 1063.1 L2136.8 1063.1 L2138 1063.1 L2139.5 1063.1 L2139.6 1063.1 L2140 1063.1 L2141 1063.1 L2141.4 1063.1 L2142.4 1063.1 L2142.5 1063.1 L2142.6 1063.1 L2144 1063.1 L2145.5 1063.1 L2146.9 1063.1 L2147 1063.1 L2147.2 1063.1 L2148.5 1063.1 L2149.6 1063.1 L2150 1063.1 L2150.2 1063.1 L2151.5 1063.1 L2153 1063.1 L2154.5 1063.1 L2154.7 1063.1 L2155.1 1063.1 L2156 1063.1 L2156.2 1063.1 L2157.5 1063.1 L2157.7 1063.1 L2157.9 1063.1 L2159 1063.1 L2159.3 1063.1 L2160.5 1063.1 L2160.8 1063.1 L2161.5 1063.1 L2162 1063.1 L2162.4 1063.1 L2163.5 1063.1 L2163.8 1063.1 L2165 1063.1 L2166.1 1063.1 L2166.3 1063.1 L2166.5 1063.1 L2168 1063.1 L2169.5 1063.1 L2169.7 1063.1 L2169.8 1063.1 L2170.1 1063.1 L2171 1063.1 L2172.5 1063.1 L2172.8 1063.1 L2173.9 1063.1 L2174 1063.1 L2174.3 1063.1 L2175.5 1063.1 L2177 1063.1 L2177.7 1063.1 L2178 1063.1 L2178.5 1063.1 L2180 1063.1 L2180.4 1063.1 L2181.5 1063.1 L2181.9 1063.1 L2183 1063.1 L2184.5 1063.1 L2186 1063.1 L2186.2 1063.1 L2187.2 1063.1 L2187.5 1063.1 L2187.9 1063.1 L2189 1063.1 L2189.4 1063.1 L2190.5 1063.1 L2191 1063.1 L2192 1063.1 L2192.6 1063.1 L2193.5 1063.1 L2193.9 1063.1 L2195 1063.1 L2195.5 1063.1 L2196.5 1063.1 L2197.7 1063.1 L2198 1063.1 L2199 1063.1 L2199.5 1063.1 L2200 1063.1 L2201 1063.1 L2201.5 1063.1 L2201.8 1063.1 L2202.5 1063.1 L2204 1063.1 L2205.5 1063.1 L2206.3 1063.1 L2207.5 1063.1" fill="none" stroke="#7b30d9" stroke-width="2.6" stroke-linejoin="round"/>
<line x1="190" y1="500" x2="190" y2="1066" stroke="#d6ddeb" stroke-width="2"/>
<line x1="189" y1="1065" x2="2227" y2="1065" stroke="#d6ddeb" stroke-width="2"/>
<line x1="284" y1="1066" x2="284" y2="1084" stroke="#a3a3a3" stroke-width="2"/>
<line x1="558" y1="1066" x2="558" y2="1084" stroke="#a3a3a3" stroke-width="2"/>
<line x1="832" y1="1066" x2="832" y2="1084" stroke="#a3a3a3" stroke-width="2"/>
<line x1="1106" y1="1066" x2="1106" y2="1084" stroke="#a3a3a3" stroke-width="2"/>
<line x1="1380" y1="1066" x2="1380" y2="1084" stroke="#a3a3a3" stroke-width="2"/>
<line x1="1654" y1="1066" x2="1654" y2="1084" stroke="#a3a3a3" stroke-width="2"/>
<line x1="1930" y1="1066" x2="1930" y2="1084" stroke="#a3a3a3" stroke-width="2"/>
<line x1="2204" y1="1066" x2="2204" y2="1084" stroke="#a3a3a3" stroke-width="2"/>
<circle cx="1930" cy="938.8" r="20" fill="#1c3d78" fill-opacity="0.22"/><circle cx="1930" cy="938.8" r="11.6" fill="#1c3d78" stroke="#fff" stroke-width="2.4"/>
<circle cx="1930" cy="1026.2" r="20" fill="#d4a640" fill-opacity="0.25"/><path d="M1930 1013.7 L1942.5 1026.2 L1930 1038.7 L1917.5 1026.2 Z" fill="#d4a640" stroke="#fff" stroke-width="2.6"/>
<circle cx="1930" cy="1049.5" r="20" fill="#6ccbeb" fill-opacity="0.2"/><rect x="1917.5" y="1037.0" width="25" height="25" fill="#6ccbeb" stroke="#fff" stroke-width="2.4"/>
<circle cx="1930" cy="1053.7" r="20" fill="#3b5cf4" fill-opacity="0.12"/><path d="M1917.5 1042.2 L1942.5 1042.2 L1930 1065.2 Z" fill="#3b5cf4" stroke="#fff" stroke-width="2.6"/>
<circle cx="1930" cy="1053.8" r="20" fill="#ec5429" fill-opacity="0.15"/><path d="M1917.5 1042.3 L1942.5 1042.3 L1930 1065.3 Z" fill="#ec5429" stroke="#fff" stroke-width="2.6"/>
<circle cx="1930" cy="1060.4" r="20" fill="#b0c0dc" fill-opacity="0.12"/><circle cx="1930" cy="1060.4" r="11.6" fill="#b0c0dc" stroke="#fff" stroke-width="2.4"/>
<circle cx="1930" cy="1062.6" r="20" fill="#f8d54a" fill-opacity="0.1"/><path d="M1930 1050.1 L1942.5 1062.6 L1930 1075.1 L1917.5 1062.6 Z" fill="#f8d54a" stroke="#fff" stroke-width="2.6"/>
<circle cx="1930" cy="1062.6" r="20" fill="#5a82b4" fill-opacity="0.2"/><rect x="1917.5" y="1050.1" width="25" height="25" fill="#5a82b4" stroke="#fff" stroke-width="2.4"/>
<circle cx="1930" cy="1063.7" r="20" fill="#7b30d9" fill-opacity="0.3"/><path d="M1930 1052.2 L1942.5 1075.2 L1917.5 1075.2 Z" fill="#7b30d9" stroke="#fff" stroke-width="2.6"/>
</svg>
<span class="t" style="left:64.57px;top:483.50px;font-family:'Liberation Sans', sans-serif;font-weight:400;font-size:30px;line-height:36px;color:#94a3b8;-webkit-text-stroke:0.35px #94a3b8;">$25.0B</span>
<span class="t" style="left:64.57px;top:595.50px;font-family:'Liberation Sans', sans-serif;font-weight:400;font-size:30px;line-height:36px;color:#94a3b8;-webkit-text-stroke:0.35px #94a3b8;">$20.0B</span>
<span class="t" style="left:64.57px;top:707.50px;font-family:'Liberation Sans', sans-serif;font-weight:400;font-size:30px;line-height:36px;color:#94a3b8;-webkit-text-stroke:0.35px #94a3b8;">$15.0B</span>
<span class="t" style="left:64.57px;top:821.50px;font-family:'Liberation Sans', sans-serif;font-weight:400;font-size:30px;line-height:36px;color:#94a3b8;-webkit-text-stroke:0.35px #94a3b8;">$10.0B</span>
<span class="t" style="left:81.22px;top:933.50px;font-family:'Liberation Sans', sans-serif;font-weight:400;font-size:30px;line-height:36px;color:#94a3b8;-webkit-text-stroke:0.35px #94a3b8;">$5.0B</span>
<span class="t" style="left:84.15px;top:1047.50px;font-family:'Liberation Sans', sans-serif;font-weight:400;font-size:30px;line-height:36px;color:#94a3b8;-webkit-text-stroke:0.35px #94a3b8;">$0.00</span>
<span class="t" style="left:244.54px;top:1093.05px;font-family:'Liberation Sans', sans-serif;font-weight:400;font-size:31px;line-height:37px;color:#94a3b8;transform:scaleX(0.8853);-webkit-text-stroke:0.35px #94a3b8;">1/1/19</span>
<span class="t" style="left:516.24px;top:1093.05px;font-family:'Liberation Sans', sans-serif;font-weight:400;font-size:31px;line-height:37px;color:#94a3b8;transform:scaleX(0.9287);-webkit-text-stroke:0.35px #94a3b8;">1/1/20</span>
<span class="t" style="left:793.24px;top:1093.05px;font-family:'Liberation Sans', sans-serif;font-weight:400;font-size:31px;line-height:37px;color:#94a3b8;transform:scaleX(0.8873);-webkit-text-stroke:0.35px #94a3b8;">1/1/21</span>
<span class="t" style="left:1065.44px;top:1093.05px;font-family:'Liberation Sans', sans-serif;font-weight:400;font-size:31px;line-height:37px;color:#94a3b8;transform:scaleX(0.9270);-webkit-text-stroke:0.35px #94a3b8;">1/1/22</span>
<span class="t" style="left:1340.48px;top:1093.05px;font-family:'Liberation Sans', sans-serif;font-weight:400;font-size:31px;line-height:37px;color:#94a3b8;transform:scaleX(0.9099);-webkit-text-stroke:0.35px #94a3b8;">1/1/23</span>
<span class="t" style="left:1613.46px;top:1093.05px;font-family:'Liberation Sans', sans-serif;font-weight:400;font-size:31px;line-height:37px;color:#94a3b8;transform:scaleX(0.9217);-webkit-text-stroke:0.35px #94a3b8;">1/1/24</span>
<span class="t" style="left:1888.42px;top:1093.05px;font-family:'Liberation Sans', sans-serif;font-weight:400;font-size:31px;line-height:37px;color:#94a3b8;transform:scaleX(0.9369);-webkit-text-stroke:0.35px #94a3b8;">1/1/25</span>
<span class="t" style="left:2148.86px;top:1093.05px;font-family:'Liberation Sans', sans-serif;font-weight:400;font-size:31px;line-height:37px;color:#94a3b8;transform:scaleX(0.9208);-webkit-text-stroke:0.35px #94a3b8;">1/1/26</span>
<div class="a tip"></div>
<span class="t" style="left:1186.79px;top:628.19px;font-family:'Liberation Mono', monospace;font-weight:400;font-size:44px;line-height:53px;color:#2b2b2b;transform:scaleX(0.8508);-webkit-text-stroke:0.3px #2b2b2b;">12/31/24</span>
<span class="t" style="left:1622.46px;top:636.48px;font-family:'Liberation Mono', monospace;font-weight:400;font-size:30.5px;line-height:37px;color:#2b2b2b;transform:scaleX(0.9442);-webkit-text-stroke:0.25px #2b2b2b;">$5,550,086,000</span>
<div class="a" style="left:1185px;top:690px;width:680px;height:2px;background:#d9dfec"></div>
<div class="a" style="left:1185px;top:717.2px;width:24px;height:24px;border-radius:50%;background:#1c3d78"></div>
<span class="t" style="left:1223.97px;top:712.37px;font-family:'Liberation Sans', sans-serif;font-weight:400;font-size:29.5px;line-height:35px;color:#2b2b2b;transform:scaleX(0.9735);-webkit-text-stroke:0.2px #2b2b2b;">US Treasury Debt</span>
<span class="t" style="left:1622.54px;top:713.48px;font-family:'Liberation Mono', monospace;font-weight:400;font-size:30.5px;line-height:37px;color:#2b2b2b;transform:scaleX(0.9442);-webkit-text-stroke:0.25px #2b2b2b;">$3,872,440,175</span>
<div class="a" style="left:1185px;top:759.4px;width:24px;height:24px;border-radius:50%;background:#d4a640"></div>
<span class="t" style="left:1224.73px;top:754.52px;font-family:'Liberation Sans', sans-serif;font-weight:400;font-size:29.5px;line-height:35px;color:#2b2b2b;transform:scaleX(0.9963);-webkit-text-stroke:0.2px #2b2b2b;">Commodities</span>
<span class="t" style="left:1622.75px;top:755.63px;font-family:'Liberation Mono', monospace;font-weight:400;font-size:30.5px;line-height:37px;color:#2b2b2b;transform:scaleX(0.9442);-webkit-text-stroke:0.25px #2b2b2b;">$1,035,595,502</span>
<div class="a" style="left:1185px;top:801.5px;width:24px;height:24px;border-radius:50%;background:#6ccbeb"></div>
<span class="t" style="left:1223.47px;top:796.67px;font-family:'Liberation Sans', sans-serif;font-weight:400;font-size:29.5px;line-height:35px;color:#2b2b2b;-webkit-text-stroke:0.2px #2b2b2b;">Institutional Alternative Funds</span>
<span class="t" style="left:1657.09px;top:797.78px;font-family:'Liberation Mono', monospace;font-weight:400;font-size:30.5px;line-height:37px;color:#2b2b2b;transform:scaleX(0.9442);-webkit-text-stroke:0.25px #2b2b2b;">$185,691,293</span>
<div class="a" style="left:1185px;top:843.7px;width:24px;height:24px;border-radius:50%;background:#3b5cf4"></div>
<span class="t" style="left:1223.80px;top:838.82px;font-family:'Liberation Sans', sans-serif;font-weight:400;font-size:29.5px;line-height:35px;color:#2b2b2b;transform:scaleX(0.9878);-webkit-text-stroke:0.2px #2b2b2b;">Private Credit</span>
<span class="t" style="left:1691.72px;top:839.93px;font-family:'Liberation Mono', monospace;font-weight:400;font-size:30.5px;line-height:37px;color:#2b2b2b;transform:scaleX(0.9442);-webkit-text-stroke:0.25px #2b2b2b;">$6,290,055</span>
<div class="a" style="left:1185px;top:885.8px;width:24px;height:24px;border-radius:50%;background:#ec5429"></div>
<span class="t" style="left:1223.80px;top:880.97px;font-family:'Liberation Sans', sans-serif;font-weight:400;font-size:29.5px;line-height:35px;color:#2b2b2b;transform:scaleX(0.9845);-webkit-text-stroke:0.2px #2b2b2b;">Public Equity</span>
<span class="t" style="left:1657.31px;top:882.08px;font-family:'Liberation Mono', monospace;font-weight:400;font-size:30.5px;line-height:37px;color:#2b2b2b;transform:scaleX(0.9442);-webkit-text-stroke:0.25px #2b2b2b;">$291,306,322</span>
<div class="a" style="left:1185px;top:928.0px;width:24px;height:24px;border-radius:50%;background:#b0c0dc"></div>
<span class="t" style="left:1224.24px;top:923.12px;font-family:'Liberation Sans', sans-serif;font-weight:400;font-size:29.5px;line-height:35px;color:#2b2b2b;transform:scaleX(0.9858);-webkit-text-stroke:0.2px #2b2b2b;">non-US Government Debt</span>
<span class="t" style="left:1674.08px;top:924.23px;font-family:'Liberation Mono', monospace;font-weight:400;font-size:30.5px;line-height:37px;color:#2b2b2b;transform:scaleX(0.9442);-webkit-text-stroke:0.25px #2b2b2b;">$96,284,044</span>
<div class="a" style="left:1185px;top:970.1px;width:24px;height:24px;border-radius:50%;background:#5a82b4"></div>
<span class="t" style="left:1226.13px;top:965.27px;font-family:'Liberation Sans', sans-serif;font-weight:400;font-size:29.5px;line-height:35px;color:#2b2b2b;transform:scaleX(0.9927);-webkit-text-stroke:0.2px #2b2b2b;">Actively-Managed Strategies</span>
<span class="t" style="left:1674.37px;top:966.38px;font-family:'Liberation Mono', monospace;font-weight:400;font-size:30.5px;line-height:37px;color:#2b2b2b;transform:scaleX(0.9442);-webkit-text-stroke:0.25px #2b2b2b;">$49,974,730</span>
<div class="a" style="left:1185px;top:1012.2px;width:24px;height:24px;border-radius:50%;background:#7b30d9"></div>
<span class="t" style="left:1224.75px;top:1007.42px;font-family:'Liberation Sans', sans-serif;font-weight:400;font-size:29.5px;line-height:35px;color:#2b2b2b;transform:scaleX(0.9854);-webkit-text-stroke:0.2px #2b2b2b;">Corporate Bonds</span>
<span class="t" style="left:1674.66px;top:1008.53px;font-family:'Liberation Mono', monospace;font-weight:400;font-size:30.5px;line-height:37px;color:#2b2b2b;transform:scaleX(0.9442);-webkit-text-stroke:0.25px #2b2b2b;">$12,503,879</span>
<div class="a" style="left:216.8px;top:1170.9px;width:24.2px;height:24.2px;border-radius:50%;background:#1c3d78"></div>
<span class="t" style="left:256.25px;top:1166.27px;font-family:'Liberation Sans', sans-serif;font-weight:400;font-size:27.5px;line-height:33px;color:#303236;transform:scaleX(0.9634);-webkit-text-stroke:0.2px #303236;">US Treasury Debt</span>
<div class="a" style="left:536.8px;top:1170.9px;width:24.2px;height:24.2px;border-radius:50%;background:#d4a640"></div>
<span class="t" style="left:576.95px;top:1166.27px;font-family:'Liberation Sans', sans-serif;font-weight:400;font-size:27.5px;line-height:33px;color:#303236;transform:scaleX(0.9796);-webkit-text-stroke:0.2px #303236;">Commodities</span>
<div class="a" style="left:856.8px;top:1170.9px;width:24.2px;height:24.2px;border-radius:50%;background:#6ccbeb"></div>
<span class="t" style="left:895.72px;top:1166.27px;font-family:'Liberation Sans', sans-serif;font-weight:400;font-size:27.5px;line-height:33px;color:#303236;transform:scaleX(1.0136);-webkit-text-stroke:0.2px #303236;">Institutional Alter...</span>
<div class="a" style="left:1176.8px;top:1170.9px;width:24.2px;height:24.2px;border-radius:50%;background:#3b5cf4"></div>
<span class="t" style="left:1216.09px;top:1166.27px;font-family:'Liberation Sans', sans-serif;font-weight:400;font-size:27.5px;line-height:33px;color:#303236;transform:scaleX(0.9762);-webkit-text-stroke:0.2px #303236;">Private Credit</span>
<div class="a" style="left:1496.8px;top:1170.9px;width:24.2px;height:24.2px;border-radius:50%;background:#ec5429"></div>
<span class="t" style="left:1536.09px;top:1166.27px;font-family:'Liberation Sans', sans-serif;font-weight:400;font-size:27.5px;line-height:33px;color:#303236;transform:scaleX(0.9757);-webkit-text-stroke:0.2px #303236;">Public Equity</span>
<div class="a" style="left:1816.8px;top:1170.9px;width:24.2px;height:24.2px;border-radius:50%;background:#b0c0dc"></div>
<span class="t" style="left:1856.51px;top:1166.27px;font-family:'Liberation Sans', sans-serif;font-weight:400;font-size:27.5px;line-height:33px;color:#303236;transform:scaleX(0.9648);-webkit-text-stroke:0.2px #303236;">non-US Governm...</span>
<div class="a" style="left:216.8px;top:1209.0px;width:24.2px;height:24.2px;border-radius:50%;background:#f8d54a"></div>
<span class="t" style="left:256.10px;top:1204.37px;font-family:'Liberation Sans', sans-serif;font-weight:400;font-size:27.5px;line-height:33px;color:#303236;transform:scaleX(0.9717);-webkit-text-stroke:0.2px #303236;">Private Equity</span>
<div class="a" style="left:536.8px;top:1209.0px;width:24.2px;height:24.2px;border-radius:50%;background:#5a82b4"></div>
<span class="t" style="left:578.23px;top:1204.37px;font-family:'Liberation Sans', sans-serif;font-weight:400;font-size:27.5px;line-height:33px;color:#303236;transform:scaleX(0.9810);-webkit-text-stroke:0.2px #303236;">Actively-Manage...</span>
<div class="a" style="left:856.8px;top:1209.0px;width:24.2px;height:24.2px;border-radius:50%;background:#7b30d9"></div>
<span class="t" style="left:896.96px;top:1204.37px;font-family:'Liberation Sans', sans-serif;font-weight:400;font-size:27.5px;line-height:33px;color:#303236;transform:scaleX(0.9773);-webkit-text-stroke:0.2px #303236;">Corporate Bonds</span>
<div class="a" style="left:2201px;top:1229px;width:90px;height:90px;border-radius:50%;background:#ecdcb9;box-shadow:0 0 70px 30px rgba(0,0,0,0.05)"></div>
</body></html>
